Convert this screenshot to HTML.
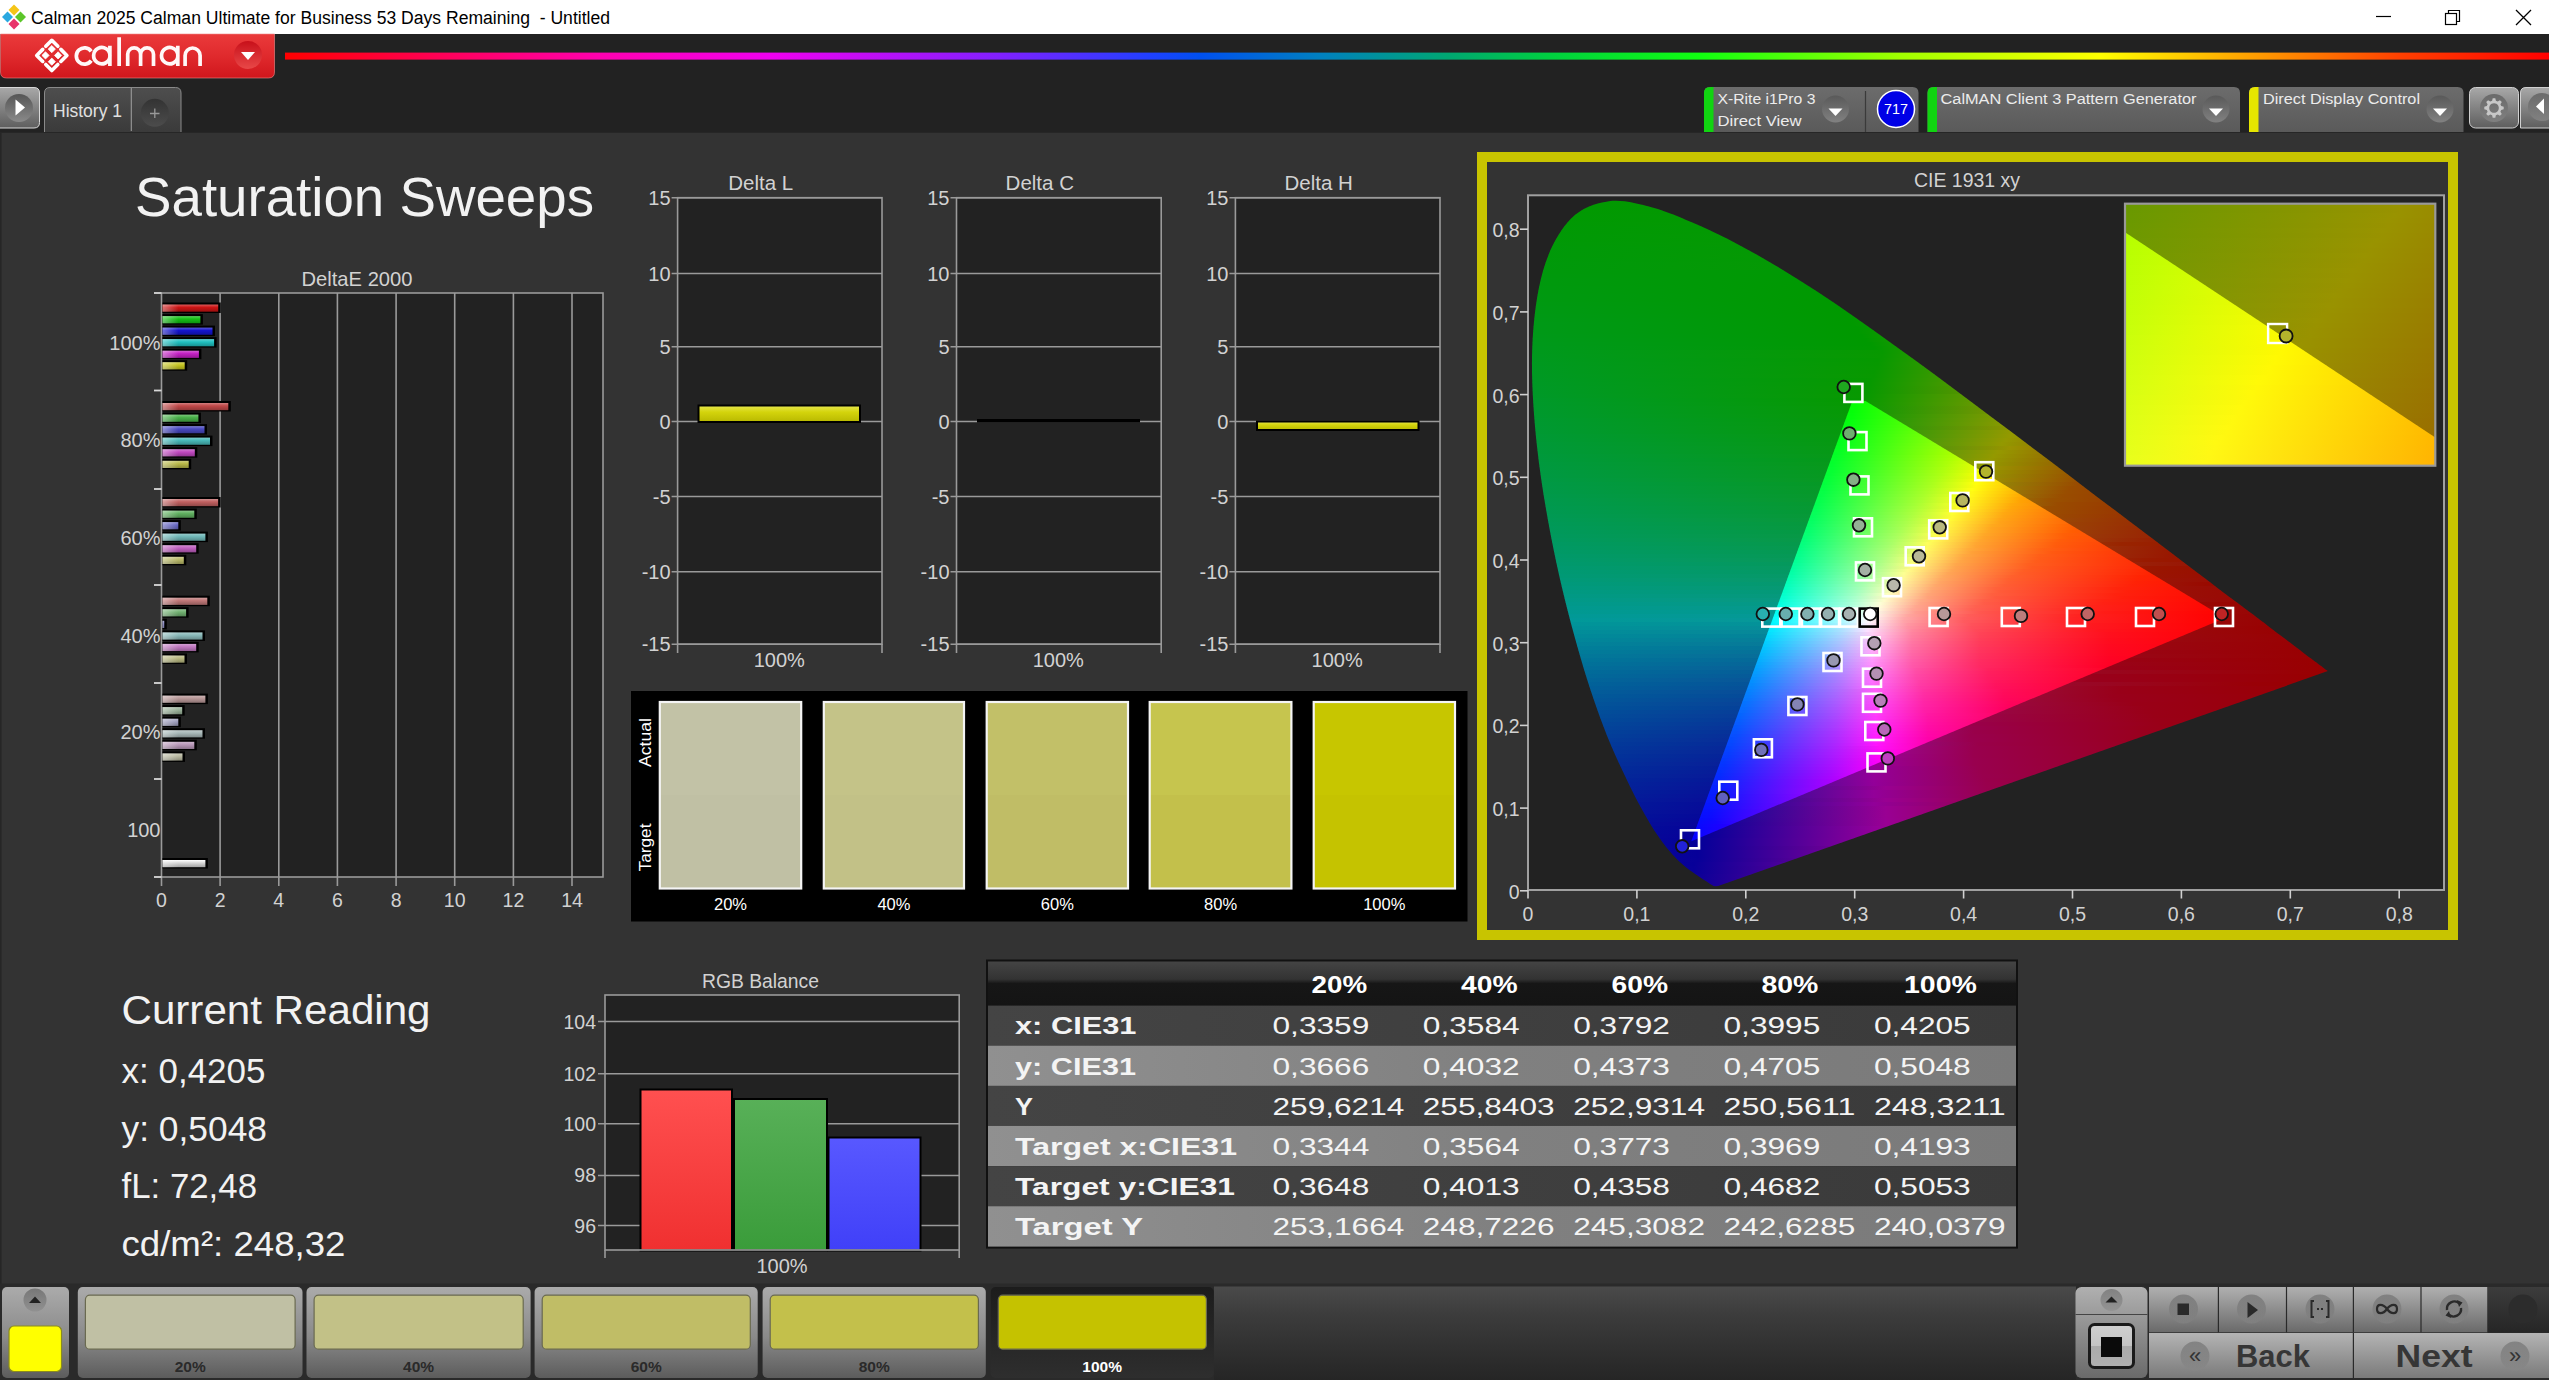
<!DOCTYPE html>
<html><head><meta charset="utf-8"><title>Calman</title>
<style>html,body{margin:0;padding:0;background:#333;overflow:hidden}svg{display:block}text{font-family:"Liberation Sans",sans-serif}</style>
</head><body>
<svg width="2549" height="1380" viewBox="0 0 2549 1380">
<defs>
<linearGradient id="redg" x1="0" y1="0" x2="0" y2="1"><stop offset="0" stop-color="#ea3a3b"/><stop offset="0.5" stop-color="#e02a2d"/><stop offset="1" stop-color="#d0161c"/></linearGradient>
<linearGradient id="redc" x1="0" y1="0" x2="0" y2="1"><stop offset="0" stop-color="#c8101a"/><stop offset="1" stop-color="#e84848"/></linearGradient>
<linearGradient id="rainbow" gradientUnits="userSpaceOnUse" x1="285" y1="0" x2="2549" y2="0">
<stop offset="0" stop-color="#ff0000"/>
<stop offset="0.14" stop-color="#ff00b0"/>
<stop offset="0.215" stop-color="#f000f0"/>
<stop offset="0.316" stop-color="#8020ff"/>
<stop offset="0.382" stop-color="#2040ff"/>
<stop offset="0.404" stop-color="#0050f0"/>
<stop offset="0.457" stop-color="#0080c0"/>
<stop offset="0.515" stop-color="#00a870"/>
<stop offset="0.559" stop-color="#00d040"/>
<stop offset="0.625" stop-color="#10ff10"/>
<stop offset="0.713" stop-color="#a0ff00"/>
<stop offset="0.802" stop-color="#ffff00"/>
<stop offset="0.868" stop-color="#ffa000"/>
<stop offset="0.934" stop-color="#ff4000"/>
<stop offset="1" stop-color="#ff0000"/>
</linearGradient>
<linearGradient id="btng" x1="0" y1="0" x2="0" y2="1"><stop offset="0" stop-color="#a8a8a8"/><stop offset="1" stop-color="#5e5e5e"/></linearGradient>
<linearGradient id="circg" x1="0" y1="0" x2="0" y2="1"><stop offset="0" stop-color="#555"/><stop offset="1" stop-color="#8a8a8a"/></linearGradient>
<linearGradient id="tabg" x1="0" y1="0" x2="0" y2="1"><stop offset="0" stop-color="#4e4e4e"/><stop offset="1" stop-color="#3a3a3a"/></linearGradient>
<linearGradient id="devg" x1="0" y1="0" x2="0" y2="1"><stop offset="0" stop-color="#6c6c6c"/><stop offset="1" stop-color="#5a5a5a"/></linearGradient>
<linearGradient id="plg" x1="0" y1="0" x2="0" y2="1"><stop offset="0" stop-color="#333"/><stop offset="1" stop-color="#4c4c4c"/></linearGradient>
<linearGradient id="strg" x1="0" y1="0" x2="0" y2="1"><stop offset="0" stop-color="#10d010"/><stop offset="1" stop-color="#10e010"/></linearGradient>
<linearGradient id="hlg" gradientUnits="objectBoundingBox" x1="0" y1="0" x2="1" y2="0"><stop offset="0" stop-color="#fff" stop-opacity="0.4"/><stop offset="1" stop-color="#fff" stop-opacity="0"/></linearGradient>
<linearGradient id="bg10" x1="0" y1="0" x2="0" y2="1"><stop offset="0" stop-color="#db5a5a"/><stop offset="0.4" stop-color="#cc1414"/><stop offset="1" stop-color="#990f0f"/></linearGradient>
<linearGradient id="bg11" x1="0" y1="0" x2="0" y2="1"><stop offset="0" stop-color="#5ad25a"/><stop offset="0.4" stop-color="#14c014"/><stop offset="1" stop-color="#0f900f"/></linearGradient>
<linearGradient id="bg12" x1="0" y1="0" x2="0" y2="1"><stop offset="0" stop-color="#5a5adb"/><stop offset="0.4" stop-color="#1414cc"/><stop offset="1" stop-color="#0f0f99"/></linearGradient>
<linearGradient id="bg13" x1="0" y1="0" x2="0" y2="1"><stop offset="0" stop-color="#62d2d2"/><stop offset="0.4" stop-color="#20c0c0"/><stop offset="1" stop-color="#189090"/></linearGradient>
<linearGradient id="bg14" x1="0" y1="0" x2="0" y2="1"><stop offset="0" stop-color="#d562d5"/><stop offset="0.4" stop-color="#c420c4"/><stop offset="1" stop-color="#931893"/></linearGradient>
<linearGradient id="bg15" x1="0" y1="0" x2="0" y2="1"><stop offset="0" stop-color="#d5d562"/><stop offset="0.4" stop-color="#c4c420"/><stop offset="1" stop-color="#939318"/></linearGradient>
<linearGradient id="bg16" x1="0" y1="0" x2="0" y2="1"><stop offset="0" stop-color="#d27e7e"/><stop offset="0.4" stop-color="#c04848"/><stop offset="1" stop-color="#903636"/></linearGradient>
<linearGradient id="bg17" x1="0" y1="0" x2="0" y2="1"><stop offset="0" stop-color="#7ec77e"/><stop offset="0.4" stop-color="#48b048"/><stop offset="1" stop-color="#368436"/></linearGradient>
<linearGradient id="bg18" x1="0" y1="0" x2="0" y2="1"><stop offset="0" stop-color="#7e7ed2"/><stop offset="0.4" stop-color="#4848c0"/><stop offset="1" stop-color="#363690"/></linearGradient>
<linearGradient id="bg19" x1="0" y1="0" x2="0" y2="1"><stop offset="0" stop-color="#7ecdcd"/><stop offset="0.4" stop-color="#48b8b8"/><stop offset="1" stop-color="#368a8a"/></linearGradient>
<linearGradient id="bg20" x1="0" y1="0" x2="0" y2="1"><stop offset="0" stop-color="#d27ed2"/><stop offset="0.4" stop-color="#c048c0"/><stop offset="1" stop-color="#903690"/></linearGradient>
<linearGradient id="bg21" x1="0" y1="0" x2="0" y2="1"><stop offset="0" stop-color="#cdcd7e"/><stop offset="0.4" stop-color="#b8b848"/><stop offset="1" stop-color="#8a8a36"/></linearGradient>
<linearGradient id="bg22" x1="0" y1="0" x2="0" y2="1"><stop offset="0" stop-color="#d28f8f"/><stop offset="0.4" stop-color="#c06060"/><stop offset="1" stop-color="#904848"/></linearGradient>
<linearGradient id="bg23" x1="0" y1="0" x2="0" y2="1"><stop offset="0" stop-color="#8fc78f"/><stop offset="0.4" stop-color="#60b060"/><stop offset="1" stop-color="#488448"/></linearGradient>
<linearGradient id="bg24" x1="0" y1="0" x2="0" y2="1"><stop offset="0" stop-color="#8f8fd2"/><stop offset="0.4" stop-color="#6060c0"/><stop offset="1" stop-color="#484890"/></linearGradient>
<linearGradient id="bg25" x1="0" y1="0" x2="0" y2="1"><stop offset="0" stop-color="#9acdcd"/><stop offset="0.4" stop-color="#70b8b8"/><stop offset="1" stop-color="#548a8a"/></linearGradient>
<linearGradient id="bg26" x1="0" y1="0" x2="0" y2="1"><stop offset="0" stop-color="#d28fd2"/><stop offset="0.4" stop-color="#c060c0"/><stop offset="1" stop-color="#904890"/></linearGradient>
<linearGradient id="bg27" x1="0" y1="0" x2="0" y2="1"><stop offset="0" stop-color="#cdcd95"/><stop offset="0.4" stop-color="#b8b868"/><stop offset="1" stop-color="#8a8a4e"/></linearGradient>
<linearGradient id="bg28" x1="0" y1="0" x2="0" y2="1"><stop offset="0" stop-color="#d2a0a0"/><stop offset="0.4" stop-color="#c07878"/><stop offset="1" stop-color="#905a5a"/></linearGradient>
<linearGradient id="bg29" x1="0" y1="0" x2="0" y2="1"><stop offset="0" stop-color="#9ac79a"/><stop offset="0.4" stop-color="#70b070"/><stop offset="1" stop-color="#548454"/></linearGradient>
<linearGradient id="bg30" x1="0" y1="0" x2="0" y2="1"><stop offset="0" stop-color="#a0a0cd"/><stop offset="0.4" stop-color="#7878b8"/><stop offset="1" stop-color="#5a5a8a"/></linearGradient>
<linearGradient id="bg31" x1="0" y1="0" x2="0" y2="1"><stop offset="0" stop-color="#abcdcd"/><stop offset="0.4" stop-color="#88b8b8"/><stop offset="1" stop-color="#668a8a"/></linearGradient>
<linearGradient id="bg32" x1="0" y1="0" x2="0" y2="1"><stop offset="0" stop-color="#d2a0d2"/><stop offset="0.4" stop-color="#c078c0"/><stop offset="1" stop-color="#905a90"/></linearGradient>
<linearGradient id="bg33" x1="0" y1="0" x2="0" y2="1"><stop offset="0" stop-color="#cdcda6"/><stop offset="0.4" stop-color="#b8b880"/><stop offset="1" stop-color="#8a8a60"/></linearGradient>
<linearGradient id="bg34" x1="0" y1="0" x2="0" y2="1"><stop offset="0" stop-color="#cdb6b6"/><stop offset="0.4" stop-color="#b89898"/><stop offset="1" stop-color="#8a7272"/></linearGradient>
<linearGradient id="bg35" x1="0" y1="0" x2="0" y2="1"><stop offset="0" stop-color="#b6c7b6"/><stop offset="0.4" stop-color="#98b098"/><stop offset="1" stop-color="#728472"/></linearGradient>
<linearGradient id="bg36" x1="0" y1="0" x2="0" y2="1"><stop offset="0" stop-color="#b6b6cd"/><stop offset="0.4" stop-color="#9898b8"/><stop offset="1" stop-color="#72728a"/></linearGradient>
<linearGradient id="bg37" x1="0" y1="0" x2="0" y2="1"><stop offset="0" stop-color="#c2cdcd"/><stop offset="0.4" stop-color="#a8b8b8"/><stop offset="1" stop-color="#7e8a8a"/></linearGradient>
<linearGradient id="bg38" x1="0" y1="0" x2="0" y2="1"><stop offset="0" stop-color="#cdb6cd"/><stop offset="0.4" stop-color="#b898b8"/><stop offset="1" stop-color="#8a728a"/></linearGradient>
<linearGradient id="bg39" x1="0" y1="0" x2="0" y2="1"><stop offset="0" stop-color="#cdcdbc"/><stop offset="0.4" stop-color="#b8b8a0"/><stop offset="1" stop-color="#8a8a78"/></linearGradient>
<linearGradient id="bg40" x1="0" y1="0" x2="0" y2="1"><stop offset="0" stop-color="#ffffff"/><stop offset="0.4" stop-color="#d8d8d8"/><stop offset="1" stop-color="#a2a2a2"/></linearGradient>
<linearGradient id="ylbar" x1="0" y1="0" x2="0" y2="1"><stop offset="0" stop-color="#e6e650"/><stop offset="0.4" stop-color="#d4d40c"/><stop offset="1" stop-color="#b8b800"/></linearGradient>
<clipPath id="locus"><path d="M1716.0 886.8 C1715.7 886.8 1715.1 886.7 1714.7 886.6 C1714.2 886.4 1713.9 886.3 1713.5 886.0 C1713.0 885.8 1712.5 885.5 1711.9 885.1 C1711.3 884.7 1710.6 884.2 1709.8 883.7 C1708.9 883.1 1708.1 882.5 1707.0 881.8 C1706.0 881.1 1704.9 880.3 1703.4 879.4 C1702.0 878.5 1700.4 877.4 1698.5 876.2 C1696.7 874.9 1694.7 873.7 1692.4 872.0 C1690.2 870.4 1687.6 868.6 1684.8 866.2 C1682.0 863.9 1679.2 861.7 1675.6 857.8 C1671.9 853.9 1667.8 849.5 1663.1 843.0 C1658.4 836.5 1653.3 829.3 1647.4 819.0 C1641.4 808.7 1634.8 796.8 1627.4 781.1 C1620.0 765.4 1611.1 747.2 1602.8 724.8 C1594.5 702.5 1585.6 676.1 1577.4 646.8 C1569.2 617.6 1560.3 583.0 1553.6 549.5 C1546.8 515.9 1540.5 478.9 1536.9 445.5 C1533.4 412.2 1531.2 378.5 1532.2 349.3 C1533.3 320.1 1536.8 292.1 1543.1 270.4 C1549.5 248.7 1559.4 230.8 1570.4 219.3 C1581.3 207.8 1595.2 203.2 1608.9 201.2 C1622.6 199.3 1637.8 203.7 1652.4 207.5 C1667.0 211.4 1682.2 218.2 1696.5 224.3 C1710.8 230.5 1724.5 237.3 1738.1 244.4 C1751.7 251.5 1764.8 259.1 1778.0 267.0 C1791.3 274.9 1804.4 283.3 1817.5 291.8 C1830.5 300.3 1843.5 309.3 1856.4 318.3 C1869.4 327.3 1882.3 336.5 1895.3 345.9 C1908.3 355.2 1921.3 364.8 1934.3 374.3 C1947.3 383.9 1960.2 393.6 1973.1 403.2 C1986.0 412.8 1998.9 422.5 2011.6 432.1 C2024.3 441.6 2037.0 451.2 2049.4 460.6 C2061.8 470.0 2074.1 479.3 2086.1 488.4 C2098.1 497.5 2109.9 506.4 2121.3 515.0 C2132.7 523.6 2143.8 532.0 2154.4 540.0 C2164.9 548.0 2175.2 555.8 2184.6 562.9 C2194.0 570.0 2202.6 576.5 2210.8 582.7 C2219.0 589.0 2226.8 594.9 2233.9 600.2 C2240.9 605.5 2247.3 610.2 2253.1 614.6 C2258.8 619.0 2264.0 622.9 2268.6 626.4 C2273.3 630.0 2277.3 633.0 2281.0 635.8 C2284.8 638.6 2288.0 641.0 2291.0 643.3 C2293.9 645.5 2296.5 647.5 2298.9 649.3 C2301.3 651.2 2303.5 652.8 2305.5 654.4 C2307.6 655.9 2309.4 657.3 2311.0 658.5 C2312.6 659.7 2314.1 660.8 2315.3 661.7 C2316.6 662.7 2317.7 663.5 2318.6 664.2 C2319.6 664.9 2320.4 665.6 2321.1 666.1 C2321.8 666.7 2322.5 667.1 2323.0 667.5 C2323.5 667.9 2323.8 668.1 2324.2 668.4 C2324.5 668.7 2324.7 668.8 2325.1 669.2 C2325.6 669.5 2326.2 670.0 2326.7 670.3 C2327.1 670.7 2327.6 671.0 2327.8 671.1 Z"/></clipPath>
<clipPath id="tri"><path d="M2225.0 617.9 L1854.7 394.6 L1691.3 841.2 Z"/></clipPath>
<linearGradient id="o0" gradientUnits="userSpaceOnUse" x1="1530" x2="2330" y1="0" y2="0"><stop offset=".000" stop-color="#009900"/><stop offset=".515" stop-color="#079900"/><stop offset=".835" stop-color="#969900"/><stop offset="1.000" stop-color="#995b00"/></linearGradient>
<linearGradient id="o1" gradientUnits="userSpaceOnUse" x1="1530" x2="2330" y1="0" y2="0"><stop offset=".000" stop-color="#009901"/><stop offset=".515" stop-color="#089900"/><stop offset=".830" stop-color="#969900"/><stop offset="1.000" stop-color="#995a00"/></linearGradient>
<linearGradient id="o2" gradientUnits="userSpaceOnUse" x1="1530" x2="2330" y1="0" y2="0"><stop offset=".000" stop-color="#009901"/><stop offset=".510" stop-color="#079900"/><stop offset=".825" stop-color="#959900"/><stop offset="1.000" stop-color="#995900"/></linearGradient>
<linearGradient id="o3" gradientUnits="userSpaceOnUse" x1="1530" x2="2330" y1="0" y2="0"><stop offset=".000" stop-color="#009902"/><stop offset=".510" stop-color="#079900"/><stop offset=".820" stop-color="#949900"/><stop offset="1.000" stop-color="#995800"/></linearGradient>
<linearGradient id="o4" gradientUnits="userSpaceOnUse" x1="1530" x2="2330" y1="0" y2="0"><stop offset=".000" stop-color="#009903"/><stop offset=".510" stop-color="#089900"/><stop offset=".835" stop-color="#999300"/><stop offset="1.000" stop-color="#995600"/></linearGradient>
<linearGradient id="o5" gradientUnits="userSpaceOnUse" x1="1530" x2="2330" y1="0" y2="0"><stop offset=".000" stop-color="#009903"/><stop offset=".505" stop-color="#079900"/><stop offset=".815" stop-color="#969900"/><stop offset="1.000" stop-color="#995500"/></linearGradient>
<linearGradient id="o6" gradientUnits="userSpaceOnUse" x1="1530" x2="2330" y1="0" y2="0"><stop offset=".000" stop-color="#009904"/><stop offset=".505" stop-color="#089900"/><stop offset=".810" stop-color="#959900"/><stop offset="1.000" stop-color="#995400"/></linearGradient>
<linearGradient id="o7" gradientUnits="userSpaceOnUse" x1="1530" x2="2330" y1="0" y2="0"><stop offset=".000" stop-color="#009905"/><stop offset=".500" stop-color="#079900"/><stop offset=".805" stop-color="#959900"/><stop offset="1.000" stop-color="#995300"/></linearGradient>
<linearGradient id="o8" gradientUnits="userSpaceOnUse" x1="1530" x2="2330" y1="0" y2="0"><stop offset=".000" stop-color="#009905"/><stop offset=".500" stop-color="#079900"/><stop offset=".800" stop-color="#949900"/><stop offset="1.000" stop-color="#995100"/></linearGradient>
<linearGradient id="o9" gradientUnits="userSpaceOnUse" x1="1530" x2="2330" y1="0" y2="0"><stop offset=".000" stop-color="#009906"/><stop offset=".500" stop-color="#089900"/><stop offset=".815" stop-color="#999300"/><stop offset="1.000" stop-color="#995000"/></linearGradient>
<linearGradient id="o10" gradientUnits="userSpaceOnUse" x1="1530" x2="2330" y1="0" y2="0"><stop offset=".000" stop-color="#009906"/><stop offset=".495" stop-color="#079900"/><stop offset=".795" stop-color="#969900"/><stop offset="1.000" stop-color="#994f00"/></linearGradient>
<linearGradient id="o11" gradientUnits="userSpaceOnUse" x1="1530" x2="2330" y1="0" y2="0"><stop offset=".000" stop-color="#009907"/><stop offset=".495" stop-color="#089900"/><stop offset=".790" stop-color="#959900"/><stop offset="1.000" stop-color="#994e00"/></linearGradient>
<linearGradient id="o12" gradientUnits="userSpaceOnUse" x1="1530" x2="2330" y1="0" y2="0"><stop offset=".000" stop-color="#009908"/><stop offset=".490" stop-color="#079900"/><stop offset=".785" stop-color="#959900"/><stop offset=".995" stop-color="#994e00"/><stop offset="1.000" stop-color="#994c00"/></linearGradient>
<linearGradient id="o13" gradientUnits="userSpaceOnUse" x1="1530" x2="2330" y1="0" y2="0"><stop offset=".000" stop-color="#009909"/><stop offset=".490" stop-color="#079900"/><stop offset=".780" stop-color="#949900"/><stop offset=".995" stop-color="#994c00"/><stop offset="1.000" stop-color="#994b00"/></linearGradient>
<linearGradient id="o14" gradientUnits="userSpaceOnUse" x1="1530" x2="2330" y1="0" y2="0"><stop offset=".000" stop-color="#009909"/><stop offset=".490" stop-color="#089900"/><stop offset=".795" stop-color="#999300"/><stop offset=".985" stop-color="#994d00"/><stop offset="1.000" stop-color="#994a00"/></linearGradient>
<linearGradient id="o15" gradientUnits="userSpaceOnUse" x1="1530" x2="2330" y1="0" y2="0"><stop offset=".000" stop-color="#00990a"/><stop offset=".485" stop-color="#079900"/><stop offset=".775" stop-color="#969900"/><stop offset=".975" stop-color="#994e00"/><stop offset="1.000" stop-color="#994900"/></linearGradient>
<linearGradient id="o16" gradientUnits="userSpaceOnUse" x1="1530" x2="2330" y1="0" y2="0"><stop offset=".000" stop-color="#00990b"/><stop offset=".485" stop-color="#089900"/><stop offset=".770" stop-color="#959900"/><stop offset=".970" stop-color="#994e00"/><stop offset="1.000" stop-color="#994800"/></linearGradient>
<linearGradient id="o17" gradientUnits="userSpaceOnUse" x1="1530" x2="2330" y1="0" y2="0"><stop offset=".000" stop-color="#00990b"/><stop offset=".485" stop-color="#089900"/><stop offset=".785" stop-color="#999100"/><stop offset=".970" stop-color="#994d00"/><stop offset="1.000" stop-color="#994700"/></linearGradient>
<linearGradient id="o18" gradientUnits="userSpaceOnUse" x1="1530" x2="2330" y1="0" y2="0"><stop offset=".000" stop-color="#00990c"/><stop offset=".455" stop-color="#009900"/><stop offset=".720" stop-color="#7c9900"/><stop offset=".785" stop-color="#998f00"/><stop offset=".975" stop-color="#994b00"/><stop offset="1.000" stop-color="#994500"/></linearGradient>
<linearGradient id="o19" gradientUnits="userSpaceOnUse" x1="1530" x2="2330" y1="0" y2="0"><stop offset=".000" stop-color="#00990d"/><stop offset=".425" stop-color="#009900"/><stop offset=".500" stop-color="#109900"/><stop offset=".775" stop-color="#999200"/><stop offset=".960" stop-color="#994d00"/><stop offset="1.000" stop-color="#994400"/></linearGradient>
<linearGradient id="o20" gradientUnits="userSpaceOnUse" x1="1530" x2="2330" y1="0" y2="0"><stop offset=".000" stop-color="#00990e"/><stop offset=".410" stop-color="#009900"/><stop offset=".490" stop-color="#0d9900"/><stop offset=".770" stop-color="#999300"/><stop offset=".950" stop-color="#994e00"/><stop offset="1.000" stop-color="#994300"/></linearGradient>
<linearGradient id="o21" gradientUnits="userSpaceOnUse" x1="1530" x2="2330" y1="0" y2="0"><stop offset=".000" stop-color="#00990e"/><stop offset=".400" stop-color="#009900"/><stop offset=".485" stop-color="#0c9900"/><stop offset=".770" stop-color="#999100"/><stop offset=".955" stop-color="#994c00"/><stop offset="1.000" stop-color="#994200"/></linearGradient>
<linearGradient id="o22" gradientUnits="userSpaceOnUse" x1="1530" x2="2330" y1="0" y2="0"><stop offset=".000" stop-color="#00990f"/><stop offset=".390" stop-color="#009900"/><stop offset=".480" stop-color="#0a9900"/><stop offset=".765" stop-color="#999100"/><stop offset=".945" stop-color="#994d00"/><stop offset="1.000" stop-color="#994100"/></linearGradient>
<linearGradient id="o23" gradientUnits="userSpaceOnUse" x1="1530" x2="2330" y1="0" y2="0"><stop offset=".000" stop-color="#009910"/><stop offset=".390" stop-color="#009900"/><stop offset=".480" stop-color="#0b9900"/><stop offset=".760" stop-color="#999200"/><stop offset=".940" stop-color="#994d00"/><stop offset="1.000" stop-color="#994000"/></linearGradient>
<linearGradient id="o24" gradientUnits="userSpaceOnUse" x1="1530" x2="2330" y1="0" y2="0"><stop offset=".000" stop-color="#009911"/><stop offset=".390" stop-color="#009900"/><stop offset=".475" stop-color="#0a9900"/><stop offset=".755" stop-color="#999200"/><stop offset=".930" stop-color="#994e00"/><stop offset="1.000" stop-color="#993f00"/></linearGradient>
<linearGradient id="o25" gradientUnits="userSpaceOnUse" x1="1530" x2="2330" y1="0" y2="0"><stop offset=".000" stop-color="#009911"/><stop offset=".385" stop-color="#009900"/><stop offset=".475" stop-color="#0b9900"/><stop offset=".750" stop-color="#999300"/><stop offset=".925" stop-color="#994e00"/><stop offset="1.000" stop-color="#993d00"/></linearGradient>
<linearGradient id="o26" gradientUnits="userSpaceOnUse" x1="1530" x2="2330" y1="0" y2="0"><stop offset=".000" stop-color="#009912"/><stop offset=".390" stop-color="#009900"/><stop offset=".475" stop-color="#0c9900"/><stop offset=".745" stop-color="#999300"/><stop offset=".915" stop-color="#994f00"/><stop offset="1.000" stop-color="#993c00"/></linearGradient>
<linearGradient id="o27" gradientUnits="userSpaceOnUse" x1="1530" x2="2330" y1="0" y2="0"><stop offset=".000" stop-color="#009913"/><stop offset=".390" stop-color="#009900"/><stop offset=".470" stop-color="#0a9900"/><stop offset=".745" stop-color="#999100"/><stop offset=".920" stop-color="#994c00"/><stop offset="1.000" stop-color="#993b00"/></linearGradient>
<linearGradient id="o28" gradientUnits="userSpaceOnUse" x1="1530" x2="2330" y1="0" y2="0"><stop offset=".000" stop-color="#009914"/><stop offset=".390" stop-color="#009900"/><stop offset=".470" stop-color="#0b9900"/><stop offset=".740" stop-color="#999100"/><stop offset=".910" stop-color="#994d00"/><stop offset="1.000" stop-color="#993a00"/></linearGradient>
<linearGradient id="o29" gradientUnits="userSpaceOnUse" x1="1530" x2="2330" y1="0" y2="0"><stop offset=".000" stop-color="#009915"/><stop offset=".395" stop-color="#009900"/><stop offset=".470" stop-color="#0c9900"/><stop offset=".735" stop-color="#999200"/><stop offset=".905" stop-color="#994d00"/><stop offset="1.000" stop-color="#993900"/></linearGradient>
<linearGradient id="o30" gradientUnits="userSpaceOnUse" x1="1530" x2="2330" y1="0" y2="0"><stop offset=".000" stop-color="#009916"/><stop offset=".400" stop-color="#009900"/><stop offset=".470" stop-color="#0d9900"/><stop offset=".730" stop-color="#999300"/><stop offset=".900" stop-color="#994d00"/><stop offset="1.000" stop-color="#993800"/></linearGradient>
<linearGradient id="o31" gradientUnits="userSpaceOnUse" x1="1530" x2="2330" y1="0" y2="0"><stop offset=".000" stop-color="#009917"/><stop offset=".400" stop-color="#009900"/><stop offset=".475" stop-color="#109900"/><stop offset=".725" stop-color="#999300"/><stop offset=".890" stop-color="#994e00"/><stop offset="1.000" stop-color="#993700"/></linearGradient>
<linearGradient id="o32" gradientUnits="userSpaceOnUse" x1="1530" x2="2330" y1="0" y2="0"><stop offset=".000" stop-color="#009917"/><stop offset=".410" stop-color="#009900"/><stop offset=".495" stop-color="#1b9900"/><stop offset=".725" stop-color="#999100"/><stop offset=".895" stop-color="#994c00"/><stop offset="1.000" stop-color="#993600"/></linearGradient>
<linearGradient id="o33" gradientUnits="userSpaceOnUse" x1="1530" x2="2330" y1="0" y2="0"><stop offset=".000" stop-color="#009918"/><stop offset=".410" stop-color="#009900"/><stop offset=".495" stop-color="#1c9900"/><stop offset=".720" stop-color="#999100"/><stop offset=".885" stop-color="#994d00"/><stop offset="1.000" stop-color="#993500"/></linearGradient>
<linearGradient id="o34" gradientUnits="userSpaceOnUse" x1="1530" x2="2330" y1="0" y2="0"><stop offset=".000" stop-color="#009919"/><stop offset=".415" stop-color="#009900"/><stop offset=".585" stop-color="#4d9900"/><stop offset=".715" stop-color="#999200"/><stop offset=".880" stop-color="#994d00"/><stop offset="1.000" stop-color="#993400"/></linearGradient>
<linearGradient id="o35" gradientUnits="userSpaceOnUse" x1="1530" x2="2330" y1="0" y2="0"><stop offset=".000" stop-color="#00991a"/><stop offset=".420" stop-color="#009900"/><stop offset=".635" stop-color="#6d9900"/><stop offset=".715" stop-color="#998f00"/><stop offset=".880" stop-color="#994b00"/><stop offset="1.000" stop-color="#993300"/></linearGradient>
<linearGradient id="o36" gradientUnits="userSpaceOnUse" x1="1530" x2="2330" y1="0" y2="0"><stop offset=".000" stop-color="#00991b"/><stop offset=".425" stop-color="#009900"/><stop offset=".665" stop-color="#839900"/><stop offset=".715" stop-color="#998d00"/><stop offset=".885" stop-color="#994900"/><stop offset="1.000" stop-color="#993200"/></linearGradient>
<linearGradient id="o37" gradientUnits="userSpaceOnUse" x1="1530" x2="2330" y1="0" y2="0"><stop offset=".000" stop-color="#00991c"/><stop offset=".430" stop-color="#019900"/><stop offset=".680" stop-color="#909900"/><stop offset=".795" stop-color="#996300"/><stop offset="1.000" stop-color="#993100"/></linearGradient>
<linearGradient id="o38" gradientUnits="userSpaceOnUse" x1="1530" x2="2330" y1="0" y2="0"><stop offset=".000" stop-color="#00991d"/><stop offset=".440" stop-color="#079900"/><stop offset=".680" stop-color="#939900"/><stop offset=".865" stop-color="#994b00"/><stop offset="1.000" stop-color="#993000"/></linearGradient>
<linearGradient id="o39" gradientUnits="userSpaceOnUse" x1="1530" x2="2330" y1="0" y2="0"><stop offset=".000" stop-color="#00991e"/><stop offset=".440" stop-color="#089900"/><stop offset=".680" stop-color="#959900"/><stop offset=".845" stop-color="#994f00"/><stop offset="1.000" stop-color="#992f00"/></linearGradient>
<linearGradient id="o40" gradientUnits="userSpaceOnUse" x1="1530" x2="2330" y1="0" y2="0"><stop offset=".000" stop-color="#00991f"/><stop offset=".435" stop-color="#069900"/><stop offset=".675" stop-color="#959900"/><stop offset=".845" stop-color="#994e00"/><stop offset="1.000" stop-color="#992e00"/></linearGradient>
<linearGradient id="o41" gradientUnits="userSpaceOnUse" x1="1530" x2="2330" y1="0" y2="0"><stop offset=".000" stop-color="#009920"/><stop offset=".435" stop-color="#079900"/><stop offset=".670" stop-color="#949900"/><stop offset=".840" stop-color="#994e00"/><stop offset="1.000" stop-color="#992d00"/></linearGradient>
<linearGradient id="o42" gradientUnits="userSpaceOnUse" x1="1530" x2="2330" y1="0" y2="0"><stop offset=".000" stop-color="#009921"/><stop offset=".435" stop-color="#089900"/><stop offset=".680" stop-color="#999400"/><stop offset=".830" stop-color="#994f00"/><stop offset="1.000" stop-color="#992c00"/></linearGradient>
<linearGradient id="o43" gradientUnits="userSpaceOnUse" x1="1530" x2="2330" y1="0" y2="0"><stop offset=".000" stop-color="#009922"/><stop offset=".430" stop-color="#079900"/><stop offset=".660" stop-color="#929900"/><stop offset=".835" stop-color="#994c00"/><stop offset="1.000" stop-color="#992b00"/></linearGradient>
<linearGradient id="o44" gradientUnits="userSpaceOnUse" x1="1530" x2="2330" y1="0" y2="0"><stop offset=".000" stop-color="#009923"/><stop offset=".430" stop-color="#089900"/><stop offset=".660" stop-color="#959900"/><stop offset=".820" stop-color="#994f00"/><stop offset="1.000" stop-color="#992a00"/></linearGradient>
<linearGradient id="o45" gradientUnits="userSpaceOnUse" x1="1530" x2="2330" y1="0" y2="0"><stop offset=".000" stop-color="#009924"/><stop offset=".425" stop-color="#069900"/><stop offset=".655" stop-color="#949900"/><stop offset=".820" stop-color="#994d00"/><stop offset="1.000" stop-color="#992900"/></linearGradient>
<linearGradient id="o46" gradientUnits="userSpaceOnUse" x1="1530" x2="2330" y1="0" y2="0"><stop offset=".000" stop-color="#009925"/><stop offset=".425" stop-color="#079900"/><stop offset=".650" stop-color="#949900"/><stop offset=".815" stop-color="#994d00"/><stop offset="1.000" stop-color="#992800"/></linearGradient>
<linearGradient id="o47" gradientUnits="userSpaceOnUse" x1="1530" x2="2330" y1="0" y2="0"><stop offset=".000" stop-color="#009926"/><stop offset=".425" stop-color="#089900"/><stop offset=".660" stop-color="#999400"/><stop offset=".805" stop-color="#994e00"/><stop offset="1.000" stop-color="#992700"/></linearGradient>
<linearGradient id="o48" gradientUnits="userSpaceOnUse" x1="1530" x2="2330" y1="0" y2="0"><stop offset=".000" stop-color="#009927"/><stop offset=".420" stop-color="#079900"/><stop offset=".660" stop-color="#999000"/><stop offset=".805" stop-color="#994d00"/><stop offset="1.000" stop-color="#992600"/></linearGradient>
<linearGradient id="o49" gradientUnits="userSpaceOnUse" x1="1530" x2="2330" y1="0" y2="0"><stop offset=".000" stop-color="#009928"/><stop offset=".420" stop-color="#089900"/><stop offset=".640" stop-color="#959900"/><stop offset=".795" stop-color="#994e00"/><stop offset="1.000" stop-color="#992500"/></linearGradient>
<linearGradient id="o50" gradientUnits="userSpaceOnUse" x1="1530" x2="2330" y1="0" y2="0"><stop offset=".000" stop-color="#00992a"/><stop offset=".415" stop-color="#069900"/><stop offset=".635" stop-color="#949900"/><stop offset=".795" stop-color="#994d00"/><stop offset="1.000" stop-color="#992400"/></linearGradient>
<linearGradient id="o51" gradientUnits="userSpaceOnUse" x1="1530" x2="2330" y1="0" y2="0"><stop offset=".000" stop-color="#00992b"/><stop offset=".415" stop-color="#079901"/><stop offset=".630" stop-color="#939900"/><stop offset=".790" stop-color="#994c00"/><stop offset="1.000" stop-color="#992300"/></linearGradient>
<linearGradient id="o52" gradientUnits="userSpaceOnUse" x1="1530" x2="2330" y1="0" y2="0"><stop offset=".000" stop-color="#00992c"/><stop offset=".415" stop-color="#089903"/><stop offset=".640" stop-color="#999300"/><stop offset=".780" stop-color="#994e00"/><stop offset="1.000" stop-color="#992200"/></linearGradient>
<linearGradient id="o53" gradientUnits="userSpaceOnUse" x1="1530" x2="2330" y1="0" y2="0"><stop offset=".000" stop-color="#00992d"/><stop offset=".410" stop-color="#069905"/><stop offset=".635" stop-color="#999400"/><stop offset=".770" stop-color="#994f00"/><stop offset="1.000" stop-color="#992100"/></linearGradient>
<linearGradient id="o54" gradientUnits="userSpaceOnUse" x1="1530" x2="2330" y1="0" y2="0"><stop offset=".000" stop-color="#00992e"/><stop offset=".410" stop-color="#079906"/><stop offset=".620" stop-color="#959900"/><stop offset=".770" stop-color="#994e00"/><stop offset="1.000" stop-color="#992000"/></linearGradient>
<linearGradient id="o55" gradientUnits="userSpaceOnUse" x1="1530" x2="2330" y1="0" y2="0"><stop offset=".000" stop-color="#009930"/><stop offset=".405" stop-color="#069908"/><stop offset=".615" stop-color="#949900"/><stop offset=".765" stop-color="#994e00"/><stop offset="1.000" stop-color="#991f00"/></linearGradient>
<linearGradient id="o56" gradientUnits="userSpaceOnUse" x1="1530" x2="2330" y1="0" y2="0"><stop offset=".000" stop-color="#009931"/><stop offset=".405" stop-color="#079909"/><stop offset=".610" stop-color="#939900"/><stop offset=".765" stop-color="#994c00"/><stop offset="1.000" stop-color="#991f00"/></linearGradient>
<linearGradient id="o57" gradientUnits="userSpaceOnUse" x1="1530" x2="2330" y1="0" y2="0"><stop offset=".000" stop-color="#009932"/><stop offset=".405" stop-color="#08990a"/><stop offset=".620" stop-color="#999300"/><stop offset=".750" stop-color="#994f00"/><stop offset="1.000" stop-color="#991e00"/></linearGradient>
<linearGradient id="o58" gradientUnits="userSpaceOnUse" x1="1530" x2="2330" y1="0" y2="0"><stop offset=".000" stop-color="#009933"/><stop offset=".400" stop-color="#06990c"/><stop offset=".605" stop-color="#959900"/><stop offset=".745" stop-color="#994f00"/><stop offset="1.000" stop-color="#991d00"/></linearGradient>
<linearGradient id="o59" gradientUnits="userSpaceOnUse" x1="1530" x2="2330" y1="0" y2="0"><stop offset=".000" stop-color="#009935"/><stop offset=".400" stop-color="#07990e"/><stop offset=".600" stop-color="#949900"/><stop offset=".745" stop-color="#994d00"/><stop offset="1.000" stop-color="#991c00"/></linearGradient>
<linearGradient id="o60" gradientUnits="userSpaceOnUse" x1="1530" x2="2330" y1="0" y2="0"><stop offset=".000" stop-color="#009936"/><stop offset=".395" stop-color="#069910"/><stop offset=".595" stop-color="#949900"/><stop offset=".740" stop-color="#994d00"/><stop offset="1.000" stop-color="#991b00"/></linearGradient>
<linearGradient id="o61" gradientUnits="userSpaceOnUse" x1="1530" x2="2330" y1="0" y2="0"><stop offset=".000" stop-color="#009938"/><stop offset=".395" stop-color="#079911"/><stop offset=".590" stop-color="#939900"/><stop offset=".740" stop-color="#994b00"/><stop offset="1.000" stop-color="#991a00"/></linearGradient>
<linearGradient id="o62" gradientUnits="userSpaceOnUse" x1="1530" x2="2330" y1="0" y2="0"><stop offset=".000" stop-color="#009939"/><stop offset=".395" stop-color="#089913"/><stop offset=".600" stop-color="#999300"/><stop offset=".725" stop-color="#994e00"/><stop offset="1.000" stop-color="#991900"/></linearGradient>
<linearGradient id="o63" gradientUnits="userSpaceOnUse" x1="1530" x2="2330" y1="0" y2="0"><stop offset=".000" stop-color="#00993a"/><stop offset=".390" stop-color="#069915"/><stop offset=".585" stop-color="#959900"/><stop offset=".720" stop-color="#994e00"/><stop offset=".995" stop-color="#991900"/><stop offset="1.000" stop-color="#991800"/></linearGradient>
<linearGradient id="o64" gradientUnits="userSpaceOnUse" x1="1530" x2="2330" y1="0" y2="0"><stop offset=".000" stop-color="#00993c"/><stop offset=".390" stop-color="#079917"/><stop offset=".580" stop-color="#949900"/><stop offset=".720" stop-color="#994c00"/><stop offset="1.000" stop-color="#991700"/></linearGradient>
<linearGradient id="o65" gradientUnits="userSpaceOnUse" x1="1530" x2="2330" y1="0" y2="0"><stop offset=".000" stop-color="#00993d"/><stop offset=".385" stop-color="#059919"/><stop offset=".575" stop-color="#939900"/><stop offset=".715" stop-color="#994c00"/><stop offset=".995" stop-color="#991700"/><stop offset="1.000" stop-color="#991700"/></linearGradient>
<linearGradient id="o66" gradientUnits="userSpaceOnUse" x1="1530" x2="2330" y1="0" y2="0"><stop offset=".000" stop-color="#00993f"/><stop offset=".385" stop-color="#07991a"/><stop offset=".570" stop-color="#929900"/><stop offset=".715" stop-color="#994a00"/><stop offset="1.000" stop-color="#991600"/></linearGradient>
<linearGradient id="o67" gradientUnits="userSpaceOnUse" x1="1530" x2="2330" y1="0" y2="0"><stop offset=".000" stop-color="#009940"/><stop offset=".385" stop-color="#08991c"/><stop offset=".580" stop-color="#999300"/><stop offset=".700" stop-color="#994e00"/><stop offset=".965" stop-color="#991900"/><stop offset="1.000" stop-color="#991500"/></linearGradient>
<linearGradient id="o68" gradientUnits="userSpaceOnUse" x1="1530" x2="2330" y1="0" y2="0"><stop offset=".000" stop-color="#009942"/><stop offset=".380" stop-color="#06991f"/><stop offset=".565" stop-color="#959900"/><stop offset=".695" stop-color="#994e00"/><stop offset=".960" stop-color="#991800"/><stop offset="1.000" stop-color="#991400"/></linearGradient>
<linearGradient id="o69" gradientUnits="userSpaceOnUse" x1="1530" x2="2330" y1="0" y2="0"><stop offset=".000" stop-color="#009943"/><stop offset=".380" stop-color="#079920"/><stop offset=".560" stop-color="#949903"/><stop offset=".690" stop-color="#994e00"/><stop offset=".950" stop-color="#991800"/><stop offset="1.000" stop-color="#991300"/></linearGradient>
<linearGradient id="o70" gradientUnits="userSpaceOnUse" x1="1530" x2="2330" y1="0" y2="0"><stop offset=".000" stop-color="#009945"/><stop offset=".380" stop-color="#089922"/><stop offset=".570" stop-color="#999103"/><stop offset=".690" stop-color="#994c00"/><stop offset=".955" stop-color="#991700"/><stop offset="1.000" stop-color="#991200"/></linearGradient>
<linearGradient id="o71" gradientUnits="userSpaceOnUse" x1="1530" x2="2330" y1="0" y2="0"><stop offset=".000" stop-color="#009947"/><stop offset=".375" stop-color="#069925"/><stop offset=".550" stop-color="#929909"/><stop offset=".685" stop-color="#994b00"/><stop offset=".950" stop-color="#991700"/><stop offset="1.000" stop-color="#991200"/></linearGradient>
<linearGradient id="o72" gradientUnits="userSpaceOnUse" x1="1530" x2="2330" y1="0" y2="0"><stop offset=".000" stop-color="#009948"/><stop offset=".375" stop-color="#089927"/><stop offset=".560" stop-color="#999208"/><stop offset=".675" stop-color="#994d00"/><stop offset=".930" stop-color="#991800"/><stop offset="1.000" stop-color="#991100"/></linearGradient>
<linearGradient id="o73" gradientUnits="userSpaceOnUse" x1="1530" x2="2330" y1="0" y2="0"><stop offset=".000" stop-color="#00994a"/><stop offset=".370" stop-color="#069929"/><stop offset=".545" stop-color="#95990e"/><stop offset=".670" stop-color="#994d00"/><stop offset=".920" stop-color="#991800"/><stop offset="1.000" stop-color="#991000"/></linearGradient>
<linearGradient id="o74" gradientUnits="userSpaceOnUse" x1="1530" x2="2330" y1="0" y2="0"><stop offset=".000" stop-color="#00994c"/><stop offset=".370" stop-color="#07992b"/><stop offset=".540" stop-color="#939911"/><stop offset=".665" stop-color="#994d00"/><stop offset=".915" stop-color="#991800"/><stop offset="1.000" stop-color="#990f00"/></linearGradient>
<linearGradient id="o75" gradientUnits="userSpaceOnUse" x1="1530" x2="2330" y1="0" y2="0"><stop offset=".000" stop-color="#00994e"/><stop offset=".370" stop-color="#08992d"/><stop offset=".545" stop-color="#999511"/><stop offset=".650" stop-color="#995100"/><stop offset=".885" stop-color="#991a00"/><stop offset="1.000" stop-color="#990e00"/></linearGradient>
<linearGradient id="o76" gradientUnits="userSpaceOnUse" x1="1530" x2="2330" y1="0" y2="0"><stop offset=".000" stop-color="#00994f"/><stop offset=".365" stop-color="#069930"/><stop offset=".530" stop-color="#919917"/><stop offset=".660" stop-color="#994b00"/><stop offset=".915" stop-color="#991600"/><stop offset="1.000" stop-color="#990d00"/></linearGradient>
<linearGradient id="o77" gradientUnits="userSpaceOnUse" x1="1530" x2="2330" y1="0" y2="0"><stop offset=".000" stop-color="#009951"/><stop offset=".365" stop-color="#079932"/><stop offset=".540" stop-color="#999216"/><stop offset=".645" stop-color="#994e00"/><stop offset=".880" stop-color="#991900"/><stop offset="1.000" stop-color="#990d00"/></linearGradient>
<linearGradient id="o78" gradientUnits="userSpaceOnUse" x1="1530" x2="2330" y1="0" y2="0"><stop offset=".000" stop-color="#009953"/><stop offset=".360" stop-color="#059935"/><stop offset=".525" stop-color="#94991d"/><stop offset=".640" stop-color="#994e01"/><stop offset=".875" stop-color="#991900"/><stop offset="1.000" stop-color="#990c00"/></linearGradient>
<linearGradient id="o79" gradientUnits="userSpaceOnUse" x1="1530" x2="2330" y1="0" y2="0"><stop offset=".000" stop-color="#009955"/><stop offset=".360" stop-color="#079937"/><stop offset=".520" stop-color="#939920"/><stop offset=".640" stop-color="#994c02"/><stop offset=".880" stop-color="#991700"/><stop offset="1.000" stop-color="#990b00"/></linearGradient>
<linearGradient id="o80" gradientUnits="userSpaceOnUse" x1="1530" x2="2330" y1="0" y2="0"><stop offset=".000" stop-color="#009957"/><stop offset=".360" stop-color="#08993a"/><stop offset=".525" stop-color="#999521"/><stop offset=".625" stop-color="#995006"/><stop offset=".845" stop-color="#991a00"/><stop offset="1.000" stop-color="#990a00"/></linearGradient>
<linearGradient id="o81" gradientUnits="userSpaceOnUse" x1="1530" x2="2330" y1="0" y2="0"><stop offset=".000" stop-color="#009959"/><stop offset=".355" stop-color="#06993d"/><stop offset=".510" stop-color="#919927"/><stop offset=".635" stop-color="#994a06"/><stop offset=".875" stop-color="#991500"/><stop offset="1.000" stop-color="#990900"/></linearGradient>
<linearGradient id="o82" gradientUnits="userSpaceOnUse" x1="1530" x2="2330" y1="0" y2="0"><stop offset=".000" stop-color="#00995b"/><stop offset=".355" stop-color="#07993f"/><stop offset=".520" stop-color="#999226"/><stop offset=".620" stop-color="#994e09"/><stop offset=".845" stop-color="#991800"/><stop offset="1.000" stop-color="#990900"/></linearGradient>
<linearGradient id="o83" gradientUnits="userSpaceOnUse" x1="1530" x2="2330" y1="0" y2="0"><stop offset=".000" stop-color="#00995d"/><stop offset=".350" stop-color="#059943"/><stop offset=".505" stop-color="#94992d"/><stop offset=".615" stop-color="#994e0b"/><stop offset=".835" stop-color="#991800"/><stop offset="1.000" stop-color="#990800"/></linearGradient>
<linearGradient id="o84" gradientUnits="userSpaceOnUse" x1="1530" x2="2330" y1="0" y2="0"><stop offset=".000" stop-color="#00995f"/><stop offset=".350" stop-color="#079945"/><stop offset=".500" stop-color="#939931"/><stop offset=".615" stop-color="#994b0d"/><stop offset=".840" stop-color="#991700"/><stop offset="1.000" stop-color="#990700"/></linearGradient>
<linearGradient id="o85" gradientUnits="userSpaceOnUse" x1="1530" x2="2330" y1="0" y2="0"><stop offset=".000" stop-color="#009961"/><stop offset=".350" stop-color="#089948"/><stop offset=".505" stop-color="#999532"/><stop offset=".600" stop-color="#995011"/><stop offset=".805" stop-color="#991a00"/><stop offset="1.000" stop-color="#990600"/></linearGradient>
<linearGradient id="o86" gradientUnits="userSpaceOnUse" x1="1530" x2="2330" y1="0" y2="0"><stop offset=".000" stop-color="#009964"/><stop offset=".345" stop-color="#06994b"/><stop offset=".490" stop-color="#909939"/><stop offset=".570" stop-color="#995c1a"/><stop offset=".740" stop-color="#992400"/><stop offset="1.000" stop-color="#990600"/></linearGradient>
<linearGradient id="o87" gradientUnits="userSpaceOnUse" x1="1530" x2="2330" y1="0" y2="0"><stop offset=".000" stop-color="#009966"/><stop offset=".345" stop-color="#07994e"/><stop offset=".500" stop-color="#999138"/><stop offset=".595" stop-color="#994d14"/><stop offset=".805" stop-color="#991800"/><stop offset="1.000" stop-color="#990500"/></linearGradient>
<linearGradient id="o88" gradientUnits="userSpaceOnUse" x1="1530" x2="2330" y1="0" y2="0"><stop offset=".000" stop-color="#009968"/><stop offset=".340" stop-color="#059952"/><stop offset=".485" stop-color="#939941"/><stop offset=".590" stop-color="#994d17"/><stop offset=".800" stop-color="#991800"/><stop offset="1.000" stop-color="#990400"/></linearGradient>
<linearGradient id="o89" gradientUnits="userSpaceOnUse" x1="1530" x2="2330" y1="0" y2="0"><stop offset=".000" stop-color="#00996b"/><stop offset=".340" stop-color="#069955"/><stop offset=".480" stop-color="#929945"/><stop offset=".590" stop-color="#994a18"/><stop offset=".805" stop-color="#991600"/><stop offset="1.000" stop-color="#990300"/></linearGradient>
<linearGradient id="o90" gradientUnits="userSpaceOnUse" x1="1530" x2="2330" y1="0" y2="0"><stop offset=".000" stop-color="#00996d"/><stop offset=".340" stop-color="#089958"/><stop offset=".485" stop-color="#999546"/><stop offset=".575" stop-color="#994f1d"/><stop offset=".770" stop-color="#991a00"/><stop offset="1.000" stop-color="#990300"/></linearGradient>
<linearGradient id="o91" gradientUnits="userSpaceOnUse" x1="1530" x2="2330" y1="0" y2="0"><stop offset=".000" stop-color="#00996f"/><stop offset=".335" stop-color="#05995c"/><stop offset=".470" stop-color="#8f994e"/><stop offset=".520" stop-color="#996e33"/><stop offset=".650" stop-color="#99310e"/><stop offset=".910" stop-color="#990900"/><stop offset="1.000" stop-color="#990200"/></linearGradient>
<linearGradient id="o92" gradientUnits="userSpaceOnUse" x1="1530" x2="2330" y1="0" y2="0"><stop offset=".000" stop-color="#009972"/><stop offset=".335" stop-color="#079960"/><stop offset=".480" stop-color="#99914c"/><stop offset=".570" stop-color="#994c21"/><stop offset=".770" stop-color="#991700"/><stop offset="1.000" stop-color="#990100"/></linearGradient>
<linearGradient id="o93" gradientUnits="userSpaceOnUse" x1="1530" x2="2330" y1="0" y2="0"><stop offset=".000" stop-color="#009975"/><stop offset=".330" stop-color="#049963"/><stop offset=".465" stop-color="#939956"/><stop offset=".565" stop-color="#994c24"/><stop offset=".760" stop-color="#991701"/><stop offset="1.000" stop-color="#990000"/></linearGradient>
<linearGradient id="o94" gradientUnits="userSpaceOnUse" x1="1530" x2="2330" y1="0" y2="0"><stop offset=".000" stop-color="#009977"/><stop offset=".330" stop-color="#069967"/><stop offset=".460" stop-color="#91995b"/><stop offset=".560" stop-color="#994c26"/><stop offset=".755" stop-color="#991703"/><stop offset="1.000" stop-color="#990000"/></linearGradient>
<linearGradient id="o95" gradientUnits="userSpaceOnUse" x1="1530" x2="2330" y1="0" y2="0"><stop offset=".000" stop-color="#00997a"/><stop offset=".330" stop-color="#08996b"/><stop offset=".465" stop-color="#99955d"/><stop offset=".545" stop-color="#99512d"/><stop offset=".725" stop-color="#991a07"/><stop offset="1.000" stop-color="#990000"/></linearGradient>
<linearGradient id="o96" gradientUnits="userSpaceOnUse" x1="1530" x2="2330" y1="0" y2="0"><stop offset=".000" stop-color="#00997d"/><stop offset=".325" stop-color="#05996f"/><stop offset=".450" stop-color="#8e9966"/><stop offset=".485" stop-color="#99794e"/><stop offset=".590" stop-color="#993a20"/><stop offset=".845" stop-color="#990a00"/><stop offset="1.000" stop-color="#990000"/></linearGradient>
<linearGradient id="o97" gradientUnits="userSpaceOnUse" x1="1530" x2="2330" y1="0" y2="0"><stop offset=".000" stop-color="#009980"/><stop offset=".325" stop-color="#079973"/><stop offset=".460" stop-color="#999164"/><stop offset=".540" stop-color="#994e31"/><stop offset=".720" stop-color="#991809"/><stop offset="1.000" stop-color="#990000"/></linearGradient>
<linearGradient id="o98" gradientUnits="userSpaceOnUse" x1="1530" x2="2330" y1="0" y2="0"><stop offset=".000" stop-color="#009983"/><stop offset=".320" stop-color="#049978"/><stop offset=".445" stop-color="#929970"/><stop offset=".540" stop-color="#994b32"/><stop offset=".725" stop-color="#991609"/><stop offset="1.000" stop-color="#990000"/></linearGradient>
<linearGradient id="o99" gradientUnits="userSpaceOnUse" x1="1530" x2="2330" y1="0" y2="0"><stop offset=".000" stop-color="#009986"/><stop offset=".320" stop-color="#06997c"/><stop offset=".440" stop-color="#919976"/><stop offset=".535" stop-color="#994b35"/><stop offset=".720" stop-color="#99160a"/><stop offset="1.000" stop-color="#990000"/></linearGradient>
<linearGradient id="o100" gradientUnits="userSpaceOnUse" x1="1530" x2="2330" y1="0" y2="0"><stop offset=".000" stop-color="#009989"/><stop offset=".320" stop-color="#089981"/><stop offset=".445" stop-color="#999477"/><stop offset=".520" stop-color="#99503d"/><stop offset=".685" stop-color="#991a10"/><stop offset=".975" stop-color="#990000"/><stop offset="1.000" stop-color="#990000"/></linearGradient>
<linearGradient id="o101" gradientUnits="userSpaceOnUse" x1="1530" x2="2330" y1="0" y2="0"><stop offset=".000" stop-color="#00998c"/><stop offset=".315" stop-color="#059986"/><stop offset=".430" stop-color="#8d9981"/><stop offset=".460" stop-color="#997c68"/><stop offset=".555" stop-color="#993c30"/><stop offset=".780" stop-color="#990b05"/><stop offset="1.000" stop-color="#990000"/></linearGradient>
<linearGradient id="o102" gradientUnits="userSpaceOnUse" x1="1530" x2="2330" y1="0" y2="0"><stop offset=".000" stop-color="#00998f"/><stop offset=".315" stop-color="#06998b"/><stop offset=".435" stop-color="#999786"/><stop offset=".505" stop-color="#995347"/><stop offset=".660" stop-color="#991c16"/><stop offset=".955" stop-color="#990000"/><stop offset="1.000" stop-color="#990000"/></linearGradient>
<linearGradient id="o103" gradientUnits="userSpaceOnUse" x1="1530" x2="2330" y1="0" y2="0"><stop offset=".000" stop-color="#009992"/><stop offset=".310" stop-color="#039990"/><stop offset=".425" stop-color="#91998e"/><stop offset=".510" stop-color="#994c46"/><stop offset=".675" stop-color="#991814"/><stop offset=".975" stop-color="#990000"/><stop offset="1.000" stop-color="#990000"/></linearGradient>
<linearGradient id="o104" gradientUnits="userSpaceOnUse" x1="1530" x2="2330" y1="0" y2="0"><stop offset=".000" stop-color="#009996"/><stop offset=".310" stop-color="#059995"/><stop offset=".420" stop-color="#909994"/><stop offset=".490" stop-color="#995653"/><stop offset=".635" stop-color="#991e1d"/><stop offset=".945" stop-color="#990000"/><stop offset="1.000" stop-color="#990000"/></linearGradient>
<linearGradient id="o105" gradientUnits="userSpaceOnUse" x1="1530" x2="2330" y1="0" y2="0"><stop offset=".000" stop-color="#009999"/><stop offset=".310" stop-color="#079899"/><stop offset=".425" stop-color="#999496"/><stop offset=".495" stop-color="#994f51"/><stop offset=".650" stop-color="#99191a"/><stop offset=".955" stop-color="#990000"/><stop offset="1.000" stop-color="#990000"/></linearGradient>
<linearGradient id="o106" gradientUnits="userSpaceOnUse" x1="1530" x2="2330" y1="0" y2="0"><stop offset=".000" stop-color="#009599"/><stop offset=".305" stop-color="#049299"/><stop offset=".425" stop-color="#998e97"/><stop offset=".495" stop-color="#994c52"/><stop offset=".650" stop-color="#99181b"/><stop offset=".950" stop-color="#990000"/><stop offset="1.000" stop-color="#990000"/></linearGradient>
<linearGradient id="o107" gradientUnits="userSpaceOnUse" x1="1530" x2="2330" y1="0" y2="0"><stop offset=".000" stop-color="#009299"/><stop offset=".305" stop-color="#068d99"/><stop offset=".425" stop-color="#998897"/><stop offset=".495" stop-color="#994953"/><stop offset=".650" stop-color="#99161c"/><stop offset=".940" stop-color="#990000"/><stop offset="1.000" stop-color="#990000"/></linearGradient>
<linearGradient id="o108" gradientUnits="userSpaceOnUse" x1="1530" x2="2330" y1="0" y2="0"><stop offset=".000" stop-color="#008e99"/><stop offset=".305" stop-color="#078899"/><stop offset=".430" stop-color="#997c91"/><stop offset=".505" stop-color="#99404e"/><stop offset=".675" stop-color="#991118"/><stop offset=".965" stop-color="#990000"/><stop offset="1.000" stop-color="#990000"/></linearGradient>
<linearGradient id="o109" gradientUnits="userSpaceOnUse" x1="1530" x2="2330" y1="0" y2="0"><stop offset=".000" stop-color="#008b99"/><stop offset=".300" stop-color="#048399"/><stop offset=".420" stop-color="#927d99"/><stop offset=".510" stop-color="#993b4c"/><stop offset=".685" stop-color="#990e17"/><stop offset=".990" stop-color="#990000"/><stop offset="1.000" stop-color="#990000"/></linearGradient>
<linearGradient id="o110" gradientUnits="userSpaceOnUse" x1="1530" x2="2330" y1="0" y2="0"><stop offset=".000" stop-color="#008899"/><stop offset=".300" stop-color="#067e99"/><stop offset=".420" stop-color="#927899"/><stop offset=".510" stop-color="#99384d"/><stop offset=".685" stop-color="#990c18"/><stop offset="1.000" stop-color="#990000"/></linearGradient>
<linearGradient id="o111" gradientUnits="userSpaceOnUse" x1="1530" x2="2330" y1="0" y2="0"><stop offset=".000" stop-color="#008499"/><stop offset=".300" stop-color="#077a99"/><stop offset=".420" stop-color="#927299"/><stop offset=".515" stop-color="#99334b"/><stop offset=".700" stop-color="#990916"/><stop offset="1.000" stop-color="#990000"/></linearGradient>
<linearGradient id="o112" gradientUnits="userSpaceOnUse" x1="1530" x2="2330" y1="0" y2="0"><stop offset=".000" stop-color="#008199"/><stop offset=".295" stop-color="#047599"/><stop offset=".420" stop-color="#916c99"/><stop offset=".515" stop-color="#99314c"/><stop offset=".700" stop-color="#990817"/><stop offset="1.000" stop-color="#990000"/></linearGradient>
<linearGradient id="o113" gradientUnits="userSpaceOnUse" x1="1530" x2="2330" y1="0" y2="0"><stop offset=".000" stop-color="#007e99"/><stop offset=".295" stop-color="#067199"/><stop offset=".420" stop-color="#916799"/><stop offset=".520" stop-color="#992c4a"/><stop offset=".715" stop-color="#990516"/><stop offset="1.000" stop-color="#990000"/></linearGradient>
<linearGradient id="o114" gradientUnits="userSpaceOnUse" x1="1530" x2="2330" y1="0" y2="0"><stop offset=".000" stop-color="#007b99"/><stop offset=".295" stop-color="#086d99"/><stop offset=".430" stop-color="#995e94"/><stop offset=".510" stop-color="#992d50"/><stop offset=".690" stop-color="#99071a"/><stop offset="1.000" stop-color="#990000"/></linearGradient>
<linearGradient id="o115" gradientUnits="userSpaceOnUse" x1="1530" x2="2330" y1="0" y2="0"><stop offset=".000" stop-color="#007899"/><stop offset=".290" stop-color="#056999"/><stop offset=".420" stop-color="#905d99"/><stop offset=".525" stop-color="#992549"/><stop offset=".725" stop-color="#990215"/><stop offset="1.000" stop-color="#990000"/></linearGradient>
<linearGradient id="o116" gradientUnits="userSpaceOnUse" x1="1530" x2="2330" y1="0" y2="0"><stop offset=".000" stop-color="#007599"/><stop offset=".290" stop-color="#066599"/><stop offset=".420" stop-color="#905899"/><stop offset=".515" stop-color="#99264f"/><stop offset=".700" stop-color="#99031a"/><stop offset="1.000" stop-color="#990000"/></linearGradient>
<linearGradient id="o117" gradientUnits="userSpaceOnUse" x1="1530" x2="2330" y1="0" y2="0"><stop offset=".000" stop-color="#007299"/><stop offset=".290" stop-color="#086199"/><stop offset=".430" stop-color="#995095"/><stop offset=".515" stop-color="#992450"/><stop offset=".705" stop-color="#99011a"/><stop offset="1.000" stop-color="#990000"/></linearGradient>
<linearGradient id="o118" gradientUnits="userSpaceOnUse" x1="1530" x2="2330" y1="0" y2="0"><stop offset=".000" stop-color="#006f99"/><stop offset=".285" stop-color="#055e99"/><stop offset=".420" stop-color="#904f99"/><stop offset=".485" stop-color="#992d63"/><stop offset=".635" stop-color="#990828"/><stop offset="1.000" stop-color="#990000"/></linearGradient>
<linearGradient id="o119" gradientUnits="userSpaceOnUse" x1="1530" x2="2330" y1="0" y2="0"><stop offset=".000" stop-color="#006d99"/><stop offset=".285" stop-color="#065a99"/><stop offset=".430" stop-color="#994896"/><stop offset=".515" stop-color="#991f52"/><stop offset=".705" stop-color="#99001b"/><stop offset="1.000" stop-color="#990000"/></linearGradient>
<linearGradient id="o120" gradientUnits="userSpaceOnUse" x1="1530" x2="2330" y1="0" y2="0"><stop offset=".000" stop-color="#006a99"/><stop offset=".285" stop-color="#085699"/><stop offset=".430" stop-color="#994496"/><stop offset=".515" stop-color="#991d53"/><stop offset=".705" stop-color="#99001c"/><stop offset="1.000" stop-color="#990000"/></linearGradient>
<linearGradient id="o121" gradientUnits="userSpaceOnUse" x1="1530" x2="2330" y1="0" y2="0"><stop offset=".000" stop-color="#006799"/><stop offset=".280" stop-color="#055399"/><stop offset=".420" stop-color="#8f4299"/><stop offset=".465" stop-color="#992d74"/><stop offset=".590" stop-color="#990b36"/><stop offset=".900" stop-color="#990007"/><stop offset="1.000" stop-color="#990000"/></linearGradient>
<linearGradient id="o122" gradientUnits="userSpaceOnUse" x1="1530" x2="2330" y1="0" y2="0"><stop offset=".000" stop-color="#006499"/><stop offset=".280" stop-color="#065099"/><stop offset=".435" stop-color="#993991"/><stop offset=".530" stop-color="#99154d"/><stop offset=".740" stop-color="#990018"/><stop offset="1.000" stop-color="#990001"/></linearGradient>
<linearGradient id="o123" gradientUnits="userSpaceOnUse" x1="1530" x2="2330" y1="0" y2="0"><stop offset=".000" stop-color="#006299"/><stop offset=".280" stop-color="#084c99"/><stop offset=".435" stop-color="#993592"/><stop offset=".530" stop-color="#99134e"/><stop offset=".735" stop-color="#990019"/><stop offset="1.000" stop-color="#990001"/></linearGradient>
<linearGradient id="o124" gradientUnits="userSpaceOnUse" x1="1530" x2="2330" y1="0" y2="0"><stop offset=".000" stop-color="#005f99"/><stop offset=".275" stop-color="#054a99"/><stop offset=".435" stop-color="#993292"/><stop offset=".530" stop-color="#99114e"/><stop offset=".730" stop-color="#99001b"/><stop offset="1.000" stop-color="#990002"/></linearGradient>
<linearGradient id="o125" gradientUnits="userSpaceOnUse" x1="1530" x2="2330" y1="0" y2="0"><stop offset=".000" stop-color="#005d99"/><stop offset=".275" stop-color="#074699"/><stop offset=".435" stop-color="#992e93"/><stop offset=".530" stop-color="#990f4f"/><stop offset=".735" stop-color="#99001b"/><stop offset="1.000" stop-color="#990002"/></linearGradient>
<linearGradient id="o126" gradientUnits="userSpaceOnUse" x1="1530" x2="2330" y1="0" y2="0"><stop offset=".000" stop-color="#005a99"/><stop offset=".275" stop-color="#084399"/><stop offset=".435" stop-color="#992b93"/><stop offset=".535" stop-color="#990c4e"/><stop offset=".755" stop-color="#990018"/><stop offset="1.000" stop-color="#990003"/></linearGradient>
<linearGradient id="o127" gradientUnits="userSpaceOnUse" x1="1530" x2="2330" y1="0" y2="0"><stop offset=".000" stop-color="#005899"/><stop offset=".270" stop-color="#054199"/><stop offset=".425" stop-color="#932b99"/><stop offset=".540" stop-color="#99094c"/><stop offset=".770" stop-color="#990017"/><stop offset="1.000" stop-color="#990003"/></linearGradient>
<linearGradient id="o128" gradientUnits="userSpaceOnUse" x1="1530" x2="2330" y1="0" y2="0"><stop offset=".000" stop-color="#005599"/><stop offset=".270" stop-color="#073e99"/><stop offset=".425" stop-color="#932799"/><stop offset=".540" stop-color="#99074d"/><stop offset=".770" stop-color="#990018"/><stop offset="1.000" stop-color="#990004"/></linearGradient>
<linearGradient id="o129" gradientUnits="userSpaceOnUse" x1="1530" x2="2330" y1="0" y2="0"><stop offset=".000" stop-color="#005399"/><stop offset=".270" stop-color="#083b99"/><stop offset=".425" stop-color="#932499"/><stop offset=".545" stop-color="#99044b"/><stop offset=".780" stop-color="#990017"/><stop offset="1.000" stop-color="#990004"/></linearGradient>
<linearGradient id="o130" gradientUnits="userSpaceOnUse" x1="1530" x2="2330" y1="0" y2="0"><stop offset=".000" stop-color="#005199"/><stop offset=".265" stop-color="#063999"/><stop offset=".425" stop-color="#922199"/><stop offset=".545" stop-color="#99034c"/><stop offset=".780" stop-color="#990018"/><stop offset="1.000" stop-color="#990004"/></linearGradient>
<linearGradient id="o131" gradientUnits="userSpaceOnUse" x1="1530" x2="2330" y1="0" y2="0"><stop offset=".000" stop-color="#004e99"/><stop offset=".265" stop-color="#073699"/><stop offset=".425" stop-color="#921e99"/><stop offset=".550" stop-color="#99004b"/><stop offset=".795" stop-color="#990016"/><stop offset="1.000" stop-color="#990005"/></linearGradient>
<linearGradient id="o132" gradientUnits="userSpaceOnUse" x1="1530" x2="2330" y1="0" y2="0"><stop offset=".000" stop-color="#004c99"/><stop offset=".265" stop-color="#083399"/><stop offset=".435" stop-color="#991895"/><stop offset=".540" stop-color="#990050"/><stop offset=".770" stop-color="#99001a"/><stop offset="1.000" stop-color="#990005"/></linearGradient>
<linearGradient id="o133" gradientUnits="userSpaceOnUse" x1="1530" x2="2330" y1="0" y2="0"><stop offset=".000" stop-color="#004a99"/><stop offset=".260" stop-color="#063199"/><stop offset=".425" stop-color="#921799"/><stop offset=".555" stop-color="#99004a"/><stop offset=".810" stop-color="#990016"/><stop offset="1.000" stop-color="#990006"/></linearGradient>
<linearGradient id="o134" gradientUnits="userSpaceOnUse" x1="1530" x2="2330" y1="0" y2="0"><stop offset=".000" stop-color="#004899"/><stop offset=".260" stop-color="#072e99"/><stop offset=".440" stop-color="#991191"/><stop offset=".550" stop-color="#99004d"/><stop offset=".795" stop-color="#990018"/><stop offset="1.000" stop-color="#990006"/></linearGradient>
<linearGradient id="o135" gradientUnits="userSpaceOnUse" x1="1530" x2="2330" y1="0" y2="0"><stop offset=".000" stop-color="#004599"/><stop offset=".260" stop-color="#082c99"/><stop offset=".440" stop-color="#990e91"/><stop offset=".550" stop-color="#99004e"/><stop offset=".795" stop-color="#990018"/><stop offset="1.000" stop-color="#990007"/></linearGradient>
<linearGradient id="o136" gradientUnits="userSpaceOnUse" x1="1530" x2="2330" y1="0" y2="0"><stop offset=".000" stop-color="#004399"/><stop offset=".255" stop-color="#062a99"/><stop offset=".425" stop-color="#910f99"/><stop offset=".560" stop-color="#99004a"/><stop offset=".820" stop-color="#990016"/><stop offset="1.000" stop-color="#990007"/></linearGradient>
<linearGradient id="o137" gradientUnits="userSpaceOnUse" x1="1530" x2="2330" y1="0" y2="0"><stop offset=".000" stop-color="#004199"/><stop offset=".255" stop-color="#072799"/><stop offset=".440" stop-color="#990892"/><stop offset=".555" stop-color="#99004d"/><stop offset=".810" stop-color="#990018"/><stop offset="1.000" stop-color="#990008"/></linearGradient>
<linearGradient id="o138" gradientUnits="userSpaceOnUse" x1="1530" x2="2330" y1="0" y2="0"><stop offset=".000" stop-color="#003f99"/><stop offset=".255" stop-color="#082599"/><stop offset=".440" stop-color="#990693"/><stop offset=".555" stop-color="#99004e"/><stop offset=".810" stop-color="#990018"/><stop offset="1.000" stop-color="#990008"/></linearGradient>
<linearGradient id="o139" gradientUnits="userSpaceOnUse" x1="1530" x2="2330" y1="0" y2="0"><stop offset=".000" stop-color="#003d99"/><stop offset=".250" stop-color="#062399"/><stop offset=".440" stop-color="#990393"/><stop offset=".555" stop-color="#99004e"/><stop offset=".810" stop-color="#990019"/><stop offset="1.000" stop-color="#990008"/></linearGradient>
<linearGradient id="o140" gradientUnits="userSpaceOnUse" x1="1530" x2="2330" y1="0" y2="0"><stop offset=".000" stop-color="#003b99"/><stop offset=".250" stop-color="#072199"/><stop offset=".440" stop-color="#990193"/><stop offset=".555" stop-color="#99004f"/><stop offset=".810" stop-color="#990019"/><stop offset="1.000" stop-color="#990009"/></linearGradient>
<linearGradient id="o141" gradientUnits="userSpaceOnUse" x1="1530" x2="2330" y1="0" y2="0"><stop offset=".000" stop-color="#003999"/><stop offset=".250" stop-color="#081f99"/><stop offset=".440" stop-color="#990094"/><stop offset=".555" stop-color="#99004f"/><stop offset=".810" stop-color="#99001a"/><stop offset="1.000" stop-color="#990009"/></linearGradient>
<linearGradient id="o142" gradientUnits="userSpaceOnUse" x1="1530" x2="2330" y1="0" y2="0"><stop offset=".000" stop-color="#003799"/><stop offset=".245" stop-color="#061d99"/><stop offset=".430" stop-color="#940099"/><stop offset=".560" stop-color="#99004e"/><stop offset=".825" stop-color="#990019"/><stop offset="1.000" stop-color="#99000a"/></linearGradient>
<linearGradient id="o143" gradientUnits="userSpaceOnUse" x1="1530" x2="2330" y1="0" y2="0"><stop offset=".000" stop-color="#003599"/><stop offset=".245" stop-color="#071b99"/><stop offset=".430" stop-color="#940099"/><stop offset=".565" stop-color="#99004d"/><stop offset=".835" stop-color="#990018"/><stop offset="1.000" stop-color="#99000a"/></linearGradient>
<linearGradient id="o144" gradientUnits="userSpaceOnUse" x1="1530" x2="2330" y1="0" y2="0"><stop offset=".000" stop-color="#003399"/><stop offset=".245" stop-color="#081999"/><stop offset=".430" stop-color="#940099"/><stop offset=".565" stop-color="#99004e"/><stop offset=".840" stop-color="#990018"/><stop offset="1.000" stop-color="#99000a"/></linearGradient>
<linearGradient id="o145" gradientUnits="userSpaceOnUse" x1="1530" x2="2330" y1="0" y2="0"><stop offset=".000" stop-color="#003199"/><stop offset=".240" stop-color="#061799"/><stop offset=".430" stop-color="#940099"/><stop offset=".570" stop-color="#99004c"/><stop offset=".850" stop-color="#990017"/><stop offset="1.000" stop-color="#99000b"/></linearGradient>
<linearGradient id="o146" gradientUnits="userSpaceOnUse" x1="1530" x2="2330" y1="0" y2="0"><stop offset=".000" stop-color="#002f99"/><stop offset=".240" stop-color="#071599"/><stop offset=".430" stop-color="#930099"/><stop offset=".570" stop-color="#99004d"/><stop offset=".850" stop-color="#990018"/><stop offset="1.000" stop-color="#99000b"/></linearGradient>
<linearGradient id="o147" gradientUnits="userSpaceOnUse" x1="1530" x2="2330" y1="0" y2="0"><stop offset=".000" stop-color="#002e99"/><stop offset=".240" stop-color="#081399"/><stop offset=".445" stop-color="#990091"/><stop offset=".570" stop-color="#99004e"/><stop offset=".850" stop-color="#990018"/><stop offset="1.000" stop-color="#99000c"/></linearGradient>
<linearGradient id="o148" gradientUnits="userSpaceOnUse" x1="1530" x2="2330" y1="0" y2="0"><stop offset=".000" stop-color="#002c99"/><stop offset=".235" stop-color="#061299"/><stop offset=".430" stop-color="#930099"/><stop offset=".575" stop-color="#99004c"/><stop offset=".865" stop-color="#990017"/><stop offset="1.000" stop-color="#99000c"/></linearGradient>
<linearGradient id="o149" gradientUnits="userSpaceOnUse" x1="1530" x2="2330" y1="0" y2="0"><stop offset=".000" stop-color="#002a99"/><stop offset=".235" stop-color="#071099"/><stop offset=".430" stop-color="#930099"/><stop offset=".580" stop-color="#99004b"/><stop offset=".875" stop-color="#990017"/><stop offset="1.000" stop-color="#99000d"/></linearGradient>
<linearGradient id="o150" gradientUnits="userSpaceOnUse" x1="1530" x2="2330" y1="0" y2="0"><stop offset=".000" stop-color="#002899"/><stop offset=".235" stop-color="#080e99"/><stop offset=".445" stop-color="#990092"/><stop offset=".575" stop-color="#99004e"/><stop offset=".865" stop-color="#990018"/><stop offset="1.000" stop-color="#99000d"/></linearGradient>
<linearGradient id="o151" gradientUnits="userSpaceOnUse" x1="1530" x2="2330" y1="0" y2="0"><stop offset=".000" stop-color="#002699"/><stop offset=".230" stop-color="#060c99"/><stop offset=".430" stop-color="#920099"/><stop offset=".585" stop-color="#99004b"/><stop offset=".890" stop-color="#990016"/><stop offset="1.000" stop-color="#99000d"/></linearGradient>
<linearGradient id="o152" gradientUnits="userSpaceOnUse" x1="1530" x2="2330" y1="0" y2="0"><stop offset=".000" stop-color="#002599"/><stop offset=".230" stop-color="#070b99"/><stop offset=".445" stop-color="#990093"/><stop offset=".575" stop-color="#99004f"/><stop offset=".865" stop-color="#990019"/><stop offset="1.000" stop-color="#99000e"/></linearGradient>
<linearGradient id="o153" gradientUnits="userSpaceOnUse" x1="1530" x2="2330" y1="0" y2="0"><stop offset=".000" stop-color="#002399"/><stop offset=".230" stop-color="#080999"/><stop offset=".445" stop-color="#990093"/><stop offset=".575" stop-color="#99004f"/><stop offset=".865" stop-color="#99001a"/><stop offset="1.000" stop-color="#99000e"/></linearGradient>
<linearGradient id="o154" gradientUnits="userSpaceOnUse" x1="1530" x2="2330" y1="0" y2="0"><stop offset=".000" stop-color="#002199"/><stop offset=".225" stop-color="#060899"/><stop offset=".445" stop-color="#990093"/><stop offset=".580" stop-color="#99004e"/><stop offset=".880" stop-color="#990019"/><stop offset="1.000" stop-color="#99000f"/></linearGradient>
<linearGradient id="o155" gradientUnits="userSpaceOnUse" x1="1530" x2="2330" y1="0" y2="0"><stop offset=".000" stop-color="#002099"/><stop offset=".225" stop-color="#070699"/><stop offset=".445" stop-color="#990094"/><stop offset=".580" stop-color="#99004f"/><stop offset=".880" stop-color="#990019"/><stop offset="1.000" stop-color="#99000f"/></linearGradient>
<linearGradient id="o156" gradientUnits="userSpaceOnUse" x1="1530" x2="2330" y1="0" y2="0"><stop offset=".000" stop-color="#001e99"/><stop offset=".225" stop-color="#080499"/><stop offset=".445" stop-color="#990094"/><stop offset=".580" stop-color="#99004f"/><stop offset=".880" stop-color="#990019"/><stop offset="1.000" stop-color="#99000f"/></linearGradient>
<linearGradient id="o157" gradientUnits="userSpaceOnUse" x1="1530" x2="2330" y1="0" y2="0"><stop offset=".000" stop-color="#001d99"/><stop offset=".220" stop-color="#060399"/><stop offset=".435" stop-color="#950099"/><stop offset=".585" stop-color="#99004e"/><stop offset=".895" stop-color="#990018"/><stop offset="1.000" stop-color="#990010"/></linearGradient>
<linearGradient id="o158" gradientUnits="userSpaceOnUse" x1="1530" x2="2330" y1="0" y2="0"><stop offset=".000" stop-color="#001b99"/><stop offset=".220" stop-color="#070199"/><stop offset=".435" stop-color="#950099"/><stop offset=".585" stop-color="#99004f"/><stop offset=".895" stop-color="#990019"/><stop offset="1.000" stop-color="#990010"/></linearGradient>
<linearGradient id="o159" gradientUnits="userSpaceOnUse" x1="1530" x2="2330" y1="0" y2="0"><stop offset=".000" stop-color="#001999"/><stop offset=".220" stop-color="#080099"/><stop offset=".435" stop-color="#950099"/><stop offset=".590" stop-color="#99004e"/><stop offset=".905" stop-color="#990018"/><stop offset="1.000" stop-color="#990011"/></linearGradient>
<linearGradient id="o160" gradientUnits="userSpaceOnUse" x1="1530" x2="2330" y1="0" y2="0"><stop offset=".000" stop-color="#001899"/><stop offset=".215" stop-color="#070099"/><stop offset=".435" stop-color="#950099"/><stop offset=".590" stop-color="#99004e"/><stop offset=".905" stop-color="#990019"/><stop offset="1.000" stop-color="#990011"/></linearGradient>
<linearGradient id="o161" gradientUnits="userSpaceOnUse" x1="1530" x2="2330" y1="0" y2="0"><stop offset=".000" stop-color="#001699"/><stop offset=".215" stop-color="#070099"/><stop offset=".435" stop-color="#950099"/><stop offset=".595" stop-color="#99004d"/><stop offset=".920" stop-color="#990018"/><stop offset="1.000" stop-color="#990011"/></linearGradient>
<linearGradient id="o162" gradientUnits="userSpaceOnUse" x1="1530" x2="2330" y1="0" y2="0"><stop offset=".000" stop-color="#001599"/><stop offset=".215" stop-color="#080099"/><stop offset=".450" stop-color="#990092"/><stop offset=".595" stop-color="#99004e"/><stop offset=".920" stop-color="#990018"/><stop offset="1.000" stop-color="#990012"/></linearGradient>
<linearGradient id="o163" gradientUnits="userSpaceOnUse" x1="1530" x2="2330" y1="0" y2="0"><stop offset=".000" stop-color="#001399"/><stop offset=".210" stop-color="#070099"/><stop offset=".435" stop-color="#940099"/><stop offset=".600" stop-color="#99004d"/><stop offset=".930" stop-color="#990018"/><stop offset="1.000" stop-color="#990012"/></linearGradient>
<linearGradient id="o164" gradientUnits="userSpaceOnUse" x1="1530" x2="2330" y1="0" y2="0"><stop offset=".000" stop-color="#001299"/><stop offset=".210" stop-color="#070099"/><stop offset=".435" stop-color="#940099"/><stop offset=".600" stop-color="#99004d"/><stop offset=".935" stop-color="#990018"/><stop offset="1.000" stop-color="#990012"/></linearGradient>
<linearGradient id="o165" gradientUnits="userSpaceOnUse" x1="1530" x2="2330" y1="0" y2="0"><stop offset=".000" stop-color="#001099"/><stop offset=".210" stop-color="#080099"/><stop offset=".450" stop-color="#990093"/><stop offset=".600" stop-color="#99004e"/><stop offset=".935" stop-color="#990018"/><stop offset="1.000" stop-color="#990013"/></linearGradient>
<linearGradient id="o166" gradientUnits="userSpaceOnUse" x1="1530" x2="2330" y1="0" y2="0"><stop offset=".000" stop-color="#000f99"/><stop offset=".205" stop-color="#070099"/><stop offset=".435" stop-color="#940099"/><stop offset=".605" stop-color="#99004d"/><stop offset=".945" stop-color="#990018"/><stop offset="1.000" stop-color="#990013"/></linearGradient>
<linearGradient id="o167" gradientUnits="userSpaceOnUse" x1="1530" x2="2330" y1="0" y2="0"><stop offset=".000" stop-color="#000e99"/><stop offset=".205" stop-color="#080099"/><stop offset=".450" stop-color="#990093"/><stop offset=".600" stop-color="#99004f"/><stop offset=".935" stop-color="#990019"/><stop offset="1.000" stop-color="#990014"/></linearGradient>
<linearGradient id="o168" gradientUnits="userSpaceOnUse" x1="1530" x2="2330" y1="0" y2="0"><stop offset=".000" stop-color="#000c99"/><stop offset=".205" stop-color="#080099"/><stop offset=".450" stop-color="#990094"/><stop offset=".600" stop-color="#99004f"/><stop offset=".935" stop-color="#990019"/><stop offset="1.000" stop-color="#990014"/></linearGradient>
<linearGradient id="o169" gradientUnits="userSpaceOnUse" x1="1530" x2="2330" y1="0" y2="0"><stop offset=".000" stop-color="#000b99"/><stop offset=".200" stop-color="#070099"/><stop offset=".450" stop-color="#990094"/><stop offset=".600" stop-color="#990050"/><stop offset=".935" stop-color="#99001a"/><stop offset="1.000" stop-color="#990014"/></linearGradient>
<linearGradient id="o170" gradientUnits="userSpaceOnUse" x1="1530" x2="2330" y1="0" y2="0"><stop offset=".000" stop-color="#000999"/><stop offset=".200" stop-color="#080099"/><stop offset=".455" stop-color="#990091"/><stop offset=".615" stop-color="#99004c"/><stop offset=".970" stop-color="#990017"/><stop offset="1.000" stop-color="#990015"/></linearGradient>
<linearGradient id="o171" gradientUnits="userSpaceOnUse" x1="1530" x2="2330" y1="0" y2="0"><stop offset=".000" stop-color="#000899"/><stop offset=".200" stop-color="#080099"/><stop offset=".455" stop-color="#990091"/><stop offset=".615" stop-color="#99004c"/><stop offset=".975" stop-color="#990017"/><stop offset="1.000" stop-color="#990015"/></linearGradient>
<linearGradient id="t0" gradientUnits="userSpaceOnUse" x1="1688" x2="2228" y1="0" y2="0"><stop offset=".000" stop-color="#00ff2b"/><stop offset=".311" stop-color="#04ff03"/><stop offset=".556" stop-color="#abff00"/><stop offset=".659" stop-color="#fffa00"/><stop offset=".793" stop-color="#ffa300"/><stop offset="1.000" stop-color="#ff5e00"/></linearGradient>
<linearGradient id="t1" gradientUnits="userSpaceOnUse" x1="1688" x2="2228" y1="0" y2="0"><stop offset=".000" stop-color="#00ff2d"/><stop offset=".311" stop-color="#06ff05"/><stop offset=".556" stop-color="#aeff00"/><stop offset=".652" stop-color="#fffc00"/><stop offset=".778" stop-color="#ffa700"/><stop offset=".993" stop-color="#ff5e00"/><stop offset="1.000" stop-color="#ff5c00"/></linearGradient>
<linearGradient id="t2" gradientUnits="userSpaceOnUse" x1="1688" x2="2228" y1="0" y2="0"><stop offset=".000" stop-color="#00ff2e"/><stop offset=".311" stop-color="#07ff06"/><stop offset=".556" stop-color="#b1ff00"/><stop offset=".652" stop-color="#fff800"/><stop offset=".785" stop-color="#ffa100"/><stop offset="1.000" stop-color="#ff5b00"/></linearGradient>
<linearGradient id="t3" gradientUnits="userSpaceOnUse" x1="1688" x2="2228" y1="0" y2="0"><stop offset=".000" stop-color="#00ff30"/><stop offset=".304" stop-color="#04ff09"/><stop offset=".541" stop-color="#a8ff00"/><stop offset=".644" stop-color="#fffb00"/><stop offset=".770" stop-color="#ffa600"/><stop offset=".985" stop-color="#ff5c00"/><stop offset="1.000" stop-color="#ff5900"/></linearGradient>
<linearGradient id="t4" gradientUnits="userSpaceOnUse" x1="1688" x2="2228" y1="0" y2="0"><stop offset=".000" stop-color="#00ff31"/><stop offset=".304" stop-color="#05ff0b"/><stop offset=".496" stop-color="#88ff00"/><stop offset=".637" stop-color="#fffe00"/><stop offset=".763" stop-color="#ffa700"/><stop offset=".978" stop-color="#ff5d00"/><stop offset="1.000" stop-color="#ff5800"/></linearGradient>
<linearGradient id="t5" gradientUnits="userSpaceOnUse" x1="1688" x2="2228" y1="0" y2="0"><stop offset=".000" stop-color="#00ff33"/><stop offset=".304" stop-color="#06ff0c"/><stop offset=".481" stop-color="#7fff00"/><stop offset=".637" stop-color="#fff900"/><stop offset=".763" stop-color="#ffa400"/><stop offset=".978" stop-color="#ff5b00"/><stop offset="1.000" stop-color="#ff5600"/></linearGradient>
<linearGradient id="t6" gradientUnits="userSpaceOnUse" x1="1688" x2="2228" y1="0" y2="0"><stop offset=".000" stop-color="#00ff35"/><stop offset=".296" stop-color="#03ff0f"/><stop offset=".474" stop-color="#7cff00"/><stop offset=".630" stop-color="#fffc00"/><stop offset=".756" stop-color="#ffa500"/><stop offset=".963" stop-color="#ff5d00"/><stop offset="1.000" stop-color="#ff5400"/></linearGradient>
<linearGradient id="t7" gradientUnits="userSpaceOnUse" x1="1688" x2="2228" y1="0" y2="0"><stop offset=".000" stop-color="#00ff36"/><stop offset=".296" stop-color="#04ff10"/><stop offset=".474" stop-color="#7eff00"/><stop offset=".630" stop-color="#fff800"/><stop offset=".756" stop-color="#ffa200"/><stop offset=".970" stop-color="#ff5a00"/><stop offset="1.000" stop-color="#ff5300"/></linearGradient>
<linearGradient id="t8" gradientUnits="userSpaceOnUse" x1="1688" x2="2228" y1="0" y2="0"><stop offset=".000" stop-color="#00ff38"/><stop offset=".296" stop-color="#06ff12"/><stop offset=".474" stop-color="#81ff00"/><stop offset=".622" stop-color="#fffb00"/><stop offset=".748" stop-color="#ffa300"/><stop offset=".956" stop-color="#ff5b00"/><stop offset="1.000" stop-color="#ff5100"/></linearGradient>
<linearGradient id="t9" gradientUnits="userSpaceOnUse" x1="1688" x2="2228" y1="0" y2="0"><stop offset=".000" stop-color="#00ff39"/><stop offset=".296" stop-color="#07ff14"/><stop offset=".481" stop-color="#8aff00"/><stop offset=".615" stop-color="#fffe00"/><stop offset=".733" stop-color="#ffa800"/><stop offset=".933" stop-color="#ff5f00"/><stop offset="1.000" stop-color="#ff5000"/></linearGradient>
<linearGradient id="t10" gradientUnits="userSpaceOnUse" x1="1688" x2="2228" y1="0" y2="0"><stop offset=".000" stop-color="#00ff3b"/><stop offset=".289" stop-color="#04ff17"/><stop offset=".489" stop-color="#92ff00"/><stop offset=".615" stop-color="#fff900"/><stop offset=".733" stop-color="#ffa600"/><stop offset=".941" stop-color="#ff5c00"/><stop offset="1.000" stop-color="#ff4e00"/></linearGradient>
<linearGradient id="t11" gradientUnits="userSpaceOnUse" x1="1688" x2="2228" y1="0" y2="0"><stop offset=".000" stop-color="#00ff3d"/><stop offset=".289" stop-color="#05ff18"/><stop offset=".496" stop-color="#9cff00"/><stop offset=".607" stop-color="#fffc00"/><stop offset=".726" stop-color="#ffa700"/><stop offset=".926" stop-color="#ff5e00"/><stop offset="1.000" stop-color="#ff4d00"/></linearGradient>
<linearGradient id="t12" gradientUnits="userSpaceOnUse" x1="1688" x2="2228" y1="0" y2="0"><stop offset=".000" stop-color="#00ff3f"/><stop offset=".289" stop-color="#06ff1a"/><stop offset=".496" stop-color="#9fff00"/><stop offset=".607" stop-color="#fff800"/><stop offset=".726" stop-color="#ffa400"/><stop offset=".926" stop-color="#ff5c00"/><stop offset="1.000" stop-color="#ff4b00"/></linearGradient>
<linearGradient id="t13" gradientUnits="userSpaceOnUse" x1="1688" x2="2228" y1="0" y2="0"><stop offset=".000" stop-color="#00ff40"/><stop offset=".281" stop-color="#03ff1d"/><stop offset=".504" stop-color="#a8ff00"/><stop offset=".600" stop-color="#fffb00"/><stop offset=".719" stop-color="#ffa500"/><stop offset=".919" stop-color="#ff5c00"/><stop offset="1.000" stop-color="#ff4a00"/></linearGradient>
<linearGradient id="t14" gradientUnits="userSpaceOnUse" x1="1688" x2="2228" y1="0" y2="0"><stop offset=".000" stop-color="#00ff42"/><stop offset=".281" stop-color="#04ff1f"/><stop offset=".504" stop-color="#acff00"/><stop offset=".593" stop-color="#fffe00"/><stop offset=".711" stop-color="#ffa600"/><stop offset=".911" stop-color="#ff5c00"/><stop offset="1.000" stop-color="#ff4800"/></linearGradient>
<linearGradient id="t15" gradientUnits="userSpaceOnUse" x1="1688" x2="2228" y1="0" y2="0"><stop offset=".000" stop-color="#00ff44"/><stop offset=".281" stop-color="#06ff21"/><stop offset=".504" stop-color="#afff00"/><stop offset=".593" stop-color="#fff900"/><stop offset=".711" stop-color="#ffa300"/><stop offset=".911" stop-color="#ff5a00"/><stop offset="1.000" stop-color="#ff4700"/></linearGradient>
<linearGradient id="t16" gradientUnits="userSpaceOnUse" x1="1688" x2="2228" y1="0" y2="0"><stop offset=".000" stop-color="#00ff46"/><stop offset=".281" stop-color="#07ff23"/><stop offset=".496" stop-color="#acff00"/><stop offset=".585" stop-color="#fffc00"/><stop offset=".696" stop-color="#ffa800"/><stop offset=".889" stop-color="#ff5e00"/><stop offset="1.000" stop-color="#ff4600"/></linearGradient>
<linearGradient id="t17" gradientUnits="userSpaceOnUse" x1="1688" x2="2228" y1="0" y2="0"><stop offset=".000" stop-color="#00ff48"/><stop offset=".274" stop-color="#03ff26"/><stop offset=".489" stop-color="#a8ff00"/><stop offset=".585" stop-color="#fff800"/><stop offset=".704" stop-color="#ffa100"/><stop offset=".904" stop-color="#ff5900"/><stop offset="1.000" stop-color="#ff4400"/></linearGradient>
<linearGradient id="t18" gradientUnits="userSpaceOnUse" x1="1688" x2="2228" y1="0" y2="0"><stop offset=".000" stop-color="#00ff4a"/><stop offset=".274" stop-color="#05ff28"/><stop offset=".489" stop-color="#acff02"/><stop offset=".578" stop-color="#fffb00"/><stop offset=".689" stop-color="#ffa700"/><stop offset=".881" stop-color="#ff5d00"/><stop offset="1.000" stop-color="#ff4300"/></linearGradient>
<linearGradient id="t19" gradientUnits="userSpaceOnUse" x1="1688" x2="2228" y1="0" y2="0"><stop offset=".000" stop-color="#00ff4c"/><stop offset=".274" stop-color="#06ff2a"/><stop offset=".489" stop-color="#afff04"/><stop offset=".570" stop-color="#fffe00"/><stop offset=".681" stop-color="#ffa800"/><stop offset=".867" stop-color="#ff5f00"/><stop offset="1.000" stop-color="#ff4100"/></linearGradient>
<linearGradient id="t20" gradientUnits="userSpaceOnUse" x1="1688" x2="2228" y1="0" y2="0"><stop offset=".000" stop-color="#00ff4e"/><stop offset=".267" stop-color="#03ff2d"/><stop offset=".481" stop-color="#acff08"/><stop offset=".570" stop-color="#fff900"/><stop offset=".681" stop-color="#ffa500"/><stop offset=".874" stop-color="#ff5b00"/><stop offset="1.000" stop-color="#ff4000"/></linearGradient>
<linearGradient id="t21" gradientUnits="userSpaceOnUse" x1="1688" x2="2228" y1="0" y2="0"><stop offset=".000" stop-color="#00ff50"/><stop offset=".267" stop-color="#04ff2f"/><stop offset=".474" stop-color="#a8ff0b"/><stop offset=".563" stop-color="#fffc00"/><stop offset=".674" stop-color="#ffa600"/><stop offset=".859" stop-color="#ff5d00"/><stop offset="1.000" stop-color="#ff3e00"/></linearGradient>
<linearGradient id="t22" gradientUnits="userSpaceOnUse" x1="1688" x2="2228" y1="0" y2="0"><stop offset=".000" stop-color="#00ff52"/><stop offset=".267" stop-color="#05ff31"/><stop offset=".474" stop-color="#acff0d"/><stop offset=".563" stop-color="#fff800"/><stop offset=".674" stop-color="#ffa300"/><stop offset=".867" stop-color="#ff5900"/><stop offset="1.000" stop-color="#ff3d00"/></linearGradient>
<linearGradient id="t23" gradientUnits="userSpaceOnUse" x1="1688" x2="2228" y1="0" y2="0"><stop offset=".000" stop-color="#00ff54"/><stop offset=".267" stop-color="#07ff33"/><stop offset=".474" stop-color="#b0ff0f"/><stop offset=".556" stop-color="#fffb00"/><stop offset=".667" stop-color="#ffa400"/><stop offset=".852" stop-color="#ff5c00"/><stop offset="1.000" stop-color="#ff3c00"/></linearGradient>
<linearGradient id="t24" gradientUnits="userSpaceOnUse" x1="1688" x2="2228" y1="0" y2="0"><stop offset=".000" stop-color="#00ff56"/><stop offset=".259" stop-color="#03ff36"/><stop offset=".467" stop-color="#acff13"/><stop offset=".548" stop-color="#fffe01"/><stop offset=".652" stop-color="#ffaa00"/><stop offset=".830" stop-color="#ff6000"/><stop offset="1.000" stop-color="#ff3a00"/></linearGradient>
<linearGradient id="t25" gradientUnits="userSpaceOnUse" x1="1688" x2="2228" y1="0" y2="0"><stop offset=".000" stop-color="#00ff58"/><stop offset=".259" stop-color="#05ff39"/><stop offset=".459" stop-color="#a9ff17"/><stop offset=".548" stop-color="#fff904"/><stop offset=".659" stop-color="#ffa200"/><stop offset=".844" stop-color="#ff5a00"/><stop offset="1.000" stop-color="#ff3900"/></linearGradient>
<linearGradient id="t26" gradientUnits="userSpaceOnUse" x1="1688" x2="2228" y1="0" y2="0"><stop offset=".000" stop-color="#00ff5a"/><stop offset=".259" stop-color="#06ff3b"/><stop offset=".459" stop-color="#acff19"/><stop offset=".541" stop-color="#fffc07"/><stop offset=".644" stop-color="#ffa800"/><stop offset=".822" stop-color="#ff5e00"/><stop offset="1.000" stop-color="#ff3700"/></linearGradient>
<linearGradient id="t27" gradientUnits="userSpaceOnUse" x1="1688" x2="2228" y1="0" y2="0"><stop offset=".000" stop-color="#00ff5c"/><stop offset=".252" stop-color="#02ff3e"/><stop offset=".452" stop-color="#a9ff1d"/><stop offset=".533" stop-color="#feff0c"/><stop offset=".637" stop-color="#ffa900"/><stop offset=".807" stop-color="#ff6000"/><stop offset="1.000" stop-color="#ff3600"/></linearGradient>
<linearGradient id="t28" gradientUnits="userSpaceOnUse" x1="1688" x2="2228" y1="0" y2="0"><stop offset=".000" stop-color="#00ff5f"/><stop offset=".252" stop-color="#04ff41"/><stop offset=".452" stop-color="#acff1f"/><stop offset=".533" stop-color="#fffb0e"/><stop offset=".637" stop-color="#ffa600"/><stop offset=".815" stop-color="#ff5c00"/><stop offset="1.000" stop-color="#ff3500"/></linearGradient>
<linearGradient id="t29" gradientUnits="userSpaceOnUse" x1="1688" x2="2228" y1="0" y2="0"><stop offset=".000" stop-color="#00ff61"/><stop offset=".252" stop-color="#05ff43"/><stop offset=".444" stop-color="#a9ff23"/><stop offset=".526" stop-color="#fffe12"/><stop offset=".630" stop-color="#ffa700"/><stop offset=".800" stop-color="#ff5f00"/><stop offset="1.000" stop-color="#ff3300"/></linearGradient>
<linearGradient id="t30" gradientUnits="userSpaceOnUse" x1="1688" x2="2228" y1="0" y2="0"><stop offset=".000" stop-color="#00ff63"/><stop offset=".252" stop-color="#07ff46"/><stop offset=".444" stop-color="#acff26"/><stop offset=".526" stop-color="#fff914"/><stop offset=".630" stop-color="#ffa400"/><stop offset=".807" stop-color="#ff5b00"/><stop offset="1.000" stop-color="#ff3200"/></linearGradient>
<linearGradient id="t31" gradientUnits="userSpaceOnUse" x1="1688" x2="2228" y1="0" y2="0"><stop offset=".000" stop-color="#00ff66"/><stop offset=".244" stop-color="#03ff49"/><stop offset=".437" stop-color="#a9ff2a"/><stop offset=".519" stop-color="#fffc19"/><stop offset=".622" stop-color="#ffa500"/><stop offset=".793" stop-color="#ff5d00"/><stop offset="1.000" stop-color="#ff3100"/></linearGradient>
<linearGradient id="t32" gradientUnits="userSpaceOnUse" x1="1688" x2="2228" y1="0" y2="0"><stop offset=".000" stop-color="#00ff68"/><stop offset=".244" stop-color="#05ff4c"/><stop offset=".437" stop-color="#adff2c"/><stop offset=".511" stop-color="#feff1d"/><stop offset=".615" stop-color="#ffa602"/><stop offset=".785" stop-color="#ff5d00"/><stop offset="1.000" stop-color="#ff2f00"/></linearGradient>
<linearGradient id="t33" gradientUnits="userSpaceOnUse" x1="1688" x2="2228" y1="0" y2="0"><stop offset=".000" stop-color="#00ff6b"/><stop offset=".244" stop-color="#06ff4e"/><stop offset=".430" stop-color="#a9ff31"/><stop offset=".511" stop-color="#fffa1f"/><stop offset=".615" stop-color="#ffa304"/><stop offset=".785" stop-color="#ff5b00"/><stop offset="1.000" stop-color="#ff2e00"/></linearGradient>
<linearGradient id="t34" gradientUnits="userSpaceOnUse" x1="1688" x2="2228" y1="0" y2="0"><stop offset=".000" stop-color="#00ff6d"/><stop offset=".237" stop-color="#02ff52"/><stop offset=".422" stop-color="#a5ff35"/><stop offset=".504" stop-color="#fffe24"/><stop offset=".600" stop-color="#ffa909"/><stop offset=".763" stop-color="#ff6000"/><stop offset="1.000" stop-color="#ff2d00"/></linearGradient>
<linearGradient id="t35" gradientUnits="userSpaceOnUse" x1="1688" x2="2228" y1="0" y2="0"><stop offset=".000" stop-color="#00ff70"/><stop offset=".237" stop-color="#04ff55"/><stop offset=".422" stop-color="#a9ff38"/><stop offset=".504" stop-color="#fff926"/><stop offset=".600" stop-color="#ffa60a"/><stop offset=".763" stop-color="#ff5e00"/><stop offset="1.000" stop-color="#ff2b00"/></linearGradient>
<linearGradient id="t36" gradientUnits="userSpaceOnUse" x1="1688" x2="2228" y1="0" y2="0"><stop offset=".000" stop-color="#00ff72"/><stop offset=".237" stop-color="#05ff58"/><stop offset=".422" stop-color="#adff3a"/><stop offset=".496" stop-color="#fffc2b"/><stop offset=".593" stop-color="#ffa70e"/><stop offset=".741" stop-color="#ff6200"/><stop offset="1.000" stop-color="#ff2a00"/></linearGradient>
<linearGradient id="t37" gradientUnits="userSpaceOnUse" x1="1688" x2="2228" y1="0" y2="0"><stop offset=".000" stop-color="#00ff75"/><stop offset=".237" stop-color="#07ff5a"/><stop offset=".422" stop-color="#b1ff3d"/><stop offset=".489" stop-color="#feff30"/><stop offset=".585" stop-color="#ffa811"/><stop offset=".733" stop-color="#ff6300"/><stop offset="1.000" stop-color="#ff2900"/></linearGradient>
<linearGradient id="t38" gradientUnits="userSpaceOnUse" x1="1688" x2="2228" y1="0" y2="0"><stop offset=".000" stop-color="#00ff78"/><stop offset=".230" stop-color="#03ff5e"/><stop offset=".407" stop-color="#a5ff43"/><stop offset=".489" stop-color="#fffa32"/><stop offset=".585" stop-color="#ffa513"/><stop offset=".741" stop-color="#ff5e00"/><stop offset="1.000" stop-color="#ff2700"/></linearGradient>
<linearGradient id="t39" gradientUnits="userSpaceOnUse" x1="1688" x2="2228" y1="0" y2="0"><stop offset=".000" stop-color="#00ff7a"/><stop offset=".230" stop-color="#04ff61"/><stop offset=".407" stop-color="#a9ff46"/><stop offset=".481" stop-color="#fffe38"/><stop offset=".578" stop-color="#ffa616"/><stop offset=".733" stop-color="#ff5e00"/><stop offset="1.000" stop-color="#ff2600"/></linearGradient>
<linearGradient id="t40" gradientUnits="userSpaceOnUse" x1="1688" x2="2228" y1="0" y2="0"><stop offset=".000" stop-color="#00ff7d"/><stop offset=".230" stop-color="#06ff64"/><stop offset=".407" stop-color="#adff4a"/><stop offset=".481" stop-color="#fff83a"/><stop offset=".578" stop-color="#ffa318"/><stop offset=".741" stop-color="#ff5a00"/><stop offset="1.000" stop-color="#ff2500"/></linearGradient>
<linearGradient id="t41" gradientUnits="userSpaceOnUse" x1="1688" x2="2228" y1="0" y2="0"><stop offset=".000" stop-color="#00ff80"/><stop offset=".222" stop-color="#02ff68"/><stop offset=".400" stop-color="#a9ff4e"/><stop offset=".474" stop-color="#fffc40"/><stop offset=".563" stop-color="#ffa91d"/><stop offset=".719" stop-color="#ff5f00"/><stop offset="1.000" stop-color="#ff2400"/></linearGradient>
<linearGradient id="t42" gradientUnits="userSpaceOnUse" x1="1688" x2="2228" y1="0" y2="0"><stop offset=".000" stop-color="#00ff83"/><stop offset=".222" stop-color="#03ff6c"/><stop offset=".393" stop-color="#a5ff53"/><stop offset=".467" stop-color="#feff45"/><stop offset=".563" stop-color="#ffa51f"/><stop offset=".719" stop-color="#ff5d00"/><stop offset="1.000" stop-color="#ff2200"/></linearGradient>
<linearGradient id="t43" gradientUnits="userSpaceOnUse" x1="1688" x2="2228" y1="0" y2="0"><stop offset=".000" stop-color="#00ff86"/><stop offset=".222" stop-color="#05ff6f"/><stop offset=".393" stop-color="#a9ff56"/><stop offset=".467" stop-color="#fffa47"/><stop offset=".556" stop-color="#ffa723"/><stop offset=".711" stop-color="#ff5d02"/><stop offset="1.000" stop-color="#ff2100"/></linearGradient>
<linearGradient id="t44" gradientUnits="userSpaceOnUse" x1="1688" x2="2228" y1="0" y2="0"><stop offset=".000" stop-color="#00ff89"/><stop offset=".222" stop-color="#07ff72"/><stop offset=".393" stop-color="#aeff5a"/><stop offset=".459" stop-color="#fffe4e"/><stop offset=".548" stop-color="#ffa827"/><stop offset=".696" stop-color="#ff5f06"/><stop offset=".978" stop-color="#ff2300"/><stop offset="1.000" stop-color="#ff2000"/></linearGradient>
<linearGradient id="t45" gradientUnits="userSpaceOnUse" x1="1688" x2="2228" y1="0" y2="0"><stop offset=".000" stop-color="#00ff8c"/><stop offset=".215" stop-color="#02ff77"/><stop offset=".385" stop-color="#a9ff5f"/><stop offset=".459" stop-color="#fff850"/><stop offset=".548" stop-color="#ffa428"/><stop offset=".704" stop-color="#ff5b06"/><stop offset=".993" stop-color="#ff2000"/><stop offset="1.000" stop-color="#ff1f00"/></linearGradient>
<linearGradient id="t46" gradientUnits="userSpaceOnUse" x1="1688" x2="2228" y1="0" y2="0"><stop offset=".000" stop-color="#00ff8f"/><stop offset=".215" stop-color="#04ff7a"/><stop offset=".385" stop-color="#aeff63"/><stop offset=".452" stop-color="#fffc56"/><stop offset=".541" stop-color="#ffa62d"/><stop offset=".689" stop-color="#ff5d0a"/><stop offset=".941" stop-color="#ff2500"/><stop offset="1.000" stop-color="#ff1d00"/></linearGradient>
<linearGradient id="t47" gradientUnits="userSpaceOnUse" x1="1688" x2="2228" y1="0" y2="0"><stop offset=".000" stop-color="#00ff92"/><stop offset=".215" stop-color="#06ff7e"/><stop offset=".378" stop-color="#a9ff68"/><stop offset=".444" stop-color="#feff5c"/><stop offset=".533" stop-color="#ffa731"/><stop offset=".681" stop-color="#ff5d0c"/><stop offset=".881" stop-color="#ff2d00"/><stop offset="1.000" stop-color="#ff1c00"/></linearGradient>
<linearGradient id="t48" gradientUnits="userSpaceOnUse" x1="1688" x2="2228" y1="0" y2="0"><stop offset=".000" stop-color="#00ff95"/><stop offset=".207" stop-color="#01ff82"/><stop offset=".370" stop-color="#a5ff6d"/><stop offset=".444" stop-color="#fffa5f"/><stop offset=".533" stop-color="#ffa432"/><stop offset=".681" stop-color="#ff5b0d"/><stop offset=".881" stop-color="#ff2c00"/><stop offset="1.000" stop-color="#ff1b00"/></linearGradient>
<linearGradient id="t49" gradientUnits="userSpaceOnUse" x1="1688" x2="2228" y1="0" y2="0"><stop offset=".000" stop-color="#00ff99"/><stop offset=".207" stop-color="#03ff86"/><stop offset=".370" stop-color="#aaff71"/><stop offset=".437" stop-color="#fffe66"/><stop offset=".519" stop-color="#ffab3a"/><stop offset=".659" stop-color="#ff6113"/><stop offset=".859" stop-color="#ff2e00"/><stop offset="1.000" stop-color="#ff1a00"/></linearGradient>
<linearGradient id="t50" gradientUnits="userSpaceOnUse" x1="1688" x2="2228" y1="0" y2="0"><stop offset=".000" stop-color="#00ff9c"/><stop offset=".207" stop-color="#05ff8a"/><stop offset=".370" stop-color="#aeff75"/><stop offset=".437" stop-color="#fff867"/><stop offset=".526" stop-color="#ffa138"/><stop offset=".674" stop-color="#ff5911"/><stop offset=".874" stop-color="#ff2a00"/><stop offset="1.000" stop-color="#ff1900"/></linearGradient>
<linearGradient id="t51" gradientUnits="userSpaceOnUse" x1="1688" x2="2228" y1="0" y2="0"><stop offset=".000" stop-color="#00ffa0"/><stop offset=".207" stop-color="#07ff8d"/><stop offset=".363" stop-color="#aaff7a"/><stop offset=".430" stop-color="#fffc6f"/><stop offset=".511" stop-color="#ffa840"/><stop offset=".652" stop-color="#ff5e17"/><stop offset=".867" stop-color="#ff2a00"/><stop offset="1.000" stop-color="#ff1700"/></linearGradient>
<linearGradient id="t52" gradientUnits="userSpaceOnUse" x1="1688" x2="2228" y1="0" y2="0"><stop offset=".000" stop-color="#00ffa3"/><stop offset=".200" stop-color="#02ff92"/><stop offset=".356" stop-color="#a5ff80"/><stop offset=".422" stop-color="#feff76"/><stop offset=".511" stop-color="#ffa442"/><stop offset=".652" stop-color="#ff5c18"/><stop offset=".874" stop-color="#ff2700"/><stop offset="1.000" stop-color="#ff1600"/></linearGradient>
<linearGradient id="t53" gradientUnits="userSpaceOnUse" x1="1688" x2="2228" y1="0" y2="0"><stop offset=".000" stop-color="#00ffa7"/><stop offset=".200" stop-color="#04ff96"/><stop offset=".356" stop-color="#aaff84"/><stop offset=".422" stop-color="#fffa78"/><stop offset=".504" stop-color="#ffa646"/><stop offset=".644" stop-color="#ff5c1b"/><stop offset=".881" stop-color="#ff2400"/><stop offset="1.000" stop-color="#ff1500"/></linearGradient>
<linearGradient id="t54" gradientUnits="userSpaceOnUse" x1="1688" x2="2228" y1="0" y2="0"><stop offset=".000" stop-color="#00ffaa"/><stop offset=".200" stop-color="#06ff9b"/><stop offset=".356" stop-color="#afff89"/><stop offset=".415" stop-color="#fffe80"/><stop offset=".496" stop-color="#ffa74b"/><stop offset=".630" stop-color="#ff5f1f"/><stop offset=".881" stop-color="#ff2300"/><stop offset="1.000" stop-color="#ff1400"/></linearGradient>
<linearGradient id="t55" gradientUnits="userSpaceOnUse" x1="1688" x2="2228" y1="0" y2="0"><stop offset=".000" stop-color="#00ffae"/><stop offset=".193" stop-color="#01ffa0"/><stop offset=".348" stop-color="#aaff8f"/><stop offset=".415" stop-color="#fff882"/><stop offset=".496" stop-color="#ffa34d"/><stop offset=".637" stop-color="#ff5a1f"/><stop offset=".889" stop-color="#ff2000"/><stop offset="1.000" stop-color="#ff1300"/></linearGradient>
<linearGradient id="t56" gradientUnits="userSpaceOnUse" x1="1688" x2="2228" y1="0" y2="0"><stop offset=".000" stop-color="#00ffb2"/><stop offset=".193" stop-color="#03ffa4"/><stop offset=".341" stop-color="#a5ff95"/><stop offset=".407" stop-color="#fffc8a"/><stop offset=".489" stop-color="#ffa552"/><stop offset=".622" stop-color="#ff5d24"/><stop offset=".874" stop-color="#ff2100"/><stop offset="1.000" stop-color="#ff1100"/></linearGradient>
<linearGradient id="t57" gradientUnits="userSpaceOnUse" x1="1688" x2="2228" y1="0" y2="0"><stop offset=".000" stop-color="#00ffb6"/><stop offset=".193" stop-color="#05ffa8"/><stop offset=".341" stop-color="#aaff9a"/><stop offset=".400" stop-color="#fdff92"/><stop offset=".481" stop-color="#ffa657"/><stop offset=".615" stop-color="#ff5d27"/><stop offset=".867" stop-color="#ff2100"/><stop offset="1.000" stop-color="#ff1000"/></linearGradient>
<linearGradient id="t58" gradientUnits="userSpaceOnUse" x1="1688" x2="2228" y1="0" y2="0"><stop offset=".000" stop-color="#00ffba"/><stop offset=".193" stop-color="#07ffad"/><stop offset=".341" stop-color="#afff9f"/><stop offset=".400" stop-color="#fffa95"/><stop offset=".474" stop-color="#ffa85d"/><stop offset=".600" stop-color="#ff602c"/><stop offset=".837" stop-color="#ff2403"/><stop offset="1.000" stop-color="#ff0f00"/></linearGradient>
<linearGradient id="t59" gradientUnits="userSpaceOnUse" x1="1688" x2="2228" y1="0" y2="0"><stop offset=".000" stop-color="#00ffbe"/><stop offset=".185" stop-color="#02ffb2"/><stop offset=".333" stop-color="#aaffa5"/><stop offset=".393" stop-color="#fffe9e"/><stop offset=".467" stop-color="#ffaa63"/><stop offset=".593" stop-color="#ff602f"/><stop offset=".830" stop-color="#ff2405"/><stop offset="1.000" stop-color="#ff0e00"/></linearGradient>
<linearGradient id="t60" gradientUnits="userSpaceOnUse" x1="1688" x2="2228" y1="0" y2="0"><stop offset=".000" stop-color="#00ffc2"/><stop offset=".185" stop-color="#04ffb7"/><stop offset=".326" stop-color="#a5ffab"/><stop offset=".393" stop-color="#fff89f"/><stop offset=".467" stop-color="#ffa564"/><stop offset=".593" stop-color="#ff5e31"/><stop offset=".830" stop-color="#ff2206"/><stop offset="1.000" stop-color="#ff0d00"/></linearGradient>
<linearGradient id="t61" gradientUnits="userSpaceOnUse" x1="1688" x2="2228" y1="0" y2="0"><stop offset=".000" stop-color="#00ffc7"/><stop offset=".185" stop-color="#06ffbc"/><stop offset=".326" stop-color="#aaffb1"/><stop offset=".385" stop-color="#fffca9"/><stop offset=".459" stop-color="#ffa76a"/><stop offset=".585" stop-color="#ff5e34"/><stop offset=".822" stop-color="#ff2208"/><stop offset="1.000" stop-color="#ff0c00"/></linearGradient>
<linearGradient id="t62" gradientUnits="userSpaceOnUse" x1="1688" x2="2228" y1="0" y2="0"><stop offset=".000" stop-color="#00ffcb"/><stop offset=".178" stop-color="#00ffc2"/><stop offset=".319" stop-color="#a5ffb8"/><stop offset=".378" stop-color="#fdffb2"/><stop offset=".452" stop-color="#ffa971"/><stop offset=".570" stop-color="#ff613a"/><stop offset=".793" stop-color="#ff250c"/><stop offset="1.000" stop-color="#ff0a00"/></linearGradient>
<linearGradient id="t63" gradientUnits="userSpaceOnUse" x1="1688" x2="2228" y1="0" y2="0"><stop offset=".000" stop-color="#00ffd0"/><stop offset=".178" stop-color="#02ffc7"/><stop offset=".319" stop-color="#aaffbe"/><stop offset=".378" stop-color="#fffab5"/><stop offset=".452" stop-color="#ffa472"/><stop offset=".578" stop-color="#ff5b39"/><stop offset=".815" stop-color="#ff200b"/><stop offset="1.000" stop-color="#ff0900"/></linearGradient>
<linearGradient id="t64" gradientUnits="userSpaceOnUse" x1="1688" x2="2228" y1="0" y2="0"><stop offset=".000" stop-color="#00ffd4"/><stop offset=".178" stop-color="#05ffcc"/><stop offset=".311" stop-color="#a5ffc4"/><stop offset=".370" stop-color="#ffffbf"/><stop offset=".444" stop-color="#ffa678"/><stop offset=".563" stop-color="#ff5f3f"/><stop offset=".793" stop-color="#ff220e"/><stop offset="1.000" stop-color="#ff0800"/></linearGradient>
<linearGradient id="t65" gradientUnits="userSpaceOnUse" x1="1688" x2="2228" y1="0" y2="0"><stop offset=".000" stop-color="#00ffd9"/><stop offset=".178" stop-color="#07ffd2"/><stop offset=".311" stop-color="#abffcb"/><stop offset=".370" stop-color="#fff7c1"/><stop offset=".444" stop-color="#ffa27a"/><stop offset=".570" stop-color="#ff593e"/><stop offset=".807" stop-color="#ff1e0d"/><stop offset="1.000" stop-color="#ff0700"/></linearGradient>
<linearGradient id="t66" gradientUnits="userSpaceOnUse" x1="1688" x2="2228" y1="0" y2="0"><stop offset=".000" stop-color="#00ffde"/><stop offset=".170" stop-color="#01ffd8"/><stop offset=".304" stop-color="#a5ffd2"/><stop offset=".363" stop-color="#fffccc"/><stop offset=".430" stop-color="#ffaa86"/><stop offset=".548" stop-color="#ff5f47"/><stop offset=".770" stop-color="#ff2313"/><stop offset="1.000" stop-color="#ff0600"/></linearGradient>
<linearGradient id="t67" gradientUnits="userSpaceOnUse" x1="1688" x2="2228" y1="0" y2="0"><stop offset=".000" stop-color="#00ffe3"/><stop offset=".170" stop-color="#03ffde"/><stop offset=".304" stop-color="#abffd8"/><stop offset=".356" stop-color="#fdffd6"/><stop offset=".430" stop-color="#ffa587"/><stop offset=".548" stop-color="#ff5c48"/><stop offset=".770" stop-color="#ff2114"/><stop offset="1.000" stop-color="#ff0500"/></linearGradient>
<linearGradient id="t68" gradientUnits="userSpaceOnUse" x1="1688" x2="2228" y1="0" y2="0"><stop offset=".000" stop-color="#00ffe8"/><stop offset=".170" stop-color="#06ffe4"/><stop offset=".296" stop-color="#a5ffe0"/><stop offset=".356" stop-color="#fffad9"/><stop offset=".422" stop-color="#ffa78f"/><stop offset=".533" stop-color="#ff604f"/><stop offset=".748" stop-color="#ff2319"/><stop offset="1.000" stop-color="#ff0400"/></linearGradient>
<linearGradient id="t69" gradientUnits="userSpaceOnUse" x1="1688" x2="2228" y1="0" y2="0"><stop offset=".000" stop-color="#00ffed"/><stop offset=".163" stop-color="#00ffea"/><stop offset=".289" stop-color="#a0ffe7"/><stop offset=".348" stop-color="#ffffe5"/><stop offset=".415" stop-color="#ffa996"/><stop offset=".526" stop-color="#ff6053"/><stop offset=".733" stop-color="#ff241c"/><stop offset="1.000" stop-color="#ff0300"/></linearGradient>
<linearGradient id="t70" gradientUnits="userSpaceOnUse" x1="1688" x2="2228" y1="0" y2="0"><stop offset=".000" stop-color="#00fff3"/><stop offset=".163" stop-color="#02fff1"/><stop offset=".289" stop-color="#a5ffef"/><stop offset=".341" stop-color="#faffee"/><stop offset=".422" stop-color="#ff9d91"/><stop offset=".541" stop-color="#ff574f"/><stop offset=".770" stop-color="#ff1c17"/><stop offset="1.000" stop-color="#ff0200"/></linearGradient>
<linearGradient id="t71" gradientUnits="userSpaceOnUse" x1="1688" x2="2228" y1="0" y2="0"><stop offset=".000" stop-color="#00fff8"/><stop offset=".163" stop-color="#04fff7"/><stop offset=".289" stop-color="#abfff6"/><stop offset=".341" stop-color="#fffcf3"/><stop offset=".407" stop-color="#ffa69f"/><stop offset=".519" stop-color="#ff5d59"/><stop offset=".726" stop-color="#ff221f"/><stop offset="1.000" stop-color="#ff0000"/></linearGradient>
<linearGradient id="t72" gradientUnits="userSpaceOnUse" x1="1688" x2="2228" y1="0" y2="0"><stop offset=".000" stop-color="#00fffe"/><stop offset=".163" stop-color="#07fffe"/><stop offset=".281" stop-color="#a5fffe"/><stop offset=".333" stop-color="#fdfffe"/><stop offset=".400" stop-color="#ffa8a8"/><stop offset=".511" stop-color="#ff5e5e"/><stop offset=".719" stop-color="#ff2222"/><stop offset="1.000" stop-color="#ff0000"/></linearGradient>
<linearGradient id="t73" gradientUnits="userSpaceOnUse" x1="1688" x2="2228" y1="0" y2="0"><stop offset=".000" stop-color="#00faff"/><stop offset=".156" stop-color="#01f9ff"/><stop offset=".281" stop-color="#a6f8ff"/><stop offset=".333" stop-color="#fdf7ff"/><stop offset=".400" stop-color="#ffa3a9"/><stop offset=".511" stop-color="#ff5a5f"/><stop offset=".719" stop-color="#ff2023"/><stop offset="1.000" stop-color="#ff0000"/></linearGradient>
<linearGradient id="t74" gradientUnits="userSpaceOnUse" x1="1688" x2="2228" y1="0" y2="0"><stop offset=".000" stop-color="#00f5ff"/><stop offset=".156" stop-color="#03f3ff"/><stop offset=".281" stop-color="#a7f0ff"/><stop offset=".333" stop-color="#fcefff"/><stop offset=".407" stop-color="#ff97a3"/><stop offset=".526" stop-color="#ff515a"/><stop offset=".748" stop-color="#ff191f"/><stop offset="1.000" stop-color="#ff0001"/></linearGradient>
<linearGradient id="t75" gradientUnits="userSpaceOnUse" x1="1688" x2="2228" y1="0" y2="0"><stop offset=".000" stop-color="#00efff"/><stop offset=".156" stop-color="#05ecff"/><stop offset=".281" stop-color="#a7e8ff"/><stop offset=".333" stop-color="#fbe7ff"/><stop offset=".407" stop-color="#ff92a4"/><stop offset=".526" stop-color="#ff4e5b"/><stop offset=".748" stop-color="#ff1820"/><stop offset="1.000" stop-color="#ff0002"/></linearGradient>
<linearGradient id="t76" gradientUnits="userSpaceOnUse" x1="1688" x2="2228" y1="0" y2="0"><stop offset=".000" stop-color="#00eaff"/><stop offset=".156" stop-color="#07e6ff"/><stop offset=".281" stop-color="#a8e1ff"/><stop offset=".333" stop-color="#fbdfff"/><stop offset=".415" stop-color="#ff889f"/><stop offset=".533" stop-color="#ff4959"/><stop offset=".763" stop-color="#ff141e"/><stop offset="1.000" stop-color="#ff0003"/></linearGradient>
<linearGradient id="t77" gradientUnits="userSpaceOnUse" x1="1688" x2="2228" y1="0" y2="0"><stop offset=".000" stop-color="#00e4ff"/><stop offset=".148" stop-color="#01e0ff"/><stop offset=".281" stop-color="#a8daff"/><stop offset=".341" stop-color="#ffd0f7"/><stop offset=".415" stop-color="#ff83a0"/><stop offset=".541" stop-color="#ff4357"/><stop offset=".778" stop-color="#ff101d"/><stop offset="1.000" stop-color="#ff0003"/></linearGradient>
<linearGradient id="t78" gradientUnits="userSpaceOnUse" x1="1688" x2="2228" y1="0" y2="0"><stop offset=".000" stop-color="#00dfff"/><stop offset=".148" stop-color="#03daff"/><stop offset=".281" stop-color="#a9d3ff"/><stop offset=".341" stop-color="#ffc9f8"/><stop offset=".415" stop-color="#ff7fa1"/><stop offset=".541" stop-color="#ff4158"/><stop offset=".778" stop-color="#ff0f1e"/><stop offset="1.000" stop-color="#ff0004"/></linearGradient>
<linearGradient id="t79" gradientUnits="userSpaceOnUse" x1="1688" x2="2228" y1="0" y2="0"><stop offset=".000" stop-color="#00daff"/><stop offset=".148" stop-color="#06d4ff"/><stop offset=".281" stop-color="#a9ccff"/><stop offset=".341" stop-color="#ffc2f8"/><stop offset=".415" stop-color="#ff7ba2"/><stop offset=".541" stop-color="#ff3e59"/><stop offset=".778" stop-color="#ff0d1e"/><stop offset="1.000" stop-color="#ff0005"/></linearGradient>
<linearGradient id="t80" gradientUnits="userSpaceOnUse" x1="1688" x2="2228" y1="0" y2="0"><stop offset=".000" stop-color="#00d5ff"/><stop offset=".141" stop-color="#00ceff"/><stop offset=".281" stop-color="#aac5ff"/><stop offset=".341" stop-color="#ffbcf9"/><stop offset=".415" stop-color="#ff76a3"/><stop offset=".541" stop-color="#ff3b5a"/><stop offset=".778" stop-color="#ff0c1f"/><stop offset="1.000" stop-color="#ff0006"/></linearGradient>
<linearGradient id="t81" gradientUnits="userSpaceOnUse" x1="1688" x2="2228" y1="0" y2="0"><stop offset=".000" stop-color="#00d0ff"/><stop offset=".141" stop-color="#02c9ff"/><stop offset=".281" stop-color="#aabfff"/><stop offset=".341" stop-color="#ffb5fa"/><stop offset=".415" stop-color="#ff72a4"/><stop offset=".541" stop-color="#ff395b"/><stop offset=".778" stop-color="#ff0a20"/><stop offset="1.000" stop-color="#ff0006"/></linearGradient>
<linearGradient id="t82" gradientUnits="userSpaceOnUse" x1="1688" x2="2228" y1="0" y2="0"><stop offset=".000" stop-color="#00cbff"/><stop offset=".141" stop-color="#04c3ff"/><stop offset=".281" stop-color="#abb8ff"/><stop offset=".341" stop-color="#ffaffa"/><stop offset=".415" stop-color="#ff6ea5"/><stop offset=".541" stop-color="#ff365d"/><stop offset=".778" stop-color="#ff0921"/><stop offset="1.000" stop-color="#ff0007"/></linearGradient>
<linearGradient id="t83" gradientUnits="userSpaceOnUse" x1="1688" x2="2228" y1="0" y2="0"><stop offset=".000" stop-color="#00c6ff"/><stop offset=".141" stop-color="#06beff"/><stop offset=".281" stop-color="#abb2ff"/><stop offset=".341" stop-color="#ffa9fb"/><stop offset=".415" stop-color="#ff6aa6"/><stop offset=".541" stop-color="#ff345e"/><stop offset=".778" stop-color="#ff0722"/><stop offset="1.000" stop-color="#ff0008"/></linearGradient>
<linearGradient id="t84" gradientUnits="userSpaceOnUse" x1="1688" x2="2228" y1="0" y2="0"><stop offset=".000" stop-color="#00c2ff"/><stop offset=".133" stop-color="#01b9ff"/><stop offset=".274" stop-color="#a2adff"/><stop offset=".341" stop-color="#ffa3fb"/><stop offset=".415" stop-color="#ff66a7"/><stop offset=".541" stop-color="#ff315f"/><stop offset=".778" stop-color="#ff0623"/><stop offset="1.000" stop-color="#ff0008"/></linearGradient>
<linearGradient id="t85" gradientUnits="userSpaceOnUse" x1="1688" x2="2228" y1="0" y2="0"><stop offset=".000" stop-color="#00bdff"/><stop offset=".133" stop-color="#03b4ff"/><stop offset=".281" stop-color="#aca6ff"/><stop offset=".341" stop-color="#ff9dfc"/><stop offset=".415" stop-color="#ff62a9"/><stop offset=".541" stop-color="#ff2f60"/><stop offset=".778" stop-color="#ff0424"/><stop offset="1.000" stop-color="#ff0009"/></linearGradient>
<linearGradient id="t86" gradientUnits="userSpaceOnUse" x1="1688" x2="2228" y1="0" y2="0"><stop offset=".000" stop-color="#00b8ff"/><stop offset=".133" stop-color="#05afff"/><stop offset=".281" stop-color="#ada0ff"/><stop offset=".341" stop-color="#ff97fd"/><stop offset=".415" stop-color="#ff5eaa"/><stop offset=".541" stop-color="#ff2c61"/><stop offset=".778" stop-color="#ff0325"/><stop offset="1.000" stop-color="#ff000a"/></linearGradient>
<linearGradient id="t87" gradientUnits="userSpaceOnUse" x1="1688" x2="2228" y1="0" y2="0"><stop offset=".000" stop-color="#00b4ff"/><stop offset=".133" stop-color="#06a9ff"/><stop offset=".281" stop-color="#ad9aff"/><stop offset=".341" stop-color="#ff91fd"/><stop offset=".415" stop-color="#ff5aaa"/><stop offset=".541" stop-color="#ff2a62"/><stop offset=".778" stop-color="#ff0225"/><stop offset="1.000" stop-color="#ff000b"/></linearGradient>
<linearGradient id="t88" gradientUnits="userSpaceOnUse" x1="1688" x2="2228" y1="0" y2="0"><stop offset=".000" stop-color="#00afff"/><stop offset=".126" stop-color="#01a5ff"/><stop offset=".274" stop-color="#a496ff"/><stop offset=".341" stop-color="#ff8cfe"/><stop offset=".415" stop-color="#ff57ab"/><stop offset=".541" stop-color="#ff2863"/><stop offset=".778" stop-color="#ff0026"/><stop offset="1.000" stop-color="#ff000b"/></linearGradient>
<linearGradient id="t89" gradientUnits="userSpaceOnUse" x1="1688" x2="2228" y1="0" y2="0"><stop offset=".000" stop-color="#00abff"/><stop offset=".126" stop-color="#03a0ff"/><stop offset=".281" stop-color="#ae8fff"/><stop offset=".341" stop-color="#ff86fe"/><stop offset=".422" stop-color="#ff4fa6"/><stop offset=".556" stop-color="#ff225e"/><stop offset=".807" stop-color="#ff0022"/><stop offset="1.000" stop-color="#ff000c"/></linearGradient>
<linearGradient id="t90" gradientUnits="userSpaceOnUse" x1="1688" x2="2228" y1="0" y2="0"><stop offset=".000" stop-color="#00a7ff"/><stop offset=".126" stop-color="#059cff"/><stop offset=".281" stop-color="#ae8aff"/><stop offset=".341" stop-color="#ff81ff"/><stop offset=".422" stop-color="#ff4ca7"/><stop offset=".556" stop-color="#ff1f5f"/><stop offset=".800" stop-color="#ff0024"/><stop offset="1.000" stop-color="#ff000d"/></linearGradient>
<linearGradient id="t91" gradientUnits="userSpaceOnUse" x1="1688" x2="2228" y1="0" y2="0"><stop offset=".000" stop-color="#00a2ff"/><stop offset=".126" stop-color="#0797ff"/><stop offset=".281" stop-color="#ae84ff"/><stop offset=".341" stop-color="#ff7cff"/><stop offset=".422" stop-color="#ff48a8"/><stop offset=".556" stop-color="#ff1d60"/><stop offset=".793" stop-color="#ff0026"/><stop offset="1.000" stop-color="#ff000d"/></linearGradient>
<linearGradient id="t92" gradientUnits="userSpaceOnUse" x1="1688" x2="2228" y1="0" y2="0"><stop offset=".000" stop-color="#009eff"/><stop offset=".119" stop-color="#0293ff"/><stop offset=".274" stop-color="#a680ff"/><stop offset=".341" stop-color="#fe76ff"/><stop offset=".422" stop-color="#ff45a9"/><stop offset=".556" stop-color="#ff1b61"/><stop offset=".785" stop-color="#ff0028"/><stop offset="1.000" stop-color="#ff000e"/></linearGradient>
<linearGradient id="t93" gradientUnits="userSpaceOnUse" x1="1688" x2="2228" y1="0" y2="0"><stop offset=".000" stop-color="#009aff"/><stop offset=".119" stop-color="#048fff"/><stop offset=".274" stop-color="#a67bff"/><stop offset=".341" stop-color="#fe71ff"/><stop offset=".430" stop-color="#ff3ea5"/><stop offset=".570" stop-color="#ff165d"/><stop offset=".778" stop-color="#ff002a"/><stop offset="1.000" stop-color="#ff000f"/></linearGradient>
<linearGradient id="t94" gradientUnits="userSpaceOnUse" x1="1688" x2="2228" y1="0" y2="0"><stop offset=".000" stop-color="#0096ff"/><stop offset=".119" stop-color="#058aff"/><stop offset=".281" stop-color="#b075ff"/><stop offset=".341" stop-color="#fd6cff"/><stop offset=".430" stop-color="#ff3ba6"/><stop offset=".570" stop-color="#ff135e"/><stop offset=".770" stop-color="#ff002c"/><stop offset="1.000" stop-color="#ff000f"/></linearGradient>
<linearGradient id="t95" gradientUnits="userSpaceOnUse" x1="1688" x2="2228" y1="0" y2="0"><stop offset=".000" stop-color="#0092ff"/><stop offset=".119" stop-color="#0786ff"/><stop offset=".281" stop-color="#b070ff"/><stop offset=".341" stop-color="#fd67ff"/><stop offset=".430" stop-color="#ff37a7"/><stop offset=".570" stop-color="#ff115f"/><stop offset=".763" stop-color="#ff002f"/><stop offset="1.000" stop-color="#ff0010"/></linearGradient>
<linearGradient id="t96" gradientUnits="userSpaceOnUse" x1="1688" x2="2228" y1="0" y2="0"><stop offset=".000" stop-color="#008eff"/><stop offset=".111" stop-color="#0283ff"/><stop offset=".274" stop-color="#a76dff"/><stop offset=".348" stop-color="#ff5df7"/><stop offset=".437" stop-color="#ff32a2"/><stop offset=".585" stop-color="#ff0d5b"/><stop offset=".778" stop-color="#ff002d"/><stop offset="1.000" stop-color="#ff0011"/></linearGradient>
<linearGradient id="t97" gradientUnits="userSpaceOnUse" x1="1688" x2="2228" y1="0" y2="0"><stop offset=".000" stop-color="#008aff"/><stop offset=".111" stop-color="#047fff"/><stop offset=".274" stop-color="#a868ff"/><stop offset=".348" stop-color="#ff59f8"/><stop offset=".437" stop-color="#ff2ea3"/><stop offset=".585" stop-color="#ff0b5b"/><stop offset=".800" stop-color="#ff002a"/><stop offset="1.000" stop-color="#ff0011"/></linearGradient>
<linearGradient id="t98" gradientUnits="userSpaceOnUse" x1="1688" x2="2228" y1="0" y2="0"><stop offset=".000" stop-color="#0087ff"/><stop offset=".111" stop-color="#067bff"/><stop offset=".274" stop-color="#a864ff"/><stop offset=".348" stop-color="#ff54f9"/><stop offset=".437" stop-color="#ff2ba4"/><stop offset=".585" stop-color="#ff095c"/><stop offset=".867" stop-color="#ff0021"/><stop offset="1.000" stop-color="#ff0012"/></linearGradient>
<linearGradient id="t99" gradientUnits="userSpaceOnUse" x1="1688" x2="2228" y1="0" y2="0"><stop offset=".000" stop-color="#0083ff"/><stop offset=".111" stop-color="#0777ff"/><stop offset=".281" stop-color="#b15eff"/><stop offset=".348" stop-color="#ff50f9"/><stop offset=".437" stop-color="#ff28a5"/><stop offset=".585" stop-color="#ff075d"/><stop offset=".867" stop-color="#ff0022"/><stop offset="1.000" stop-color="#ff0013"/></linearGradient>
<linearGradient id="t100" gradientUnits="userSpaceOnUse" x1="1688" x2="2228" y1="0" y2="0"><stop offset=".000" stop-color="#007fff"/><stop offset=".104" stop-color="#0373ff"/><stop offset=".274" stop-color="#a95bff"/><stop offset=".348" stop-color="#ff4cfa"/><stop offset=".437" stop-color="#ff25a6"/><stop offset=".593" stop-color="#ff045c"/><stop offset=".881" stop-color="#ff0021"/><stop offset="1.000" stop-color="#ff0013"/></linearGradient>
<linearGradient id="t101" gradientUnits="userSpaceOnUse" x1="1688" x2="2228" y1="0" y2="0"><stop offset=".000" stop-color="#007cff"/><stop offset=".104" stop-color="#0570ff"/><stop offset=".274" stop-color="#a957ff"/><stop offset=".348" stop-color="#ff47fa"/><stop offset=".437" stop-color="#ff23a7"/><stop offset=".593" stop-color="#ff025d"/><stop offset=".881" stop-color="#ff0021"/><stop offset="1.000" stop-color="#ff0014"/></linearGradient>
<linearGradient id="t102" gradientUnits="userSpaceOnUse" x1="1688" x2="2228" y1="0" y2="0"><stop offset=".000" stop-color="#0078ff"/><stop offset=".104" stop-color="#066cff"/><stop offset=".274" stop-color="#aa52ff"/><stop offset=".348" stop-color="#ff43fa"/><stop offset=".437" stop-color="#ff20a7"/><stop offset=".593" stop-color="#ff005e"/><stop offset=".881" stop-color="#ff0022"/><stop offset="1.000" stop-color="#ff0015"/></linearGradient>
<linearGradient id="t103" gradientUnits="userSpaceOnUse" x1="1688" x2="2228" y1="0" y2="0"><stop offset=".000" stop-color="#0074ff"/><stop offset=".104" stop-color="#0868ff"/><stop offset=".281" stop-color="#b24dff"/><stop offset=".348" stop-color="#ff3ffb"/><stop offset=".437" stop-color="#ff1da8"/><stop offset=".593" stop-color="#ff005e"/><stop offset=".881" stop-color="#ff0023"/><stop offset="1.000" stop-color="#ff0015"/></linearGradient>
<linearGradient id="t104" gradientUnits="userSpaceOnUse" x1="1688" x2="2228" y1="0" y2="0"><stop offset=".000" stop-color="#0071ff"/><stop offset=".096" stop-color="#0365ff"/><stop offset=".274" stop-color="#aa4aff"/><stop offset=".348" stop-color="#ff3bfb"/><stop offset=".444" stop-color="#ff18a4"/><stop offset=".607" stop-color="#ff005b"/><stop offset=".911" stop-color="#ff0020"/><stop offset="1.000" stop-color="#ff0016"/></linearGradient>
<linearGradient id="t105" gradientUnits="userSpaceOnUse" x1="1688" x2="2228" y1="0" y2="0"><stop offset=".000" stop-color="#006eff"/><stop offset=".096" stop-color="#0562ff"/><stop offset=".274" stop-color="#ab46ff"/><stop offset=".348" stop-color="#ff37fc"/><stop offset=".444" stop-color="#ff15a5"/><stop offset=".607" stop-color="#ff005b"/><stop offset=".911" stop-color="#ff0020"/><stop offset="1.000" stop-color="#ff0017"/></linearGradient>
<linearGradient id="t106" gradientUnits="userSpaceOnUse" x1="1688" x2="2228" y1="0" y2="0"><stop offset=".000" stop-color="#006aff"/><stop offset=".096" stop-color="#075eff"/><stop offset=".274" stop-color="#ab42ff"/><stop offset=".348" stop-color="#ff33fc"/><stop offset=".444" stop-color="#ff13a6"/><stop offset=".593" stop-color="#ff0061"/><stop offset=".881" stop-color="#ff0025"/><stop offset="1.000" stop-color="#ff0017"/></linearGradient>
<linearGradient id="t107" gradientUnits="userSpaceOnUse" x1="1688" x2="2228" y1="0" y2="0"><stop offset=".000" stop-color="#0067ff"/><stop offset=".096" stop-color="#085bff"/><stop offset=".274" stop-color="#ab3eff"/><stop offset=".348" stop-color="#ff2ffd"/><stop offset=".444" stop-color="#ff10a7"/><stop offset=".593" stop-color="#ff0062"/><stop offset=".881" stop-color="#ff0026"/><stop offset="1.000" stop-color="#ff0018"/></linearGradient>
<linearGradient id="t108" gradientUnits="userSpaceOnUse" x1="1688" x2="2228" y1="0" y2="0"><stop offset=".000" stop-color="#0064ff"/><stop offset=".089" stop-color="#0458ff"/><stop offset=".274" stop-color="#ac3bff"/><stop offset=".348" stop-color="#ff2bfd"/><stop offset=".444" stop-color="#ff0da7"/><stop offset=".593" stop-color="#ff0063"/><stop offset=".881" stop-color="#ff0026"/><stop offset="1.000" stop-color="#ff0018"/></linearGradient>
<linearGradient id="t109" gradientUnits="userSpaceOnUse" x1="1688" x2="2228" y1="0" y2="0"><stop offset=".000" stop-color="#0060ff"/><stop offset=".089" stop-color="#0555ff"/><stop offset=".274" stop-color="#ac37ff"/><stop offset=".348" stop-color="#ff27fe"/><stop offset=".444" stop-color="#ff0ba8"/><stop offset=".607" stop-color="#ff005f"/><stop offset=".911" stop-color="#ff0023"/><stop offset="1.000" stop-color="#ff0019"/></linearGradient>
<linearGradient id="t110" gradientUnits="userSpaceOnUse" x1="1688" x2="2228" y1="0" y2="0"><stop offset=".000" stop-color="#005dff"/><stop offset=".089" stop-color="#0752ff"/><stop offset=".274" stop-color="#ac33ff"/><stop offset=".348" stop-color="#ff24fe"/><stop offset=".444" stop-color="#ff08a9"/><stop offset=".607" stop-color="#ff0060"/><stop offset=".911" stop-color="#ff0024"/><stop offset="1.000" stop-color="#ff001a"/></linearGradient>
<linearGradient id="t111" gradientUnits="userSpaceOnUse" x1="1688" x2="2228" y1="0" y2="0"><stop offset=".000" stop-color="#005aff"/><stop offset=".089" stop-color="#084eff"/><stop offset=".274" stop-color="#ad30ff"/><stop offset=".348" stop-color="#ff20fe"/><stop offset=".444" stop-color="#ff06aa"/><stop offset=".607" stop-color="#ff0060"/><stop offset=".911" stop-color="#ff0024"/><stop offset="1.000" stop-color="#ff001a"/></linearGradient>
<linearGradient id="t112" gradientUnits="userSpaceOnUse" x1="1688" x2="2228" y1="0" y2="0"><stop offset=".000" stop-color="#0057ff"/><stop offset=".081" stop-color="#044cff"/><stop offset=".274" stop-color="#ad2cff"/><stop offset=".348" stop-color="#ff1cff"/><stop offset=".444" stop-color="#ff03aa"/><stop offset=".607" stop-color="#ff0061"/><stop offset=".911" stop-color="#ff0025"/><stop offset="1.000" stop-color="#ff001b"/></linearGradient>
<linearGradient id="t113" gradientUnits="userSpaceOnUse" x1="1688" x2="2228" y1="0" y2="0"><stop offset=".000" stop-color="#0054ff"/><stop offset=".081" stop-color="#0649ff"/><stop offset=".274" stop-color="#ad29ff"/><stop offset=".348" stop-color="#ff19ff"/><stop offset=".452" stop-color="#ff00a7"/><stop offset=".622" stop-color="#ff005e"/><stop offset=".941" stop-color="#ff0022"/><stop offset="1.000" stop-color="#ff001c"/></linearGradient>
<linearGradient id="t114" gradientUnits="userSpaceOnUse" x1="1688" x2="2228" y1="0" y2="0"><stop offset=".000" stop-color="#0051ff"/><stop offset=".081" stop-color="#0746ff"/><stop offset=".274" stop-color="#ae25ff"/><stop offset=".348" stop-color="#fe15ff"/><stop offset=".452" stop-color="#ff00a7"/><stop offset=".622" stop-color="#ff005e"/><stop offset=".948" stop-color="#ff0022"/><stop offset="1.000" stop-color="#ff001c"/></linearGradient>
<linearGradient id="t115" gradientUnits="userSpaceOnUse" x1="1688" x2="2228" y1="0" y2="0"><stop offset=".000" stop-color="#004eff"/><stop offset=".074" stop-color="#0344ff"/><stop offset=".267" stop-color="#a723ff"/><stop offset=".356" stop-color="#ff10f8"/><stop offset=".459" stop-color="#ff00a4"/><stop offset=".637" stop-color="#ff005b"/><stop offset=".978" stop-color="#ff001f"/><stop offset="1.000" stop-color="#ff001d"/></linearGradient>
<linearGradient id="t116" gradientUnits="userSpaceOnUse" x1="1688" x2="2228" y1="0" y2="0"><stop offset=".000" stop-color="#004bff"/><stop offset=".074" stop-color="#0541ff"/><stop offset=".274" stop-color="#ae1eff"/><stop offset=".356" stop-color="#ff0cf8"/><stop offset=".459" stop-color="#ff00a4"/><stop offset=".637" stop-color="#ff005c"/><stop offset=".978" stop-color="#ff0020"/><stop offset="1.000" stop-color="#ff001d"/></linearGradient>
<linearGradient id="t117" gradientUnits="userSpaceOnUse" x1="1688" x2="2228" y1="0" y2="0"><stop offset=".000" stop-color="#0048ff"/><stop offset=".074" stop-color="#063eff"/><stop offset=".274" stop-color="#af1bff"/><stop offset=".356" stop-color="#ff09f9"/><stop offset=".459" stop-color="#ff00a5"/><stop offset=".637" stop-color="#ff005c"/><stop offset=".978" stop-color="#ff0020"/><stop offset="1.000" stop-color="#ff001e"/></linearGradient>
<linearGradient id="t118" gradientUnits="userSpaceOnUse" x1="1688" x2="2228" y1="0" y2="0"><stop offset=".000" stop-color="#0045ff"/><stop offset=".074" stop-color="#073bff"/><stop offset=".274" stop-color="#af18ff"/><stop offset=".356" stop-color="#ff06f9"/><stop offset=".459" stop-color="#ff00a6"/><stop offset=".637" stop-color="#ff005d"/><stop offset=".978" stop-color="#ff0021"/><stop offset="1.000" stop-color="#ff001f"/></linearGradient>
<linearGradient id="t119" gradientUnits="userSpaceOnUse" x1="1688" x2="2228" y1="0" y2="0"><stop offset=".000" stop-color="#0042ff"/><stop offset=".067" stop-color="#0439ff"/><stop offset=".267" stop-color="#a816ff"/><stop offset=".356" stop-color="#ff03f9"/><stop offset=".467" stop-color="#ff00a2"/><stop offset=".652" stop-color="#ff005a"/><stop offset="1.000" stop-color="#ff001f"/></linearGradient>
<linearGradient id="t120" gradientUnits="userSpaceOnUse" x1="1688" x2="2228" y1="0" y2="0"><stop offset=".000" stop-color="#003fff"/><stop offset=".067" stop-color="#0536ff"/><stop offset=".274" stop-color="#af12ff"/><stop offset=".356" stop-color="#ff00fa"/><stop offset=".467" stop-color="#ff00a3"/><stop offset=".652" stop-color="#ff005b"/><stop offset="1.000" stop-color="#ff0020"/></linearGradient>
<linearGradient id="t121" gradientUnits="userSpaceOnUse" x1="1688" x2="2228" y1="0" y2="0"><stop offset=".000" stop-color="#003dff"/><stop offset=".067" stop-color="#0633ff"/><stop offset=".274" stop-color="#b00fff"/><stop offset=".356" stop-color="#ff00fa"/><stop offset=".467" stop-color="#ff00a4"/><stop offset=".652" stop-color="#ff005b"/><stop offset="1.000" stop-color="#ff0020"/></linearGradient>
<linearGradient id="t122" gradientUnits="userSpaceOnUse" x1="1688" x2="2228" y1="0" y2="0"><stop offset=".000" stop-color="#003aff"/><stop offset=".067" stop-color="#0830ff"/><stop offset=".274" stop-color="#b00cff"/><stop offset=".356" stop-color="#ff00fb"/><stop offset=".467" stop-color="#ff00a4"/><stop offset=".652" stop-color="#ff005c"/><stop offset="1.000" stop-color="#ff0021"/></linearGradient>
<linearGradient id="t123" gradientUnits="userSpaceOnUse" x1="1688" x2="2228" y1="0" y2="0"><stop offset=".000" stop-color="#0037ff"/><stop offset=".059" stop-color="#042fff"/><stop offset=".267" stop-color="#a90aff"/><stop offset=".356" stop-color="#ff00fb"/><stop offset=".467" stop-color="#ff00a5"/><stop offset=".652" stop-color="#ff005d"/><stop offset="1.000" stop-color="#ff0022"/></linearGradient>
<linearGradient id="t124" gradientUnits="userSpaceOnUse" x1="1688" x2="2228" y1="0" y2="0"><stop offset=".000" stop-color="#0035ff"/><stop offset=".059" stop-color="#052cff"/><stop offset=".267" stop-color="#aa07ff"/><stop offset=".356" stop-color="#ff00fb"/><stop offset=".467" stop-color="#ff00a6"/><stop offset=".652" stop-color="#ff005e"/><stop offset="1.000" stop-color="#ff0022"/></linearGradient>
<linearGradient id="t125" gradientUnits="userSpaceOnUse" x1="1688" x2="2228" y1="0" y2="0"><stop offset=".000" stop-color="#0032ff"/><stop offset=".059" stop-color="#0729ff"/><stop offset=".274" stop-color="#b103ff"/><stop offset=".356" stop-color="#ff00fc"/><stop offset=".467" stop-color="#ff00a7"/><stop offset=".652" stop-color="#ff005e"/><stop offset="1.000" stop-color="#ff0023"/></linearGradient>
<linearGradient id="t126" gradientUnits="userSpaceOnUse" x1="1688" x2="2228" y1="0" y2="0"><stop offset=".000" stop-color="#002fff"/><stop offset=".059" stop-color="#0827ff"/><stop offset=".274" stop-color="#b100ff"/><stop offset=".356" stop-color="#ff00fc"/><stop offset=".467" stop-color="#ff00a7"/><stop offset=".659" stop-color="#ff005d"/><stop offset="1.000" stop-color="#ff0023"/></linearGradient>
<linearGradient id="t127" gradientUnits="userSpaceOnUse" x1="1688" x2="2228" y1="0" y2="0"><stop offset=".000" stop-color="#002dff"/><stop offset=".059" stop-color="#0924ff"/><stop offset=".274" stop-color="#b100ff"/><stop offset=".356" stop-color="#ff00fd"/><stop offset=".467" stop-color="#ff00a8"/><stop offset=".659" stop-color="#ff005e"/><stop offset="1.000" stop-color="#ff0024"/></linearGradient>
<linearGradient id="t128" gradientUnits="userSpaceOnUse" x1="1688" x2="2228" y1="0" y2="0"><stop offset=".000" stop-color="#002aff"/><stop offset=".052" stop-color="#0623ff"/><stop offset=".267" stop-color="#ab00ff"/><stop offset=".356" stop-color="#ff00fd"/><stop offset=".467" stop-color="#ff00a9"/><stop offset=".659" stop-color="#ff005f"/><stop offset="1.000" stop-color="#ff0025"/></linearGradient>
<linearGradient id="t129" gradientUnits="userSpaceOnUse" x1="1688" x2="2228" y1="0" y2="0"><stop offset=".000" stop-color="#0028ff"/><stop offset=".052" stop-color="#0720ff"/><stop offset=".274" stop-color="#b200ff"/><stop offset=".356" stop-color="#ff00fd"/><stop offset=".467" stop-color="#ff00a9"/><stop offset=".659" stop-color="#ff005f"/><stop offset="1.000" stop-color="#ff0025"/></linearGradient>
<linearGradient id="t130" gradientUnits="userSpaceOnUse" x1="1688" x2="2228" y1="0" y2="0"><stop offset=".000" stop-color="#0025ff"/><stop offset=".052" stop-color="#081eff"/><stop offset=".274" stop-color="#b200ff"/><stop offset=".356" stop-color="#ff00fe"/><stop offset=".474" stop-color="#ff00a6"/><stop offset=".674" stop-color="#ff005c"/><stop offset="1.000" stop-color="#ff0026"/></linearGradient>
<linearGradient id="t131" gradientUnits="userSpaceOnUse" x1="1688" x2="2228" y1="0" y2="0"><stop offset=".000" stop-color="#0023ff"/><stop offset=".052" stop-color="#091bff"/><stop offset=".259" stop-color="#a500ff"/><stop offset=".356" stop-color="#ff00fe"/><stop offset=".474" stop-color="#ff00a7"/><stop offset=".674" stop-color="#ff005d"/><stop offset="1.000" stop-color="#ff0026"/></linearGradient>
<linearGradient id="t132" gradientUnits="userSpaceOnUse" x1="1688" x2="2228" y1="0" y2="0"><stop offset=".000" stop-color="#0020ff"/><stop offset=".052" stop-color="#0b19ff"/><stop offset=".252" stop-color="#9f00ff"/><stop offset=".363" stop-color="#ff00f7"/><stop offset=".481" stop-color="#ff00a3"/><stop offset=".689" stop-color="#ff005a"/><stop offset="1.000" stop-color="#ff0027"/></linearGradient>
<linearGradient id="t133" gradientUnits="userSpaceOnUse" x1="1688" x2="2228" y1="0" y2="0"><stop offset=".000" stop-color="#001eff"/><stop offset=".052" stop-color="#0c16ff"/><stop offset=".244" stop-color="#9900ff"/><stop offset=".363" stop-color="#ff00f7"/><stop offset=".481" stop-color="#ff00a4"/><stop offset=".689" stop-color="#ff005b"/><stop offset="1.000" stop-color="#ff0027"/></linearGradient>
<linearGradient id="t134" gradientUnits="userSpaceOnUse" x1="1688" x2="2228" y1="0" y2="0"><stop offset=".000" stop-color="#001cff"/><stop offset=".044" stop-color="#0815ff"/><stop offset=".230" stop-color="#8d00ff"/><stop offset=".363" stop-color="#ff00f8"/><stop offset=".489" stop-color="#ff00a1"/><stop offset=".696" stop-color="#ff0059"/><stop offset="1.000" stop-color="#ff0028"/></linearGradient>
<linearGradient id="t135" gradientUnits="userSpaceOnUse" x1="1688" x2="2228" y1="0" y2="0"><stop offset=".000" stop-color="#0019ff"/><stop offset=".044" stop-color="#0a13ff"/><stop offset=".222" stop-color="#8800ff"/><stop offset=".363" stop-color="#ff00f8"/><stop offset=".489" stop-color="#ff00a2"/><stop offset=".704" stop-color="#ff0058"/><stop offset="1.000" stop-color="#ff0029"/></linearGradient>
<linearGradient id="t136" gradientUnits="userSpaceOnUse" x1="1688" x2="2228" y1="0" y2="0"><stop offset=".000" stop-color="#0017ff"/><stop offset=".044" stop-color="#0b10ff"/><stop offset=".215" stop-color="#8200ff"/><stop offset=".363" stop-color="#ff00f9"/><stop offset=".489" stop-color="#ff00a2"/><stop offset=".704" stop-color="#ff0059"/><stop offset="1.000" stop-color="#ff0029"/></linearGradient>
<linearGradient id="t137" gradientUnits="userSpaceOnUse" x1="1688" x2="2228" y1="0" y2="0"><stop offset=".000" stop-color="#0015ff"/><stop offset=".044" stop-color="#0c0eff"/><stop offset=".215" stop-color="#8300ff"/><stop offset=".363" stop-color="#ff00f9"/><stop offset=".489" stop-color="#ff00a3"/><stop offset=".704" stop-color="#ff005a"/><stop offset="1.000" stop-color="#ff002a"/></linearGradient>
<linearGradient id="t138" gradientUnits="userSpaceOnUse" x1="1688" x2="2228" y1="0" y2="0"><stop offset=".000" stop-color="#0013ff"/><stop offset=".044" stop-color="#0d0cff"/><stop offset=".222" stop-color="#8900ff"/><stop offset=".363" stop-color="#ff00f9"/><stop offset=".489" stop-color="#ff00a3"/><stop offset=".704" stop-color="#ff005a"/><stop offset="1.000" stop-color="#ff002a"/></linearGradient>
<linearGradient id="t139" gradientUnits="userSpaceOnUse" x1="1688" x2="2228" y1="0" y2="0"><stop offset=".000" stop-color="#0010ff"/><stop offset=".044" stop-color="#0e09ff"/><stop offset=".267" stop-color="#ae00ff"/><stop offset=".363" stop-color="#ff00fa"/><stop offset=".489" stop-color="#ff00a4"/><stop offset=".704" stop-color="#ff005b"/><stop offset="1.000" stop-color="#ff002b"/></linearGradient>
<linearGradient id="t140" gradientUnits="userSpaceOnUse" x1="1688" x2="2228" y1="0" y2="0"><stop offset=".000" stop-color="#000eff"/><stop offset=".052" stop-color="#1406ff"/><stop offset=".281" stop-color="#ba00ff"/><stop offset=".363" stop-color="#ff00fa"/><stop offset=".489" stop-color="#ff00a5"/><stop offset=".704" stop-color="#ff005c"/><stop offset="1.000" stop-color="#ff002b"/></linearGradient>
<linearGradient id="t141" gradientUnits="userSpaceOnUse" x1="1688" x2="2228" y1="0" y2="0"><stop offset=".000" stop-color="#000cff"/><stop offset=".067" stop-color="#1e01ff"/><stop offset=".296" stop-color="#c700ff"/><stop offset=".363" stop-color="#ff00fa"/><stop offset=".489" stop-color="#ff00a5"/><stop offset=".704" stop-color="#ff005c"/><stop offset="1.000" stop-color="#ff002c"/></linearGradient>
<linearGradient id="t142" gradientUnits="userSpaceOnUse" x1="1688" x2="2228" y1="0" y2="0"><stop offset=".000" stop-color="#000aff"/><stop offset=".067" stop-color="#1f00ff"/><stop offset=".296" stop-color="#c700ff"/><stop offset=".363" stop-color="#ff00fb"/><stop offset=".489" stop-color="#ff00a6"/><stop offset=".704" stop-color="#ff005d"/><stop offset="1.000" stop-color="#ff002c"/></linearGradient>
<linearGradient id="t143" gradientUnits="userSpaceOnUse" x1="1688" x2="2228" y1="0" y2="0"><stop offset=".000" stop-color="#0008ff"/><stop offset=".111" stop-color="#3d00ff"/><stop offset=".333" stop-color="#e800ff"/><stop offset=".370" stop-color="#ff00f4"/><stop offset=".504" stop-color="#ff00a0"/><stop offset=".733" stop-color="#ff0057"/><stop offset="1.000" stop-color="#ff002d"/></linearGradient>
<linearGradient id="t144" gradientUnits="userSpaceOnUse" x1="1688" x2="2228" y1="0" y2="0"><stop offset=".000" stop-color="#0006ff"/><stop offset=".178" stop-color="#6b00ff"/><stop offset=".363" stop-color="#ff00fb"/><stop offset=".489" stop-color="#ff00a7"/><stop offset=".704" stop-color="#ff005e"/><stop offset="1.000" stop-color="#ff002e"/></linearGradient>
<linearGradient id="t145" gradientUnits="userSpaceOnUse" x1="1688" x2="2228" y1="0" y2="0"><stop offset=".000" stop-color="#0003ff"/><stop offset=".200" stop-color="#7c00ff"/><stop offset=".363" stop-color="#ff00fc"/><stop offset=".496" stop-color="#ff00a4"/><stop offset=".719" stop-color="#ff005b"/><stop offset="1.000" stop-color="#ff002e"/></linearGradient>
<linearGradient id="t146" gradientUnits="userSpaceOnUse" x1="1688" x2="2228" y1="0" y2="0"><stop offset=".000" stop-color="#0001ff"/><stop offset=".215" stop-color="#8700ff"/><stop offset=".363" stop-color="#ff00fc"/><stop offset=".496" stop-color="#ff00a5"/><stop offset=".719" stop-color="#ff005c"/><stop offset="1.000" stop-color="#ff002f"/></linearGradient>
<linearGradient id="t147" gradientUnits="userSpaceOnUse" x1="1688" x2="2228" y1="0" y2="0"><stop offset=".000" stop-color="#0000ff"/><stop offset=".230" stop-color="#9300ff"/><stop offset=".363" stop-color="#ff00fc"/><stop offset=".496" stop-color="#ff00a5"/><stop offset=".719" stop-color="#ff005d"/><stop offset="1.000" stop-color="#ff002f"/></linearGradient>
<clipPath id="inset"><rect x="2125.0" y="203.7" width="310.3" height="262.0"/></clipPath>
<clipPath id="insetin"><path d="M2125.0 232.3 L2435.3 437.4 L2435.3 465.7 L2125.0 465.7 Z"/></clipPath>
<linearGradient id="ia0" gradientUnits="userSpaceOnUse" x1="2125" x2="2436" y1="0" y2="0"><stop offset=".000" stop-color="#699900"/><stop offset=".887" stop-color="#999300"/><stop offset="1.003" stop-color="#998c00"/></linearGradient>
<linearGradient id="ia1" gradientUnits="userSpaceOnUse" x1="2125" x2="2436" y1="0" y2="0"><stop offset=".000" stop-color="#699900"/><stop offset=".887" stop-color="#999200"/><stop offset="1.003" stop-color="#998b00"/></linearGradient>
<linearGradient id="ia2" gradientUnits="userSpaceOnUse" x1="2125" x2="2436" y1="0" y2="0"><stop offset=".000" stop-color="#6a9900"/><stop offset=".868" stop-color="#999300"/><stop offset="1.003" stop-color="#998b00"/></linearGradient>
<linearGradient id="ia3" gradientUnits="userSpaceOnUse" x1="2125" x2="2436" y1="0" y2="0"><stop offset=".000" stop-color="#6a9900"/><stop offset=".849" stop-color="#999300"/><stop offset="1.003" stop-color="#998a00"/></linearGradient>
<linearGradient id="ia4" gradientUnits="userSpaceOnUse" x1="2125" x2="2436" y1="0" y2="0"><stop offset=".000" stop-color="#6b9900"/><stop offset=".849" stop-color="#999200"/><stop offset="1.003" stop-color="#998900"/></linearGradient>
<linearGradient id="ia5" gradientUnits="userSpaceOnUse" x1="2125" x2="2436" y1="0" y2="0"><stop offset=".000" stop-color="#6c9900"/><stop offset=".830" stop-color="#999300"/><stop offset="1.003" stop-color="#998900"/></linearGradient>
<linearGradient id="ia6" gradientUnits="userSpaceOnUse" x1="2125" x2="2436" y1="0" y2="0"><stop offset=".000" stop-color="#6c9900"/><stop offset=".830" stop-color="#999200"/><stop offset="1.003" stop-color="#998800"/></linearGradient>
<linearGradient id="ia7" gradientUnits="userSpaceOnUse" x1="2125" x2="2436" y1="0" y2="0"><stop offset=".000" stop-color="#6d9901"/><stop offset=".810" stop-color="#999300"/><stop offset="1.003" stop-color="#998700"/></linearGradient>
<linearGradient id="ia8" gradientUnits="userSpaceOnUse" x1="2125" x2="2436" y1="0" y2="0"><stop offset=".000" stop-color="#6d9901"/><stop offset=".791" stop-color="#999300"/><stop offset="1.003" stop-color="#998700"/></linearGradient>
<linearGradient id="ia9" gradientUnits="userSpaceOnUse" x1="2125" x2="2436" y1="0" y2="0"><stop offset=".000" stop-color="#6e9901"/><stop offset=".791" stop-color="#999200"/><stop offset="1.003" stop-color="#998600"/></linearGradient>
<linearGradient id="ia10" gradientUnits="userSpaceOnUse" x1="2125" x2="2436" y1="0" y2="0"><stop offset=".000" stop-color="#6f9901"/><stop offset=".772" stop-color="#999300"/><stop offset="1.003" stop-color="#998500"/></linearGradient>
<linearGradient id="ia11" gradientUnits="userSpaceOnUse" x1="2125" x2="2436" y1="0" y2="0"><stop offset=".000" stop-color="#6f9902"/><stop offset=".772" stop-color="#999200"/><stop offset="1.003" stop-color="#998500"/></linearGradient>
<linearGradient id="ia12" gradientUnits="userSpaceOnUse" x1="2125" x2="2436" y1="0" y2="0"><stop offset=".000" stop-color="#709902"/><stop offset=".752" stop-color="#999200"/><stop offset="1.003" stop-color="#998400"/></linearGradient>
<linearGradient id="ia13" gradientUnits="userSpaceOnUse" x1="2125" x2="2436" y1="0" y2="0"><stop offset=".000" stop-color="#709902"/><stop offset=".733" stop-color="#999300"/><stop offset="1.003" stop-color="#998300"/></linearGradient>
<linearGradient id="ia14" gradientUnits="userSpaceOnUse" x1="2125" x2="2436" y1="0" y2="0"><stop offset=".000" stop-color="#719903"/><stop offset=".733" stop-color="#999200"/><stop offset="1.003" stop-color="#998300"/></linearGradient>
<linearGradient id="ia15" gradientUnits="userSpaceOnUse" x1="2125" x2="2436" y1="0" y2="0"><stop offset=".000" stop-color="#729903"/><stop offset=".714" stop-color="#999300"/><stop offset="1.003" stop-color="#998200"/></linearGradient>
<linearGradient id="ia16" gradientUnits="userSpaceOnUse" x1="2125" x2="2436" y1="0" y2="0"><stop offset=".000" stop-color="#729903"/><stop offset=".714" stop-color="#999200"/><stop offset="1.003" stop-color="#998100"/></linearGradient>
<linearGradient id="ia17" gradientUnits="userSpaceOnUse" x1="2125" x2="2436" y1="0" y2="0"><stop offset=".000" stop-color="#739904"/><stop offset=".695" stop-color="#999200"/><stop offset="1.003" stop-color="#998100"/></linearGradient>
<linearGradient id="ia18" gradientUnits="userSpaceOnUse" x1="2125" x2="2436" y1="0" y2="0"><stop offset=".000" stop-color="#739904"/><stop offset=".675" stop-color="#999300"/><stop offset="1.003" stop-color="#998000"/></linearGradient>
<linearGradient id="ia19" gradientUnits="userSpaceOnUse" x1="2125" x2="2436" y1="0" y2="0"><stop offset=".000" stop-color="#749905"/><stop offset=".675" stop-color="#999200"/><stop offset="1.003" stop-color="#997f00"/></linearGradient>
<linearGradient id="ia20" gradientUnits="userSpaceOnUse" x1="2125" x2="2436" y1="0" y2="0"><stop offset=".000" stop-color="#759905"/><stop offset=".656" stop-color="#999300"/><stop offset="1.003" stop-color="#997f00"/></linearGradient>
<linearGradient id="ia21" gradientUnits="userSpaceOnUse" x1="2125" x2="2436" y1="0" y2="0"><stop offset=".000" stop-color="#759905"/><stop offset=".656" stop-color="#999200"/><stop offset="1.003" stop-color="#997e00"/></linearGradient>
<linearGradient id="ia22" gradientUnits="userSpaceOnUse" x1="2125" x2="2436" y1="0" y2="0"><stop offset=".000" stop-color="#769906"/><stop offset=".637" stop-color="#999200"/><stop offset="1.003" stop-color="#997d00"/></linearGradient>
<linearGradient id="ia23" gradientUnits="userSpaceOnUse" x1="2125" x2="2436" y1="0" y2="0"><stop offset=".000" stop-color="#779906"/><stop offset=".617" stop-color="#999300"/><stop offset="1.003" stop-color="#997d00"/></linearGradient>
<linearGradient id="ia24" gradientUnits="userSpaceOnUse" x1="2125" x2="2436" y1="0" y2="0"><stop offset=".000" stop-color="#779906"/><stop offset=".617" stop-color="#999200"/><stop offset="1.003" stop-color="#997c00"/></linearGradient>
<linearGradient id="ia25" gradientUnits="userSpaceOnUse" x1="2125" x2="2436" y1="0" y2="0"><stop offset=".000" stop-color="#789907"/><stop offset=".598" stop-color="#999200"/><stop offset="1.003" stop-color="#997c00"/></linearGradient>
<linearGradient id="ia26" gradientUnits="userSpaceOnUse" x1="2125" x2="2436" y1="0" y2="0"><stop offset=".000" stop-color="#799907"/><stop offset=".598" stop-color="#999200"/><stop offset="1.003" stop-color="#997b00"/></linearGradient>
<linearGradient id="ia27" gradientUnits="userSpaceOnUse" x1="2125" x2="2436" y1="0" y2="0"><stop offset=".000" stop-color="#799907"/><stop offset=".579" stop-color="#999200"/><stop offset="1.003" stop-color="#997a00"/></linearGradient>
<linearGradient id="ia28" gradientUnits="userSpaceOnUse" x1="2125" x2="2436" y1="0" y2="0"><stop offset=".000" stop-color="#7a9908"/><stop offset=".559" stop-color="#999300"/><stop offset="1.003" stop-color="#997a00"/></linearGradient>
<linearGradient id="ia29" gradientUnits="userSpaceOnUse" x1="2125" x2="2436" y1="0" y2="0"><stop offset=".000" stop-color="#7b9908"/><stop offset=".559" stop-color="#999200"/><stop offset="1.003" stop-color="#997900"/></linearGradient>
<linearGradient id="ia30" gradientUnits="userSpaceOnUse" x1="2125" x2="2436" y1="0" y2="0"><stop offset=".000" stop-color="#7b9908"/><stop offset=".540" stop-color="#999201"/><stop offset="1.003" stop-color="#997800"/></linearGradient>
<linearGradient id="ia31" gradientUnits="userSpaceOnUse" x1="2125" x2="2436" y1="0" y2="0"><stop offset=".000" stop-color="#7c9909"/><stop offset=".540" stop-color="#999201"/><stop offset="1.003" stop-color="#997800"/></linearGradient>
<linearGradient id="ia32" gradientUnits="userSpaceOnUse" x1="2125" x2="2436" y1="0" y2="0"><stop offset=".000" stop-color="#7d9909"/><stop offset=".521" stop-color="#999202"/><stop offset="1.003" stop-color="#997700"/></linearGradient>
<linearGradient id="ia33" gradientUnits="userSpaceOnUse" x1="2125" x2="2436" y1="0" y2="0"><stop offset=".000" stop-color="#7d990a"/><stop offset=".521" stop-color="#999102"/><stop offset="1.003" stop-color="#997700"/></linearGradient>
<linearGradient id="ia34" gradientUnits="userSpaceOnUse" x1="2125" x2="2436" y1="0" y2="0"><stop offset=".000" stop-color="#7e990a"/><stop offset=".502" stop-color="#999203"/><stop offset="1.003" stop-color="#997600"/></linearGradient>
<linearGradient id="ia35" gradientUnits="userSpaceOnUse" x1="2125" x2="2436" y1="0" y2="0"><stop offset=".000" stop-color="#7f990a"/><stop offset=".482" stop-color="#999203"/><stop offset="1.003" stop-color="#997500"/></linearGradient>
<linearGradient id="ia36" gradientUnits="userSpaceOnUse" x1="2125" x2="2436" y1="0" y2="0"><stop offset=".000" stop-color="#80990b"/><stop offset=".482" stop-color="#999104"/><stop offset="1.003" stop-color="#997500"/></linearGradient>
<linearGradient id="ia37" gradientUnits="userSpaceOnUse" x1="2125" x2="2436" y1="0" y2="0"><stop offset=".000" stop-color="#80990b"/><stop offset=".482" stop-color="#999104"/><stop offset="1.003" stop-color="#997400"/></linearGradient>
<linearGradient id="ia38" gradientUnits="userSpaceOnUse" x1="2125" x2="2436" y1="0" y2="0"><stop offset=".000" stop-color="#81990b"/><stop offset=".463" stop-color="#999105"/><stop offset="1.003" stop-color="#997300"/></linearGradient>
<linearGradient id="ia39" gradientUnits="userSpaceOnUse" x1="2125" x2="2436" y1="0" y2="0"><stop offset=".000" stop-color="#82990c"/><stop offset=".444" stop-color="#999205"/><stop offset="1.003" stop-color="#997300"/></linearGradient>
<linearGradient id="ia40" gradientUnits="userSpaceOnUse" x1="2125" x2="2436" y1="0" y2="0"><stop offset=".000" stop-color="#82990c"/><stop offset=".444" stop-color="#999106"/><stop offset="1.003" stop-color="#997200"/></linearGradient>
<linearGradient id="ia41" gradientUnits="userSpaceOnUse" x1="2125" x2="2436" y1="0" y2="0"><stop offset=".000" stop-color="#83990d"/><stop offset=".424" stop-color="#999106"/><stop offset="1.003" stop-color="#997200"/></linearGradient>
<linearGradient id="ia42" gradientUnits="userSpaceOnUse" x1="2125" x2="2436" y1="0" y2="0"><stop offset=".000" stop-color="#84990d"/><stop offset=".424" stop-color="#999107"/><stop offset="1.003" stop-color="#997100"/></linearGradient>
<linearGradient id="ia43" gradientUnits="userSpaceOnUse" x1="2125" x2="2436" y1="0" y2="0"><stop offset=".000" stop-color="#85990d"/><stop offset=".405" stop-color="#999107"/><stop offset="1.003" stop-color="#997000"/></linearGradient>
<linearGradient id="ia44" gradientUnits="userSpaceOnUse" x1="2125" x2="2436" y1="0" y2="0"><stop offset=".000" stop-color="#85990e"/><stop offset=".405" stop-color="#999008"/><stop offset="1.003" stop-color="#997000"/></linearGradient>
<linearGradient id="ia45" gradientUnits="userSpaceOnUse" x1="2125" x2="2436" y1="0" y2="0"><stop offset=".000" stop-color="#86990e"/><stop offset=".386" stop-color="#999108"/><stop offset="1.003" stop-color="#996f00"/></linearGradient>
<linearGradient id="ia46" gradientUnits="userSpaceOnUse" x1="2125" x2="2436" y1="0" y2="0"><stop offset=".000" stop-color="#87990f"/><stop offset=".386" stop-color="#999009"/><stop offset="1.003" stop-color="#996f00"/></linearGradient>
<linearGradient id="ia47" gradientUnits="userSpaceOnUse" x1="2125" x2="2436" y1="0" y2="0"><stop offset=".000" stop-color="#88990f"/><stop offset=".367" stop-color="#999009"/><stop offset="1.003" stop-color="#996e00"/></linearGradient>
<linearGradient id="ia48" gradientUnits="userSpaceOnUse" x1="2125" x2="2436" y1="0" y2="0"><stop offset=".000" stop-color="#899910"/><stop offset=".347" stop-color="#99910a"/><stop offset="1.003" stop-color="#996d00"/></linearGradient>
<linearGradient id="ia49" gradientUnits="userSpaceOnUse" x1="2125" x2="2436" y1="0" y2="0"><stop offset=".000" stop-color="#899910"/><stop offset=".347" stop-color="#99900a"/><stop offset="1.003" stop-color="#996d01"/></linearGradient>
<linearGradient id="ia50" gradientUnits="userSpaceOnUse" x1="2125" x2="2436" y1="0" y2="0"><stop offset=".000" stop-color="#8a9910"/><stop offset=".347" stop-color="#998f0b"/><stop offset="1.003" stop-color="#996c01"/></linearGradient>
<linearGradient id="ia51" gradientUnits="userSpaceOnUse" x1="2125" x2="2436" y1="0" y2="0"><stop offset=".000" stop-color="#8b9911"/><stop offset=".328" stop-color="#99900c"/><stop offset="1.003" stop-color="#996c01"/></linearGradient>
<linearGradient id="ia52" gradientUnits="userSpaceOnUse" x1="2125" x2="2436" y1="0" y2="0"><stop offset=".000" stop-color="#8c9911"/><stop offset=".347" stop-color="#998e0b"/><stop offset="1.003" stop-color="#996b02"/></linearGradient>
<linearGradient id="ib0" gradientUnits="userSpaceOnUse" x1="2125" x2="2436" y1="0" y2="0"><stop offset=".000" stop-color="#b3ff00"/><stop offset=".791" stop-color="#fffa00"/><stop offset="1.003" stop-color="#ffe400"/></linearGradient>
<linearGradient id="ib1" gradientUnits="userSpaceOnUse" x1="2125" x2="2436" y1="0" y2="0"><stop offset=".000" stop-color="#b4ff00"/><stop offset=".772" stop-color="#fffa00"/><stop offset="1.003" stop-color="#ffe300"/></linearGradient>
<linearGradient id="ib2" gradientUnits="userSpaceOnUse" x1="2125" x2="2436" y1="0" y2="0"><stop offset=".000" stop-color="#b5ff01"/><stop offset=".772" stop-color="#fff900"/><stop offset="1.003" stop-color="#ffe200"/></linearGradient>
<linearGradient id="ib3" gradientUnits="userSpaceOnUse" x1="2125" x2="2436" y1="0" y2="0"><stop offset=".000" stop-color="#b6ff01"/><stop offset=".752" stop-color="#fffa00"/><stop offset="1.003" stop-color="#ffe100"/></linearGradient>
<linearGradient id="ib4" gradientUnits="userSpaceOnUse" x1="2125" x2="2436" y1="0" y2="0"><stop offset=".000" stop-color="#b7ff02"/><stop offset=".752" stop-color="#fff900"/><stop offset="1.003" stop-color="#ffe000"/></linearGradient>
<linearGradient id="ib5" gradientUnits="userSpaceOnUse" x1="2125" x2="2436" y1="0" y2="0"><stop offset=".000" stop-color="#b8ff02"/><stop offset=".733" stop-color="#fff900"/><stop offset="1.003" stop-color="#ffdf00"/></linearGradient>
<linearGradient id="ib6" gradientUnits="userSpaceOnUse" x1="2125" x2="2436" y1="0" y2="0"><stop offset=".000" stop-color="#b9ff03"/><stop offset=".714" stop-color="#fffa00"/><stop offset="1.003" stop-color="#ffde00"/></linearGradient>
<linearGradient id="ib7" gradientUnits="userSpaceOnUse" x1="2125" x2="2436" y1="0" y2="0"><stop offset=".000" stop-color="#baff03"/><stop offset=".714" stop-color="#fff900"/><stop offset="1.003" stop-color="#ffdd00"/></linearGradient>
<linearGradient id="ib8" gradientUnits="userSpaceOnUse" x1="2125" x2="2436" y1="0" y2="0"><stop offset=".000" stop-color="#bbff04"/><stop offset=".695" stop-color="#fffa00"/><stop offset="1.003" stop-color="#ffdc00"/></linearGradient>
<linearGradient id="ib9" gradientUnits="userSpaceOnUse" x1="2125" x2="2436" y1="0" y2="0"><stop offset=".000" stop-color="#bcff04"/><stop offset=".695" stop-color="#fff900"/><stop offset="1.003" stop-color="#ffda00"/></linearGradient>
<linearGradient id="ib10" gradientUnits="userSpaceOnUse" x1="2125" x2="2436" y1="0" y2="0"><stop offset=".000" stop-color="#bdff05"/><stop offset=".675" stop-color="#fff900"/><stop offset="1.003" stop-color="#ffd900"/></linearGradient>
<linearGradient id="ib11" gradientUnits="userSpaceOnUse" x1="2125" x2="2436" y1="0" y2="0"><stop offset=".000" stop-color="#beff05"/><stop offset=".656" stop-color="#fffa00"/><stop offset="1.003" stop-color="#ffd800"/></linearGradient>
<linearGradient id="ib12" gradientUnits="userSpaceOnUse" x1="2125" x2="2436" y1="0" y2="0"><stop offset=".000" stop-color="#bfff06"/><stop offset=".656" stop-color="#fff900"/><stop offset="1.003" stop-color="#ffd700"/></linearGradient>
<linearGradient id="ib13" gradientUnits="userSpaceOnUse" x1="2125" x2="2436" y1="0" y2="0"><stop offset=".000" stop-color="#c0ff07"/><stop offset=".637" stop-color="#fffa00"/><stop offset="1.003" stop-color="#ffd600"/></linearGradient>
<linearGradient id="ib14" gradientUnits="userSpaceOnUse" x1="2125" x2="2436" y1="0" y2="0"><stop offset=".000" stop-color="#c1ff07"/><stop offset=".637" stop-color="#fff800"/><stop offset="1.003" stop-color="#ffd500"/></linearGradient>
<linearGradient id="ib15" gradientUnits="userSpaceOnUse" x1="2125" x2="2436" y1="0" y2="0"><stop offset=".000" stop-color="#c2ff08"/><stop offset=".617" stop-color="#fff900"/><stop offset="1.003" stop-color="#ffd400"/></linearGradient>
<linearGradient id="ib16" gradientUnits="userSpaceOnUse" x1="2125" x2="2436" y1="0" y2="0"><stop offset=".000" stop-color="#c3ff08"/><stop offset=".598" stop-color="#fffa00"/><stop offset="1.003" stop-color="#ffd300"/></linearGradient>
<linearGradient id="ib17" gradientUnits="userSpaceOnUse" x1="2125" x2="2436" y1="0" y2="0"><stop offset=".000" stop-color="#c4ff09"/><stop offset=".598" stop-color="#fff900"/><stop offset="1.003" stop-color="#ffd200"/></linearGradient>
<linearGradient id="ib18" gradientUnits="userSpaceOnUse" x1="2125" x2="2436" y1="0" y2="0"><stop offset=".000" stop-color="#c5ff0a"/><stop offset=".579" stop-color="#fffa00"/><stop offset="1.003" stop-color="#ffd100"/></linearGradient>
<linearGradient id="ib19" gradientUnits="userSpaceOnUse" x1="2125" x2="2436" y1="0" y2="0"><stop offset=".000" stop-color="#c6ff0a"/><stop offset=".579" stop-color="#fff800"/><stop offset="1.003" stop-color="#ffd000"/></linearGradient>
<linearGradient id="ib20" gradientUnits="userSpaceOnUse" x1="2125" x2="2436" y1="0" y2="0"><stop offset=".000" stop-color="#c7ff0b"/><stop offset=".559" stop-color="#fff900"/><stop offset="1.003" stop-color="#ffcf00"/></linearGradient>
<linearGradient id="ib21" gradientUnits="userSpaceOnUse" x1="2125" x2="2436" y1="0" y2="0"><stop offset=".000" stop-color="#c8ff0b"/><stop offset=".540" stop-color="#fffa00"/><stop offset="1.003" stop-color="#ffcd00"/></linearGradient>
<linearGradient id="ib22" gradientUnits="userSpaceOnUse" x1="2125" x2="2436" y1="0" y2="0"><stop offset=".000" stop-color="#caff0c"/><stop offset=".540" stop-color="#fff900"/><stop offset="1.003" stop-color="#ffcc00"/></linearGradient>
<linearGradient id="ib23" gradientUnits="userSpaceOnUse" x1="2125" x2="2436" y1="0" y2="0"><stop offset=".000" stop-color="#cbff0c"/><stop offset=".521" stop-color="#fff900"/><stop offset="1.003" stop-color="#ffcb00"/></linearGradient>
<linearGradient id="ib24" gradientUnits="userSpaceOnUse" x1="2125" x2="2436" y1="0" y2="0"><stop offset=".000" stop-color="#ccff0d"/><stop offset=".521" stop-color="#fff801"/><stop offset="1.003" stop-color="#ffca00"/></linearGradient>
<linearGradient id="ib25" gradientUnits="userSpaceOnUse" x1="2125" x2="2436" y1="0" y2="0"><stop offset=".000" stop-color="#cdff0e"/><stop offset=".502" stop-color="#fff902"/><stop offset="1.003" stop-color="#ffc900"/></linearGradient>
<linearGradient id="ib26" gradientUnits="userSpaceOnUse" x1="2125" x2="2436" y1="0" y2="0"><stop offset=".000" stop-color="#ceff0e"/><stop offset=".482" stop-color="#fffa03"/><stop offset="1.003" stop-color="#ffc800"/></linearGradient>
<linearGradient id="ib27" gradientUnits="userSpaceOnUse" x1="2125" x2="2436" y1="0" y2="0"><stop offset=".000" stop-color="#cfff0f"/><stop offset=".482" stop-color="#fff904"/><stop offset="1.003" stop-color="#ffc700"/></linearGradient>
<linearGradient id="ib28" gradientUnits="userSpaceOnUse" x1="2125" x2="2436" y1="0" y2="0"><stop offset=".000" stop-color="#d0ff10"/><stop offset=".463" stop-color="#fff905"/><stop offset="1.003" stop-color="#ffc600"/></linearGradient>
<linearGradient id="ib29" gradientUnits="userSpaceOnUse" x1="2125" x2="2436" y1="0" y2="0"><stop offset=".000" stop-color="#d2ff10"/><stop offset=".463" stop-color="#fff805"/><stop offset="1.003" stop-color="#ffc500"/></linearGradient>
<linearGradient id="ib30" gradientUnits="userSpaceOnUse" x1="2125" x2="2436" y1="0" y2="0"><stop offset=".000" stop-color="#d3ff11"/><stop offset=".444" stop-color="#fff906"/><stop offset="1.003" stop-color="#ffc400"/></linearGradient>
<linearGradient id="ib31" gradientUnits="userSpaceOnUse" x1="2125" x2="2436" y1="0" y2="0"><stop offset=".000" stop-color="#d4ff11"/><stop offset=".424" stop-color="#fffa07"/><stop offset="1.003" stop-color="#ffc300"/></linearGradient>
<linearGradient id="ib32" gradientUnits="userSpaceOnUse" x1="2125" x2="2436" y1="0" y2="0"><stop offset=".000" stop-color="#d5ff12"/><stop offset=".424" stop-color="#fff808"/><stop offset="1.003" stop-color="#ffc200"/></linearGradient>
<linearGradient id="ib33" gradientUnits="userSpaceOnUse" x1="2125" x2="2436" y1="0" y2="0"><stop offset=".000" stop-color="#d6ff13"/><stop offset=".405" stop-color="#fff909"/><stop offset="1.003" stop-color="#ffc100"/></linearGradient>
<linearGradient id="ib34" gradientUnits="userSpaceOnUse" x1="2125" x2="2436" y1="0" y2="0"><stop offset=".000" stop-color="#d8ff13"/><stop offset=".405" stop-color="#fff80a"/><stop offset="1.003" stop-color="#ffc000"/></linearGradient>
<linearGradient id="ib35" gradientUnits="userSpaceOnUse" x1="2125" x2="2436" y1="0" y2="0"><stop offset=".000" stop-color="#d9ff14"/><stop offset=".386" stop-color="#fff90b"/><stop offset="1.003" stop-color="#ffbf00"/></linearGradient>
<linearGradient id="ib36" gradientUnits="userSpaceOnUse" x1="2125" x2="2436" y1="0" y2="0"><stop offset=".000" stop-color="#daff15"/><stop offset=".367" stop-color="#fffa0c"/><stop offset="1.003" stop-color="#ffbe00"/></linearGradient>
<linearGradient id="ib37" gradientUnits="userSpaceOnUse" x1="2125" x2="2436" y1="0" y2="0"><stop offset=".000" stop-color="#dbff15"/><stop offset=".367" stop-color="#fff80d"/><stop offset="1.003" stop-color="#ffbd00"/></linearGradient>
<linearGradient id="ib38" gradientUnits="userSpaceOnUse" x1="2125" x2="2436" y1="0" y2="0"><stop offset=".000" stop-color="#dcff16"/><stop offset=".347" stop-color="#fff90e"/><stop offset="1.003" stop-color="#ffbc00"/></linearGradient>
<linearGradient id="ib39" gradientUnits="userSpaceOnUse" x1="2125" x2="2436" y1="0" y2="0"><stop offset=".000" stop-color="#deff17"/><stop offset=".347" stop-color="#fff80e"/><stop offset="1.003" stop-color="#ffbb00"/></linearGradient>
<linearGradient id="ib40" gradientUnits="userSpaceOnUse" x1="2125" x2="2436" y1="0" y2="0"><stop offset=".000" stop-color="#dfff17"/><stop offset=".328" stop-color="#fff90f"/><stop offset="1.003" stop-color="#ffba00"/></linearGradient>
<linearGradient id="ib41" gradientUnits="userSpaceOnUse" x1="2125" x2="2436" y1="0" y2="0"><stop offset=".000" stop-color="#e0ff18"/><stop offset=".328" stop-color="#fff710"/><stop offset="1.003" stop-color="#ffb900"/></linearGradient>
<linearGradient id="ib42" gradientUnits="userSpaceOnUse" x1="2125" x2="2436" y1="0" y2="0"><stop offset=".000" stop-color="#e1ff19"/><stop offset=".309" stop-color="#fff811"/><stop offset="1.003" stop-color="#ffb800"/></linearGradient>
<linearGradient id="ib43" gradientUnits="userSpaceOnUse" x1="2125" x2="2436" y1="0" y2="0"><stop offset=".000" stop-color="#e3ff19"/><stop offset=".289" stop-color="#fff912"/><stop offset="1.003" stop-color="#ffb700"/></linearGradient>
<linearGradient id="ib44" gradientUnits="userSpaceOnUse" x1="2125" x2="2436" y1="0" y2="0"><stop offset=".000" stop-color="#e4ff1a"/><stop offset=".289" stop-color="#fff813"/><stop offset="1.003" stop-color="#ffb601"/></linearGradient>
<linearGradient id="ib45" gradientUnits="userSpaceOnUse" x1="2125" x2="2436" y1="0" y2="0"><stop offset=".000" stop-color="#e5ff1b"/><stop offset=".270" stop-color="#fff814"/><stop offset="1.003" stop-color="#ffb501"/></linearGradient>
<linearGradient id="ib46" gradientUnits="userSpaceOnUse" x1="2125" x2="2436" y1="0" y2="0"><stop offset=".000" stop-color="#e7ff1c"/><stop offset=".270" stop-color="#fff715"/><stop offset="1.003" stop-color="#ffb402"/></linearGradient>
<linearGradient id="ib47" gradientUnits="userSpaceOnUse" x1="2125" x2="2436" y1="0" y2="0"><stop offset=".000" stop-color="#e8ff1c"/><stop offset=".251" stop-color="#fff816"/><stop offset="1.003" stop-color="#ffb302"/></linearGradient>
<linearGradient id="ib48" gradientUnits="userSpaceOnUse" x1="2125" x2="2436" y1="0" y2="0"><stop offset=".000" stop-color="#e9ff1d"/><stop offset=".251" stop-color="#fff716"/><stop offset="1.003" stop-color="#ffb203"/></linearGradient>
<linearGradient id="rbr" x1="0" y1="0" x2="0" y2="1"><stop offset="0" stop-color="#ff5050"/><stop offset="1" stop-color="#f03030"/></linearGradient>
<linearGradient id="rbg" x1="0" y1="0" x2="0" y2="1"><stop offset="0" stop-color="#58b058"/><stop offset="1" stop-color="#3a9c3a"/></linearGradient>
<linearGradient id="rbb" x1="0" y1="0" x2="0" y2="1"><stop offset="0" stop-color="#5858ff"/><stop offset="1" stop-color="#4040f8"/></linearGradient>
<linearGradient id="thd" x1="0" y1="0" x2="0" y2="1"><stop offset="0" stop-color="#444"/><stop offset="0.4" stop-color="#333"/><stop offset="0.5" stop-color="#161616"/><stop offset="1" stop-color="#141414"/></linearGradient>
<linearGradient id="tlt" x1="0" y1="0" x2="1" y2="0"><stop offset="0" stop-color="#909090"/><stop offset="0.5" stop-color="#808080"/><stop offset="1" stop-color="#7a7a7a"/></linearGradient>
<linearGradient id="tdk" x1="0" y1="0" x2="1" y2="0"><stop offset="0" stop-color="#444"/><stop offset="1" stop-color="#3a3a3a"/></linearGradient>
<linearGradient id="bbar" x1="0" y1="0" x2="0" y2="1"><stop offset="0" stop-color="#4a4a4a"/><stop offset="0.3" stop-color="#3c3c3c"/><stop offset="1" stop-color="#252525"/></linearGradient>
<linearGradient id="bbtn" x1="0" y1="0" x2="0" y2="1"><stop offset="0" stop-color="#ababab"/><stop offset="0.55" stop-color="#8a8a8a"/><stop offset="1" stop-color="#5c5c5c"/></linearGradient>
<linearGradient id="bsel" x1="0" y1="0" x2="0" y2="1"><stop offset="0" stop-color="#1c1c1c"/><stop offset="1" stop-color="#2e2e2e"/></linearGradient>
<linearGradient id="bbtn2" x1="0" y1="0" x2="0" y2="1"><stop offset="0" stop-color="#b0b0b0"/><stop offset="1" stop-color="#6a6a6a"/></linearGradient>
<linearGradient id="icirc" x1="0" y1="0" x2="0" y2="1"><stop offset="0" stop-color="#8a8a8a"/><stop offset="1" stop-color="#b4b4b4"/></linearGradient>
<linearGradient id="stopg" x1="0" y1="0" x2="0" y2="1"><stop offset="0" stop-color="#d0d0d0"/><stop offset="0.5" stop-color="#c4c4c4"/><stop offset="0.5" stop-color="#aaaaaa"/><stop offset="1" stop-color="#b0b0b0"/></linearGradient>
<linearGradient id="dkg" x1="0" y1="0" x2="0" y2="1"><stop offset="0" stop-color="#3c3c3c"/><stop offset="1" stop-color="#262626"/></linearGradient>
<linearGradient id="bnx" x1="0" y1="0" x2="0" y2="1"><stop offset="0" stop-color="#b4b4b4"/><stop offset="1" stop-color="#7a7a7a"/></linearGradient>
</defs>
<rect x="0" y="0" width="2549" height="1380" fill="#333333"/>
<rect x="0" y="0" width="2549" height="34" fill="#ffffff"/>
<rect x="0" y="34" width="2549" height="99" fill="#222222"/>
<path d="M14.0 4.5 L19.5 10.0 L14.0 15.5 L8.5 10.0 Z" fill="#f5c518"/>
<path d="M7.5 11.5 L13.0 17.0 L7.5 22.5 L2.0 17.0 Z" fill="#2aa8e0"/>
<path d="M20.5 11.5 L26.0 17.0 L20.5 22.5 L15.0 17.0 Z" fill="#5cc62a"/>
<path d="M14.0 18.5 L19.5 24.0 L14.0 29.5 L8.5 24.0 Z" fill="#e8356a"/>
<text x="31.0" y="24.0" font-size="18.0" fill="#000000" textLength="579.0" lengthAdjust="spacingAndGlyphs" xml:space="preserve">Calman 2025 Calman Ultimate for Business 53 Days Remaining&#160; - Untitled</text>
<line x1="2376" y1="16.5" x2="2391" y2="16.5" stroke="#000" stroke-width="1.2"/>
<rect x="2445.5" y="13.5" width="11" height="11" fill="none" stroke="#000" stroke-width="1.2"/>
<path d="M2448.5 13.5 V10.5 H2459.5 V21.5 H2456.5" fill="none" stroke="#000" stroke-width="1.2"/>
<path d="M2516 10 L2531 25 M2531 10 L2516 25" stroke="#000" stroke-width="1.3"/>
<path d="M0.5 34 H274.5 V72 Q274.5 78 268.5 78 H6.5 Q0.5 78 0.5 72 Z" fill="url(#redg)" stroke="#f08a8a" stroke-width="1" stroke-opacity="0.6"/>
<path d="M45.76 46.34 L51.80 40.30 L57.84 46.34 M60.86 49.36 L66.90 55.40 L60.86 61.44 M57.84 64.46 L51.80 70.50 L45.76 64.46 M42.74 61.44 L36.70 55.40 L42.74 49.36" fill="none" stroke="#fff" stroke-width="3.6" stroke-linecap="round" stroke-linejoin="round"/>
<path d="M51.8 45.5 l3.6 3.6 l-3.6 3.6 l-3.6 -3.6 Z" fill="#fff" stroke="#fff" stroke-width="0.8" stroke-linejoin="round"/>
<path d="M45.5 51.8 l3.6 3.6 l-3.6 3.6 l-3.6 -3.6 Z" fill="#fff" stroke="#fff" stroke-width="0.8" stroke-linejoin="round"/>
<path d="M58.1 51.8 l3.6 3.6 l-3.6 3.6 l-3.6 -3.6 Z" fill="#fff" stroke="#fff" stroke-width="0.8" stroke-linejoin="round"/>
<path d="M51.8 58.1 l3.6 3.6 l-3.6 3.6 l-3.6 -3.6 Z" fill="#fff" stroke="#fff" stroke-width="0.8" stroke-linejoin="round"/>
<path d="M91.2 51.4 A8.15 8.15 0 1 0 91.2 60.6 M110 56 A8.2 8.2 0 1 0 109.99 56.2 M109.9 45.8 V66.1 M119.15 37.3 V66.1 M127.7 66.1 V54.3 A6.45 6.45 0 0 1 140.6 54.3 V66.1 M140.6 54.3 A6.45 6.45 0 0 1 153.5 54.3 V66.1 M177.9 56 A8.2 8.2 0 1 0 177.89 56.2 M177.8 45.8 V66.1 M185.1 66.1 V55.5 A7.5 7.5 0 0 1 200.1 55.5 V66.1" fill="none" stroke="#fff8f8" stroke-width="3.7"/>
<circle cx="248" cy="55" r="14" fill="url(#redc)"/>
<path d="M241 52 H255 L248 60 Z" fill="#fff"/>
<rect x="285" y="52.6" width="2264" height="7" fill="url(#rainbow)"/>
<path d="M-2 87.5 H34 Q39.5 87.5 39.5 93 V122.5 Q39.5 128 34 128 H-2 Z" fill="url(#btng)" stroke="#d8d8d8" stroke-width="1"/>
<circle cx="19" cy="108" r="14" fill="url(#circg)"/>
<path d="M15.5 99.5 L25 107.5 L15.5 115.5 Z" fill="#fff"/>
<path d="M44.5 133 V93 Q44.5 87.5 50 87.5 H175.5 Q181 87.5 181 93 V133" fill="url(#tabg)" stroke="#8a8a8a" stroke-width="1"/>
<line x1="131.3" y1="88" x2="131.3" y2="131" stroke="#9a9a9a" stroke-width="1.1"/>
<circle cx="154.8" cy="112.8" r="14" fill="url(#plg)"/>
<path d="M154.8 108.5 V118 M150 113.5 H159.5" stroke="#999" stroke-width="1.3"/>
<text x="53.0" y="117.0" font-size="18.0" fill="#e0e0e0" textLength="69.0" lengthAdjust="spacingAndGlyphs">History 1</text>
<path d="M1704.0 132 V93 Q1704.0 87 1710.0 87 H1912.5 Q1918.5 87 1918.5 93 V132 Z" fill="url(#devg)"/>
<path d="M1704.0 132 V93 Q1704.0 87 1710.0 87 H1713.5 V132 Z" fill="#11d411"/>
<text x="1717.5" y="104.0" font-size="15.5" fill="#ececec" textLength="98.0" lengthAdjust="spacingAndGlyphs">X-Rite i1Pro 3</text>
<text x="1717.5" y="126.0" font-size="15.5" fill="#ececec" textLength="84.0" lengthAdjust="spacingAndGlyphs">Direct View</text>
<circle cx="1835.5" cy="109.0" r="13.5" fill="url(#circg)" opacity="0.8"/>
<path d="M1828.5 108.5 h14 l-7 7.5 Z" fill="#fff"/>
<line x1="1865.5" y1="91" x2="1865.5" y2="132" stroke="#3a3a3a" stroke-width="1.2"/>
<circle cx="1896" cy="109" r="18.5" fill="#0000e6" stroke="#ffffff" stroke-width="1.5"/>
<text x="1896.0" y="114.0" font-size="14.0" fill="#fff" text-anchor="middle" textLength="24.0" lengthAdjust="spacingAndGlyphs">717</text>
<path d="M1927.5 132 V93 Q1927.5 87 1933.5 87 H2234.0 Q2240.0 87 2240.0 93 V132 Z" fill="url(#devg)"/>
<path d="M1927.5 132 V93 Q1927.5 87 1933.5 87 H1937.0 V132 Z" fill="#11d411"/>
<text x="1940.5" y="104.0" font-size="15.5" fill="#ececec" textLength="256.0" lengthAdjust="spacingAndGlyphs">CalMAN Client 3 Pattern Generator</text>
<circle cx="2216.0" cy="109.0" r="13.5" fill="url(#circg)" opacity="0.8"/>
<path d="M2209.0 108.5 h14 l-7 7.5 Z" fill="#fff"/>
<path d="M2249.0 132 V93 Q2249.0 87 2255.0 87 H2457.5 Q2463.5 87 2463.5 93 V132 Z" fill="url(#devg)"/>
<path d="M2249.0 132 V93 Q2249.0 87 2255.0 87 H2258.5 V132 Z" fill="#e6e600"/>
<text x="2263.0" y="104.0" font-size="15.5" fill="#ececec" textLength="157.0" lengthAdjust="spacingAndGlyphs">Direct Display Control</text>
<circle cx="2440.0" cy="109.0" r="13.5" fill="url(#circg)" opacity="0.8"/>
<path d="M2433.0 108.5 h14 l-7 7.5 Z" fill="#fff"/>
<rect x="2469.5" y="87.5" width="49" height="40.5" rx="6" fill="url(#btng)" stroke="#d0d0d0" stroke-width="1"/>
<circle cx="2494" cy="108" r="14" fill="url(#circg)" opacity="0.7"/>
<path d="M2503.7 106.7 L2503.7 109.3 L2501.2 109.9 L2500.4 111.7 L2501.8 113.9 L2499.9 115.8 L2497.7 114.4 L2495.9 115.2 L2495.3 117.7 L2492.7 117.7 L2492.1 115.2 L2490.3 114.4 L2488.1 115.8 L2486.2 113.9 L2487.6 111.7 L2486.8 109.9 L2484.3 109.3 L2484.3 106.7 L2486.8 106.1 L2487.6 104.3 L2486.2 102.1 L2488.1 100.2 L2490.3 101.6 L2492.1 100.8 L2492.7 98.3 L2495.3 98.3 L2495.9 100.8 L2497.7 101.6 L2499.9 100.2 L2501.8 102.1 L2500.4 104.3 L2501.2 106.1 Z M2494 103.2 a4.8 4.8 0 1 0 0.01 0 Z" fill="#c8c8c8" fill-rule="evenodd"/>
<path d="M2520.5 128 V93 Q2520.5 87.5 2526 87.5 H2552 V128 Z" fill="url(#btng)" stroke="#d0d0d0" stroke-width="1"/>
<circle cx="2542" cy="107" r="14" fill="url(#circg)" opacity="0.7"/>
<path d="M2544 98.5 L2536 106.5 L2544 114 Z" fill="#fff"/>
<line x1="0" y1="132.5" x2="2549" y2="132.5" stroke="#262626" stroke-width="1.2"/>
<rect x="0" y="133" width="1.6" height="1152" fill="#262626"/>
<text x="135.0" y="215.5" font-size="55.5" fill="#f2f2f2" textLength="459.0" lengthAdjust="spacingAndGlyphs">Saturation Sweeps</text>
<text x="357.0" y="286.0" font-size="21.0" fill="#d2d2d2" text-anchor="middle" textLength="111.0" lengthAdjust="spacingAndGlyphs">DeltaE 2000</text>
<rect x="161.5" y="293.0" width="441.5" height="584.0" fill="#222222"/>
<line x1="220.1" y1="293.0" x2="220.1" y2="886.0" stroke="#9a9a9a" stroke-width="1.6"/>
<line x1="278.8" y1="293.0" x2="278.8" y2="886.0" stroke="#9a9a9a" stroke-width="1.6"/>
<line x1="337.4" y1="293.0" x2="337.4" y2="886.0" stroke="#9a9a9a" stroke-width="1.6"/>
<line x1="396.1" y1="293.0" x2="396.1" y2="886.0" stroke="#9a9a9a" stroke-width="1.6"/>
<line x1="454.7" y1="293.0" x2="454.7" y2="886.0" stroke="#9a9a9a" stroke-width="1.6"/>
<line x1="513.4" y1="293.0" x2="513.4" y2="886.0" stroke="#9a9a9a" stroke-width="1.6"/>
<line x1="572.0" y1="293.0" x2="572.0" y2="886.0" stroke="#9a9a9a" stroke-width="1.6"/>
<rect x="161.5" y="293.0" width="441.5" height="584.0" fill="none" stroke="#9a9a9a" stroke-width="1.6"/>
<line x1="161.5" y1="877.0" x2="161.5" y2="886.0" stroke="#9a9a9a" stroke-width="1.6"/>
<line x1="154" y1="293.0" x2="161.5" y2="293.0" stroke="#d8d8d8" stroke-width="1.8"/>
<line x1="154" y1="390.5" x2="161.5" y2="390.5" stroke="#d8d8d8" stroke-width="1.8"/>
<line x1="154" y1="489.0" x2="161.5" y2="489.0" stroke="#d8d8d8" stroke-width="1.8"/>
<line x1="154" y1="585.0" x2="161.5" y2="585.0" stroke="#d8d8d8" stroke-width="1.8"/>
<line x1="154" y1="683.0" x2="161.5" y2="683.0" stroke="#d8d8d8" stroke-width="1.8"/>
<line x1="154" y1="779.0" x2="161.5" y2="779.0" stroke="#d8d8d8" stroke-width="1.8"/>
<line x1="154" y1="877.0" x2="161.5" y2="877.0" stroke="#d8d8d8" stroke-width="1.8"/>
<text x="161.5" y="907.0" font-size="19.5" fill="#d2d2d2" text-anchor="middle">0</text>
<text x="220.1" y="907.0" font-size="19.5" fill="#d2d2d2" text-anchor="middle">2</text>
<text x="278.8" y="907.0" font-size="19.5" fill="#d2d2d2" text-anchor="middle">4</text>
<text x="337.4" y="907.0" font-size="19.5" fill="#d2d2d2" text-anchor="middle">6</text>
<text x="396.1" y="907.0" font-size="19.5" fill="#d2d2d2" text-anchor="middle">8</text>
<text x="454.7" y="907.0" font-size="19.5" fill="#d2d2d2" text-anchor="middle">10</text>
<text x="513.4" y="907.0" font-size="19.5" fill="#d2d2d2" text-anchor="middle">12</text>
<text x="572.0" y="907.0" font-size="19.5" fill="#d2d2d2" text-anchor="middle">14</text>
<text x="160.5" y="349.5" font-size="20.0" fill="#d2d2d2" text-anchor="end">100%</text>
<text x="160.5" y="446.5" font-size="20.0" fill="#d2d2d2" text-anchor="end">80%</text>
<text x="160.5" y="544.5" font-size="20.0" fill="#d2d2d2" text-anchor="end">60%</text>
<text x="160.5" y="642.5" font-size="20.0" fill="#d2d2d2" text-anchor="end">40%</text>
<text x="160.5" y="739.0" font-size="20.0" fill="#d2d2d2" text-anchor="end">20%</text>
<text x="160.5" y="836.5" font-size="20.0" fill="#d2d2d2" text-anchor="end">100</text>
<rect x="162.5" y="302.5" width="58.2" height="10.5" fill="#000"/>
<rect x="162.5" y="304.5" width="55.7" height="7.2" fill="url(#bg10)"/>
<rect x="162.5" y="304.5" width="16.0" height="7.2" fill="url(#hlg)"/>
<rect x="162.5" y="314.1" width="40.4" height="10.5" fill="#000"/>
<rect x="162.5" y="316.1" width="37.9" height="7.2" fill="url(#bg11)"/>
<rect x="162.5" y="316.1" width="16.0" height="7.2" fill="url(#hlg)"/>
<rect x="162.5" y="325.6" width="52.5" height="10.5" fill="#000"/>
<rect x="162.5" y="327.6" width="50.0" height="7.2" fill="url(#bg12)"/>
<rect x="162.5" y="327.6" width="16.0" height="7.2" fill="url(#hlg)"/>
<rect x="162.5" y="337.1" width="54.1" height="10.5" fill="#000"/>
<rect x="162.5" y="339.1" width="51.6" height="7.2" fill="url(#bg13)"/>
<rect x="162.5" y="339.1" width="16.0" height="7.2" fill="url(#hlg)"/>
<rect x="162.5" y="348.7" width="38.9" height="10.5" fill="#000"/>
<rect x="162.5" y="350.7" width="36.4" height="7.2" fill="url(#bg14)"/>
<rect x="162.5" y="350.7" width="16.0" height="7.2" fill="url(#hlg)"/>
<rect x="162.5" y="360.2" width="24.7" height="10.5" fill="#000"/>
<rect x="162.5" y="362.2" width="22.2" height="7.2" fill="url(#bg15)"/>
<rect x="162.5" y="362.2" width="16.0" height="7.2" fill="url(#hlg)"/>
<rect x="162.5" y="401.0" width="68.3" height="10.5" fill="#000"/>
<rect x="162.5" y="403.0" width="65.8" height="7.2" fill="url(#bg16)"/>
<rect x="162.5" y="403.0" width="16.0" height="7.2" fill="url(#hlg)"/>
<rect x="162.5" y="412.6" width="38.4" height="10.5" fill="#000"/>
<rect x="162.5" y="414.6" width="35.9" height="7.2" fill="url(#bg17)"/>
<rect x="162.5" y="414.6" width="16.0" height="7.2" fill="url(#hlg)"/>
<rect x="162.5" y="424.1" width="44.5" height="10.5" fill="#000"/>
<rect x="162.5" y="426.1" width="42.0" height="7.2" fill="url(#bg18)"/>
<rect x="162.5" y="426.1" width="16.0" height="7.2" fill="url(#hlg)"/>
<rect x="162.5" y="435.6" width="50.0" height="10.5" fill="#000"/>
<rect x="162.5" y="437.6" width="47.5" height="7.2" fill="url(#bg19)"/>
<rect x="162.5" y="437.6" width="16.0" height="7.2" fill="url(#hlg)"/>
<rect x="162.5" y="447.2" width="34.8" height="10.5" fill="#000"/>
<rect x="162.5" y="449.2" width="32.3" height="7.2" fill="url(#bg20)"/>
<rect x="162.5" y="449.2" width="16.0" height="7.2" fill="url(#hlg)"/>
<rect x="162.5" y="458.8" width="28.7" height="10.5" fill="#000"/>
<rect x="162.5" y="460.8" width="26.2" height="7.2" fill="url(#bg21)"/>
<rect x="162.5" y="460.8" width="16.0" height="7.2" fill="url(#hlg)"/>
<rect x="162.5" y="497.0" width="58.1" height="10.5" fill="#000"/>
<rect x="162.5" y="499.0" width="55.6" height="7.2" fill="url(#bg22)"/>
<rect x="162.5" y="499.0" width="16.0" height="7.2" fill="url(#hlg)"/>
<rect x="162.5" y="508.6" width="34.3" height="10.5" fill="#000"/>
<rect x="162.5" y="510.6" width="31.8" height="7.2" fill="url(#bg23)"/>
<rect x="162.5" y="510.6" width="16.0" height="7.2" fill="url(#hlg)"/>
<rect x="162.5" y="520.1" width="18.3" height="10.5" fill="#000"/>
<rect x="162.5" y="522.1" width="15.8" height="7.2" fill="url(#bg24)"/>
<rect x="162.5" y="522.1" width="15.8" height="7.2" fill="url(#hlg)"/>
<rect x="162.5" y="531.6" width="45.4" height="10.5" fill="#000"/>
<rect x="162.5" y="533.6" width="42.9" height="7.2" fill="url(#bg25)"/>
<rect x="162.5" y="533.6" width="16.0" height="7.2" fill="url(#hlg)"/>
<rect x="162.5" y="543.2" width="36.2" height="10.5" fill="#000"/>
<rect x="162.5" y="545.2" width="33.7" height="7.2" fill="url(#bg26)"/>
<rect x="162.5" y="545.2" width="16.0" height="7.2" fill="url(#hlg)"/>
<rect x="162.5" y="554.8" width="23.8" height="10.5" fill="#000"/>
<rect x="162.5" y="556.8" width="21.3" height="7.2" fill="url(#bg27)"/>
<rect x="162.5" y="556.8" width="16.0" height="7.2" fill="url(#hlg)"/>
<rect x="162.5" y="595.7" width="47.3" height="10.5" fill="#000"/>
<rect x="162.5" y="597.7" width="44.8" height="7.2" fill="url(#bg28)"/>
<rect x="162.5" y="597.7" width="16.0" height="7.2" fill="url(#hlg)"/>
<rect x="162.5" y="607.2" width="26.1" height="10.5" fill="#000"/>
<rect x="162.5" y="609.2" width="23.6" height="7.2" fill="url(#bg29)"/>
<rect x="162.5" y="609.2" width="16.0" height="7.2" fill="url(#hlg)"/>
<rect x="162.5" y="618.8" width="4.3" height="10.5" fill="#000"/>
<rect x="162.5" y="620.8" width="1.8" height="7.2" fill="url(#bg30)"/>
<rect x="162.5" y="620.8" width="1.8" height="7.2" fill="url(#hlg)"/>
<rect x="162.5" y="630.4" width="42.5" height="10.5" fill="#000"/>
<rect x="162.5" y="632.4" width="40.0" height="7.2" fill="url(#bg31)"/>
<rect x="162.5" y="632.4" width="16.0" height="7.2" fill="url(#hlg)"/>
<rect x="162.5" y="641.9" width="36.2" height="10.5" fill="#000"/>
<rect x="162.5" y="643.9" width="33.7" height="7.2" fill="url(#bg32)"/>
<rect x="162.5" y="643.9" width="16.0" height="7.2" fill="url(#hlg)"/>
<rect x="162.5" y="653.5" width="24.5" height="10.5" fill="#000"/>
<rect x="162.5" y="655.5" width="22.0" height="7.2" fill="url(#bg33)"/>
<rect x="162.5" y="655.5" width="16.0" height="7.2" fill="url(#hlg)"/>
<rect x="162.5" y="693.6" width="45.4" height="10.5" fill="#000"/>
<rect x="162.5" y="695.6" width="42.9" height="7.2" fill="url(#bg34)"/>
<rect x="162.5" y="695.6" width="16.0" height="7.2" fill="url(#hlg)"/>
<rect x="162.5" y="705.1" width="22.2" height="10.5" fill="#000"/>
<rect x="162.5" y="707.1" width="19.7" height="7.2" fill="url(#bg35)"/>
<rect x="162.5" y="707.1" width="16.0" height="7.2" fill="url(#hlg)"/>
<rect x="162.5" y="716.7" width="18.3" height="10.5" fill="#000"/>
<rect x="162.5" y="718.7" width="15.8" height="7.2" fill="url(#bg36)"/>
<rect x="162.5" y="718.7" width="15.8" height="7.2" fill="url(#hlg)"/>
<rect x="162.5" y="728.2" width="42.5" height="10.5" fill="#000"/>
<rect x="162.5" y="730.2" width="40.0" height="7.2" fill="url(#bg37)"/>
<rect x="162.5" y="730.2" width="16.0" height="7.2" fill="url(#hlg)"/>
<rect x="162.5" y="739.8" width="34.3" height="10.5" fill="#000"/>
<rect x="162.5" y="741.8" width="31.8" height="7.2" fill="url(#bg38)"/>
<rect x="162.5" y="741.8" width="16.0" height="7.2" fill="url(#hlg)"/>
<rect x="162.5" y="751.4" width="22.5" height="10.5" fill="#000"/>
<rect x="162.5" y="753.4" width="20.0" height="7.2" fill="url(#bg39)"/>
<rect x="162.5" y="753.4" width="16.0" height="7.2" fill="url(#hlg)"/>
<rect x="162.5" y="858.0" width="45.4" height="10.5" fill="#000"/>
<rect x="162.5" y="860.0" width="42.9" height="7.2" fill="url(#bg40)"/>
<rect x="162.5" y="860.0" width="16.0" height="7.2" fill="url(#hlg)"/>
<rect x="677.6" y="197.7" width="204.4" height="446.5" fill="#222222"/>
<line x1="671.6" y1="197.7" x2="882.0" y2="197.7" stroke="#9a9a9a" stroke-width="1.5"/>
<text x="670.6" y="204.7" font-size="20.0" fill="#d2d2d2" text-anchor="end">15</text>
<line x1="671.6" y1="273.5" x2="882.0" y2="273.5" stroke="#9a9a9a" stroke-width="1.5"/>
<text x="670.6" y="280.5" font-size="20.0" fill="#d2d2d2" text-anchor="end">10</text>
<line x1="671.6" y1="346.8" x2="882.0" y2="346.8" stroke="#9a9a9a" stroke-width="1.5"/>
<text x="670.6" y="353.8" font-size="20.0" fill="#d2d2d2" text-anchor="end">5</text>
<line x1="671.6" y1="421.5" x2="882.0" y2="421.5" stroke="#9a9a9a" stroke-width="1.5"/>
<text x="670.6" y="428.5" font-size="20.0" fill="#d2d2d2" text-anchor="end">0</text>
<line x1="671.6" y1="496.5" x2="882.0" y2="496.5" stroke="#9a9a9a" stroke-width="1.5"/>
<text x="670.6" y="503.5" font-size="20.0" fill="#d2d2d2" text-anchor="end">-5</text>
<line x1="671.6" y1="571.8" x2="882.0" y2="571.8" stroke="#9a9a9a" stroke-width="1.5"/>
<text x="670.6" y="578.8" font-size="20.0" fill="#d2d2d2" text-anchor="end">-10</text>
<line x1="671.6" y1="644.2" x2="882.0" y2="644.2" stroke="#9a9a9a" stroke-width="1.5"/>
<text x="670.6" y="651.2" font-size="20.0" fill="#d2d2d2" text-anchor="end">-15</text>
<rect x="677.6" y="197.7" width="204.4" height="446.5" fill="none" stroke="#9a9a9a" stroke-width="1.6"/>
<line x1="677.6" y1="644" x2="677.6" y2="653" stroke="#9a9a9a" stroke-width="1.6"/>
<line x1="882.0" y1="644" x2="882.0" y2="653" stroke="#9a9a9a" stroke-width="1.6"/>
<text x="760.8" y="190.0" font-size="20.5" fill="#d2d2d2" text-anchor="middle">Delta L</text>
<text x="779.3" y="667.0" font-size="20.0" fill="#d2d2d2" text-anchor="middle">100%</text>
<rect x="956.5" y="197.7" width="204.7" height="446.5" fill="#222222"/>
<line x1="950.5" y1="197.7" x2="1161.2" y2="197.7" stroke="#9a9a9a" stroke-width="1.5"/>
<text x="949.5" y="204.7" font-size="20.0" fill="#d2d2d2" text-anchor="end">15</text>
<line x1="950.5" y1="273.5" x2="1161.2" y2="273.5" stroke="#9a9a9a" stroke-width="1.5"/>
<text x="949.5" y="280.5" font-size="20.0" fill="#d2d2d2" text-anchor="end">10</text>
<line x1="950.5" y1="346.8" x2="1161.2" y2="346.8" stroke="#9a9a9a" stroke-width="1.5"/>
<text x="949.5" y="353.8" font-size="20.0" fill="#d2d2d2" text-anchor="end">5</text>
<line x1="950.5" y1="421.5" x2="1161.2" y2="421.5" stroke="#9a9a9a" stroke-width="1.5"/>
<text x="949.5" y="428.5" font-size="20.0" fill="#d2d2d2" text-anchor="end">0</text>
<line x1="950.5" y1="496.5" x2="1161.2" y2="496.5" stroke="#9a9a9a" stroke-width="1.5"/>
<text x="949.5" y="503.5" font-size="20.0" fill="#d2d2d2" text-anchor="end">-5</text>
<line x1="950.5" y1="571.8" x2="1161.2" y2="571.8" stroke="#9a9a9a" stroke-width="1.5"/>
<text x="949.5" y="578.8" font-size="20.0" fill="#d2d2d2" text-anchor="end">-10</text>
<line x1="950.5" y1="644.2" x2="1161.2" y2="644.2" stroke="#9a9a9a" stroke-width="1.5"/>
<text x="949.5" y="651.2" font-size="20.0" fill="#d2d2d2" text-anchor="end">-15</text>
<rect x="956.5" y="197.7" width="204.7" height="446.5" fill="none" stroke="#9a9a9a" stroke-width="1.6"/>
<line x1="956.5" y1="644" x2="956.5" y2="653" stroke="#9a9a9a" stroke-width="1.6"/>
<line x1="1161.2" y1="644" x2="1161.2" y2="653" stroke="#9a9a9a" stroke-width="1.6"/>
<text x="1039.8" y="190.0" font-size="20.5" fill="#d2d2d2" text-anchor="middle">Delta C</text>
<text x="1058.3" y="667.0" font-size="20.0" fill="#d2d2d2" text-anchor="middle">100%</text>
<rect x="1235.4" y="197.7" width="204.6" height="446.5" fill="#222222"/>
<line x1="1229.4" y1="197.7" x2="1440.0" y2="197.7" stroke="#9a9a9a" stroke-width="1.5"/>
<text x="1228.4" y="204.7" font-size="20.0" fill="#d2d2d2" text-anchor="end">15</text>
<line x1="1229.4" y1="273.5" x2="1440.0" y2="273.5" stroke="#9a9a9a" stroke-width="1.5"/>
<text x="1228.4" y="280.5" font-size="20.0" fill="#d2d2d2" text-anchor="end">10</text>
<line x1="1229.4" y1="346.8" x2="1440.0" y2="346.8" stroke="#9a9a9a" stroke-width="1.5"/>
<text x="1228.4" y="353.8" font-size="20.0" fill="#d2d2d2" text-anchor="end">5</text>
<line x1="1229.4" y1="421.5" x2="1440.0" y2="421.5" stroke="#9a9a9a" stroke-width="1.5"/>
<text x="1228.4" y="428.5" font-size="20.0" fill="#d2d2d2" text-anchor="end">0</text>
<line x1="1229.4" y1="496.5" x2="1440.0" y2="496.5" stroke="#9a9a9a" stroke-width="1.5"/>
<text x="1228.4" y="503.5" font-size="20.0" fill="#d2d2d2" text-anchor="end">-5</text>
<line x1="1229.4" y1="571.8" x2="1440.0" y2="571.8" stroke="#9a9a9a" stroke-width="1.5"/>
<text x="1228.4" y="578.8" font-size="20.0" fill="#d2d2d2" text-anchor="end">-10</text>
<line x1="1229.4" y1="644.2" x2="1440.0" y2="644.2" stroke="#9a9a9a" stroke-width="1.5"/>
<text x="1228.4" y="651.2" font-size="20.0" fill="#d2d2d2" text-anchor="end">-15</text>
<rect x="1235.4" y="197.7" width="204.6" height="446.5" fill="none" stroke="#9a9a9a" stroke-width="1.6"/>
<line x1="1235.4" y1="644" x2="1235.4" y2="653" stroke="#9a9a9a" stroke-width="1.6"/>
<line x1="1440.0" y1="644" x2="1440.0" y2="653" stroke="#9a9a9a" stroke-width="1.6"/>
<text x="1318.7" y="190.0" font-size="20.5" fill="#d2d2d2" text-anchor="middle">Delta H</text>
<text x="1337.2" y="667.0" font-size="20.0" fill="#d2d2d2" text-anchor="middle">100%</text>
<rect x="698.5" y="405.5" width="161.5" height="16.5" fill="url(#ylbar)" stroke="#000" stroke-width="2"/>
<rect x="977" y="419" width="163" height="3.5" fill="#000"/>
<rect x="1257" y="421.5" width="161.5" height="8.5" fill="url(#ylbar)" stroke="#000" stroke-width="2"/>
<rect x="631" y="691" width="836.5" height="230.5" fill="#000"/>
<rect x="659.8" y="702" width="141.4" height="93" fill="#c2c2a6"/>
<rect x="659.8" y="795" width="141.4" height="93" fill="#c0c0a4"/>
<rect x="659.8" y="702" width="141.4" height="186.5" fill="none" stroke="#f4f4f4" stroke-width="2.2"/>
<text x="730.5" y="910.0" font-size="16.5" fill="#ffffff" text-anchor="middle">20%</text>
<rect x="823.8" y="702" width="140.2" height="93" fill="#c4c388"/>
<rect x="823.8" y="795" width="140.2" height="93" fill="#c2c187"/>
<rect x="823.8" y="702" width="140.2" height="186.5" fill="none" stroke="#f4f4f4" stroke-width="2.2"/>
<text x="893.9" y="910.0" font-size="16.5" fill="#ffffff" text-anchor="middle">40%</text>
<rect x="986.7" y="702" width="141.3" height="93" fill="#c2c068"/>
<rect x="986.7" y="795" width="141.3" height="93" fill="#c0bd66"/>
<rect x="986.7" y="702" width="141.3" height="186.5" fill="none" stroke="#f4f4f4" stroke-width="2.2"/>
<text x="1057.3" y="910.0" font-size="16.5" fill="#ffffff" text-anchor="middle">60%</text>
<rect x="1149.7" y="702" width="141.7" height="93" fill="#c6c54e"/>
<rect x="1149.7" y="795" width="141.7" height="93" fill="#c3c04b"/>
<rect x="1149.7" y="702" width="141.7" height="186.5" fill="none" stroke="#f4f4f4" stroke-width="2.2"/>
<text x="1220.6" y="910.0" font-size="16.5" fill="#ffffff" text-anchor="middle">80%</text>
<rect x="1313.7" y="702" width="141.3" height="93" fill="#c7c600"/>
<rect x="1313.7" y="795" width="141.3" height="93" fill="#c5c300"/>
<rect x="1313.7" y="702" width="141.3" height="186.5" fill="none" stroke="#f4f4f4" stroke-width="2.2"/>
<text x="1384.3" y="910.0" font-size="16.5" fill="#ffffff" text-anchor="middle">100%</text>
<text transform="translate(650.5 742.5) rotate(-90)" font-size="17" fill="#fff" text-anchor="middle" textLength="49" lengthAdjust="spacingAndGlyphs">Actual</text>
<text transform="translate(650.5 847.5) rotate(-90)" font-size="17" fill="#fff" text-anchor="middle" textLength="48" lengthAdjust="spacingAndGlyphs">Target</text>
<rect x="1482" y="157" width="971" height="778" fill="#333333" stroke="#c8c400" stroke-width="10"/>
<text x="1967.0" y="186.5" font-size="20.0" fill="#d2d2d2" text-anchor="middle" textLength="106.0" lengthAdjust="spacingAndGlyphs">CIE 1931 xy</text>
<rect x="1528.0" y="195.3" width="916.0" height="694.7" fill="#222222"/>
<g clip-path="url(#locus)"><rect x="1530" y="198.0" width="800" height="4.3" fill="url(#o0)"/>
<rect x="1530" y="202.0" width="800" height="4.3" fill="url(#o1)"/>
<rect x="1530" y="206.0" width="800" height="4.3" fill="url(#o2)"/>
<rect x="1530" y="210.0" width="800" height="4.3" fill="url(#o3)"/>
<rect x="1530" y="214.0" width="800" height="4.3" fill="url(#o4)"/>
<rect x="1530" y="218.0" width="800" height="4.3" fill="url(#o5)"/>
<rect x="1530" y="222.0" width="800" height="4.3" fill="url(#o6)"/>
<rect x="1530" y="226.0" width="800" height="4.3" fill="url(#o7)"/>
<rect x="1530" y="230.0" width="800" height="4.3" fill="url(#o8)"/>
<rect x="1530" y="234.0" width="800" height="4.3" fill="url(#o9)"/>
<rect x="1530" y="238.0" width="800" height="4.3" fill="url(#o10)"/>
<rect x="1530" y="242.0" width="800" height="4.3" fill="url(#o11)"/>
<rect x="1530" y="246.0" width="800" height="4.3" fill="url(#o12)"/>
<rect x="1530" y="250.0" width="800" height="4.3" fill="url(#o13)"/>
<rect x="1530" y="254.0" width="800" height="4.3" fill="url(#o14)"/>
<rect x="1530" y="258.0" width="800" height="4.3" fill="url(#o15)"/>
<rect x="1530" y="262.0" width="800" height="4.3" fill="url(#o16)"/>
<rect x="1530" y="266.0" width="800" height="4.3" fill="url(#o17)"/>
<rect x="1530" y="270.0" width="800" height="4.3" fill="url(#o18)"/>
<rect x="1530" y="274.0" width="800" height="4.3" fill="url(#o19)"/>
<rect x="1530" y="278.0" width="800" height="4.3" fill="url(#o20)"/>
<rect x="1530" y="282.0" width="800" height="4.3" fill="url(#o21)"/>
<rect x="1530" y="286.0" width="800" height="4.3" fill="url(#o22)"/>
<rect x="1530" y="290.0" width="800" height="4.3" fill="url(#o23)"/>
<rect x="1530" y="294.0" width="800" height="4.3" fill="url(#o24)"/>
<rect x="1530" y="298.0" width="800" height="4.3" fill="url(#o25)"/>
<rect x="1530" y="302.0" width="800" height="4.3" fill="url(#o26)"/>
<rect x="1530" y="306.0" width="800" height="4.3" fill="url(#o27)"/>
<rect x="1530" y="310.0" width="800" height="4.3" fill="url(#o28)"/>
<rect x="1530" y="314.0" width="800" height="4.3" fill="url(#o29)"/>
<rect x="1530" y="318.0" width="800" height="4.3" fill="url(#o30)"/>
<rect x="1530" y="322.0" width="800" height="4.3" fill="url(#o31)"/>
<rect x="1530" y="326.0" width="800" height="4.3" fill="url(#o32)"/>
<rect x="1530" y="330.0" width="800" height="4.3" fill="url(#o33)"/>
<rect x="1530" y="334.0" width="800" height="4.3" fill="url(#o34)"/>
<rect x="1530" y="338.0" width="800" height="4.3" fill="url(#o35)"/>
<rect x="1530" y="342.0" width="800" height="4.3" fill="url(#o36)"/>
<rect x="1530" y="346.0" width="800" height="4.3" fill="url(#o37)"/>
<rect x="1530" y="350.0" width="800" height="4.3" fill="url(#o38)"/>
<rect x="1530" y="354.0" width="800" height="4.3" fill="url(#o39)"/>
<rect x="1530" y="358.0" width="800" height="4.3" fill="url(#o40)"/>
<rect x="1530" y="362.0" width="800" height="4.3" fill="url(#o41)"/>
<rect x="1530" y="366.0" width="800" height="4.3" fill="url(#o42)"/>
<rect x="1530" y="370.0" width="800" height="4.3" fill="url(#o43)"/>
<rect x="1530" y="374.0" width="800" height="4.3" fill="url(#o44)"/>
<rect x="1530" y="378.0" width="800" height="4.3" fill="url(#o45)"/>
<rect x="1530" y="382.0" width="800" height="4.3" fill="url(#o46)"/>
<rect x="1530" y="386.0" width="800" height="4.3" fill="url(#o47)"/>
<rect x="1530" y="390.0" width="800" height="4.3" fill="url(#o48)"/>
<rect x="1530" y="394.0" width="800" height="4.3" fill="url(#o49)"/>
<rect x="1530" y="398.0" width="800" height="4.3" fill="url(#o50)"/>
<rect x="1530" y="402.0" width="800" height="4.3" fill="url(#o51)"/>
<rect x="1530" y="406.0" width="800" height="4.3" fill="url(#o52)"/>
<rect x="1530" y="410.0" width="800" height="4.3" fill="url(#o53)"/>
<rect x="1530" y="414.0" width="800" height="4.3" fill="url(#o54)"/>
<rect x="1530" y="418.0" width="800" height="4.3" fill="url(#o55)"/>
<rect x="1530" y="422.0" width="800" height="4.3" fill="url(#o56)"/>
<rect x="1530" y="426.0" width="800" height="4.3" fill="url(#o57)"/>
<rect x="1530" y="430.0" width="800" height="4.3" fill="url(#o58)"/>
<rect x="1530" y="434.0" width="800" height="4.3" fill="url(#o59)"/>
<rect x="1530" y="438.0" width="800" height="4.3" fill="url(#o60)"/>
<rect x="1530" y="442.0" width="800" height="4.3" fill="url(#o61)"/>
<rect x="1530" y="446.0" width="800" height="4.3" fill="url(#o62)"/>
<rect x="1530" y="450.0" width="800" height="4.3" fill="url(#o63)"/>
<rect x="1530" y="454.0" width="800" height="4.3" fill="url(#o64)"/>
<rect x="1530" y="458.0" width="800" height="4.3" fill="url(#o65)"/>
<rect x="1530" y="462.0" width="800" height="4.3" fill="url(#o66)"/>
<rect x="1530" y="466.0" width="800" height="4.3" fill="url(#o67)"/>
<rect x="1530" y="470.0" width="800" height="4.3" fill="url(#o68)"/>
<rect x="1530" y="474.0" width="800" height="4.3" fill="url(#o69)"/>
<rect x="1530" y="478.0" width="800" height="4.3" fill="url(#o70)"/>
<rect x="1530" y="482.0" width="800" height="4.3" fill="url(#o71)"/>
<rect x="1530" y="486.0" width="800" height="4.3" fill="url(#o72)"/>
<rect x="1530" y="490.0" width="800" height="4.3" fill="url(#o73)"/>
<rect x="1530" y="494.0" width="800" height="4.3" fill="url(#o74)"/>
<rect x="1530" y="498.0" width="800" height="4.3" fill="url(#o75)"/>
<rect x="1530" y="502.0" width="800" height="4.3" fill="url(#o76)"/>
<rect x="1530" y="506.0" width="800" height="4.3" fill="url(#o77)"/>
<rect x="1530" y="510.0" width="800" height="4.3" fill="url(#o78)"/>
<rect x="1530" y="514.0" width="800" height="4.3" fill="url(#o79)"/>
<rect x="1530" y="518.0" width="800" height="4.3" fill="url(#o80)"/>
<rect x="1530" y="522.0" width="800" height="4.3" fill="url(#o81)"/>
<rect x="1530" y="526.0" width="800" height="4.3" fill="url(#o82)"/>
<rect x="1530" y="530.0" width="800" height="4.3" fill="url(#o83)"/>
<rect x="1530" y="534.0" width="800" height="4.3" fill="url(#o84)"/>
<rect x="1530" y="538.0" width="800" height="4.3" fill="url(#o85)"/>
<rect x="1530" y="542.0" width="800" height="4.3" fill="url(#o86)"/>
<rect x="1530" y="546.0" width="800" height="4.3" fill="url(#o87)"/>
<rect x="1530" y="550.0" width="800" height="4.3" fill="url(#o88)"/>
<rect x="1530" y="554.0" width="800" height="4.3" fill="url(#o89)"/>
<rect x="1530" y="558.0" width="800" height="4.3" fill="url(#o90)"/>
<rect x="1530" y="562.0" width="800" height="4.3" fill="url(#o91)"/>
<rect x="1530" y="566.0" width="800" height="4.3" fill="url(#o92)"/>
<rect x="1530" y="570.0" width="800" height="4.3" fill="url(#o93)"/>
<rect x="1530" y="574.0" width="800" height="4.3" fill="url(#o94)"/>
<rect x="1530" y="578.0" width="800" height="4.3" fill="url(#o95)"/>
<rect x="1530" y="582.0" width="800" height="4.3" fill="url(#o96)"/>
<rect x="1530" y="586.0" width="800" height="4.3" fill="url(#o97)"/>
<rect x="1530" y="590.0" width="800" height="4.3" fill="url(#o98)"/>
<rect x="1530" y="594.0" width="800" height="4.3" fill="url(#o99)"/>
<rect x="1530" y="598.0" width="800" height="4.3" fill="url(#o100)"/>
<rect x="1530" y="602.0" width="800" height="4.3" fill="url(#o101)"/>
<rect x="1530" y="606.0" width="800" height="4.3" fill="url(#o102)"/>
<rect x="1530" y="610.0" width="800" height="4.3" fill="url(#o103)"/>
<rect x="1530" y="614.0" width="800" height="4.3" fill="url(#o104)"/>
<rect x="1530" y="618.0" width="800" height="4.3" fill="url(#o105)"/>
<rect x="1530" y="622.0" width="800" height="4.3" fill="url(#o106)"/>
<rect x="1530" y="626.0" width="800" height="4.3" fill="url(#o107)"/>
<rect x="1530" y="630.0" width="800" height="4.3" fill="url(#o108)"/>
<rect x="1530" y="634.0" width="800" height="4.3" fill="url(#o109)"/>
<rect x="1530" y="638.0" width="800" height="4.3" fill="url(#o110)"/>
<rect x="1530" y="642.0" width="800" height="4.3" fill="url(#o111)"/>
<rect x="1530" y="646.0" width="800" height="4.3" fill="url(#o112)"/>
<rect x="1530" y="650.0" width="800" height="4.3" fill="url(#o113)"/>
<rect x="1530" y="654.0" width="800" height="4.3" fill="url(#o114)"/>
<rect x="1530" y="658.0" width="800" height="4.3" fill="url(#o115)"/>
<rect x="1530" y="662.0" width="800" height="4.3" fill="url(#o116)"/>
<rect x="1530" y="666.0" width="800" height="4.3" fill="url(#o117)"/>
<rect x="1530" y="670.0" width="800" height="4.3" fill="url(#o118)"/>
<rect x="1530" y="674.0" width="800" height="4.3" fill="url(#o119)"/>
<rect x="1530" y="678.0" width="800" height="4.3" fill="url(#o120)"/>
<rect x="1530" y="682.0" width="800" height="4.3" fill="url(#o121)"/>
<rect x="1530" y="686.0" width="800" height="4.3" fill="url(#o122)"/>
<rect x="1530" y="690.0" width="800" height="4.3" fill="url(#o123)"/>
<rect x="1530" y="694.0" width="800" height="4.3" fill="url(#o124)"/>
<rect x="1530" y="698.0" width="800" height="4.3" fill="url(#o125)"/>
<rect x="1530" y="702.0" width="800" height="4.3" fill="url(#o126)"/>
<rect x="1530" y="706.0" width="800" height="4.3" fill="url(#o127)"/>
<rect x="1530" y="710.0" width="800" height="4.3" fill="url(#o128)"/>
<rect x="1530" y="714.0" width="800" height="4.3" fill="url(#o129)"/>
<rect x="1530" y="718.0" width="800" height="4.3" fill="url(#o130)"/>
<rect x="1530" y="722.0" width="800" height="4.3" fill="url(#o131)"/>
<rect x="1530" y="726.0" width="800" height="4.3" fill="url(#o132)"/>
<rect x="1530" y="730.0" width="800" height="4.3" fill="url(#o133)"/>
<rect x="1530" y="734.0" width="800" height="4.3" fill="url(#o134)"/>
<rect x="1530" y="738.0" width="800" height="4.3" fill="url(#o135)"/>
<rect x="1530" y="742.0" width="800" height="4.3" fill="url(#o136)"/>
<rect x="1530" y="746.0" width="800" height="4.3" fill="url(#o137)"/>
<rect x="1530" y="750.0" width="800" height="4.3" fill="url(#o138)"/>
<rect x="1530" y="754.0" width="800" height="4.3" fill="url(#o139)"/>
<rect x="1530" y="758.0" width="800" height="4.3" fill="url(#o140)"/>
<rect x="1530" y="762.0" width="800" height="4.3" fill="url(#o141)"/>
<rect x="1530" y="766.0" width="800" height="4.3" fill="url(#o142)"/>
<rect x="1530" y="770.0" width="800" height="4.3" fill="url(#o143)"/>
<rect x="1530" y="774.0" width="800" height="4.3" fill="url(#o144)"/>
<rect x="1530" y="778.0" width="800" height="4.3" fill="url(#o145)"/>
<rect x="1530" y="782.0" width="800" height="4.3" fill="url(#o146)"/>
<rect x="1530" y="786.0" width="800" height="4.3" fill="url(#o147)"/>
<rect x="1530" y="790.0" width="800" height="4.3" fill="url(#o148)"/>
<rect x="1530" y="794.0" width="800" height="4.3" fill="url(#o149)"/>
<rect x="1530" y="798.0" width="800" height="4.3" fill="url(#o150)"/>
<rect x="1530" y="802.0" width="800" height="4.3" fill="url(#o151)"/>
<rect x="1530" y="806.0" width="800" height="4.3" fill="url(#o152)"/>
<rect x="1530" y="810.0" width="800" height="4.3" fill="url(#o153)"/>
<rect x="1530" y="814.0" width="800" height="4.3" fill="url(#o154)"/>
<rect x="1530" y="818.0" width="800" height="4.3" fill="url(#o155)"/>
<rect x="1530" y="822.0" width="800" height="4.3" fill="url(#o156)"/>
<rect x="1530" y="826.0" width="800" height="4.3" fill="url(#o157)"/>
<rect x="1530" y="830.0" width="800" height="4.3" fill="url(#o158)"/>
<rect x="1530" y="834.0" width="800" height="4.3" fill="url(#o159)"/>
<rect x="1530" y="838.0" width="800" height="4.3" fill="url(#o160)"/>
<rect x="1530" y="842.0" width="800" height="4.3" fill="url(#o161)"/>
<rect x="1530" y="846.0" width="800" height="4.3" fill="url(#o162)"/>
<rect x="1530" y="850.0" width="800" height="4.3" fill="url(#o163)"/>
<rect x="1530" y="854.0" width="800" height="4.3" fill="url(#o164)"/>
<rect x="1530" y="858.0" width="800" height="4.3" fill="url(#o165)"/>
<rect x="1530" y="862.0" width="800" height="4.3" fill="url(#o166)"/>
<rect x="1530" y="866.0" width="800" height="4.3" fill="url(#o167)"/>
<rect x="1530" y="870.0" width="800" height="4.3" fill="url(#o168)"/>
<rect x="1530" y="874.0" width="800" height="4.3" fill="url(#o169)"/>
<rect x="1530" y="878.0" width="800" height="4.3" fill="url(#o170)"/>
<rect x="1530" y="882.0" width="800" height="4.3" fill="url(#o171)"/></g>
<g clip-path="url(#tri)"><rect x="1688" y="401.0" width="540" height="3.3" fill="url(#t0)"/>
<rect x="1688" y="404.0" width="540" height="3.3" fill="url(#t1)"/>
<rect x="1688" y="407.0" width="540" height="3.3" fill="url(#t2)"/>
<rect x="1688" y="410.0" width="540" height="3.3" fill="url(#t3)"/>
<rect x="1688" y="413.0" width="540" height="3.3" fill="url(#t4)"/>
<rect x="1688" y="416.0" width="540" height="3.3" fill="url(#t5)"/>
<rect x="1688" y="419.0" width="540" height="3.3" fill="url(#t6)"/>
<rect x="1688" y="422.0" width="540" height="3.3" fill="url(#t7)"/>
<rect x="1688" y="425.0" width="540" height="3.3" fill="url(#t8)"/>
<rect x="1688" y="428.0" width="540" height="3.3" fill="url(#t9)"/>
<rect x="1688" y="431.0" width="540" height="3.3" fill="url(#t10)"/>
<rect x="1688" y="434.0" width="540" height="3.3" fill="url(#t11)"/>
<rect x="1688" y="437.0" width="540" height="3.3" fill="url(#t12)"/>
<rect x="1688" y="440.0" width="540" height="3.3" fill="url(#t13)"/>
<rect x="1688" y="443.0" width="540" height="3.3" fill="url(#t14)"/>
<rect x="1688" y="446.0" width="540" height="3.3" fill="url(#t15)"/>
<rect x="1688" y="449.0" width="540" height="3.3" fill="url(#t16)"/>
<rect x="1688" y="452.0" width="540" height="3.3" fill="url(#t17)"/>
<rect x="1688" y="455.0" width="540" height="3.3" fill="url(#t18)"/>
<rect x="1688" y="458.0" width="540" height="3.3" fill="url(#t19)"/>
<rect x="1688" y="461.0" width="540" height="3.3" fill="url(#t20)"/>
<rect x="1688" y="464.0" width="540" height="3.3" fill="url(#t21)"/>
<rect x="1688" y="467.0" width="540" height="3.3" fill="url(#t22)"/>
<rect x="1688" y="470.0" width="540" height="3.3" fill="url(#t23)"/>
<rect x="1688" y="473.0" width="540" height="3.3" fill="url(#t24)"/>
<rect x="1688" y="476.0" width="540" height="3.3" fill="url(#t25)"/>
<rect x="1688" y="479.0" width="540" height="3.3" fill="url(#t26)"/>
<rect x="1688" y="482.0" width="540" height="3.3" fill="url(#t27)"/>
<rect x="1688" y="485.0" width="540" height="3.3" fill="url(#t28)"/>
<rect x="1688" y="488.0" width="540" height="3.3" fill="url(#t29)"/>
<rect x="1688" y="491.0" width="540" height="3.3" fill="url(#t30)"/>
<rect x="1688" y="494.0" width="540" height="3.3" fill="url(#t31)"/>
<rect x="1688" y="497.0" width="540" height="3.3" fill="url(#t32)"/>
<rect x="1688" y="500.0" width="540" height="3.3" fill="url(#t33)"/>
<rect x="1688" y="503.0" width="540" height="3.3" fill="url(#t34)"/>
<rect x="1688" y="506.0" width="540" height="3.3" fill="url(#t35)"/>
<rect x="1688" y="509.0" width="540" height="3.3" fill="url(#t36)"/>
<rect x="1688" y="512.0" width="540" height="3.3" fill="url(#t37)"/>
<rect x="1688" y="515.0" width="540" height="3.3" fill="url(#t38)"/>
<rect x="1688" y="518.0" width="540" height="3.3" fill="url(#t39)"/>
<rect x="1688" y="521.0" width="540" height="3.3" fill="url(#t40)"/>
<rect x="1688" y="524.0" width="540" height="3.3" fill="url(#t41)"/>
<rect x="1688" y="527.0" width="540" height="3.3" fill="url(#t42)"/>
<rect x="1688" y="530.0" width="540" height="3.3" fill="url(#t43)"/>
<rect x="1688" y="533.0" width="540" height="3.3" fill="url(#t44)"/>
<rect x="1688" y="536.0" width="540" height="3.3" fill="url(#t45)"/>
<rect x="1688" y="539.0" width="540" height="3.3" fill="url(#t46)"/>
<rect x="1688" y="542.0" width="540" height="3.3" fill="url(#t47)"/>
<rect x="1688" y="545.0" width="540" height="3.3" fill="url(#t48)"/>
<rect x="1688" y="548.0" width="540" height="3.3" fill="url(#t49)"/>
<rect x="1688" y="551.0" width="540" height="3.3" fill="url(#t50)"/>
<rect x="1688" y="554.0" width="540" height="3.3" fill="url(#t51)"/>
<rect x="1688" y="557.0" width="540" height="3.3" fill="url(#t52)"/>
<rect x="1688" y="560.0" width="540" height="3.3" fill="url(#t53)"/>
<rect x="1688" y="563.0" width="540" height="3.3" fill="url(#t54)"/>
<rect x="1688" y="566.0" width="540" height="3.3" fill="url(#t55)"/>
<rect x="1688" y="569.0" width="540" height="3.3" fill="url(#t56)"/>
<rect x="1688" y="572.0" width="540" height="3.3" fill="url(#t57)"/>
<rect x="1688" y="575.0" width="540" height="3.3" fill="url(#t58)"/>
<rect x="1688" y="578.0" width="540" height="3.3" fill="url(#t59)"/>
<rect x="1688" y="581.0" width="540" height="3.3" fill="url(#t60)"/>
<rect x="1688" y="584.0" width="540" height="3.3" fill="url(#t61)"/>
<rect x="1688" y="587.0" width="540" height="3.3" fill="url(#t62)"/>
<rect x="1688" y="590.0" width="540" height="3.3" fill="url(#t63)"/>
<rect x="1688" y="593.0" width="540" height="3.3" fill="url(#t64)"/>
<rect x="1688" y="596.0" width="540" height="3.3" fill="url(#t65)"/>
<rect x="1688" y="599.0" width="540" height="3.3" fill="url(#t66)"/>
<rect x="1688" y="602.0" width="540" height="3.3" fill="url(#t67)"/>
<rect x="1688" y="605.0" width="540" height="3.3" fill="url(#t68)"/>
<rect x="1688" y="608.0" width="540" height="3.3" fill="url(#t69)"/>
<rect x="1688" y="611.0" width="540" height="3.3" fill="url(#t70)"/>
<rect x="1688" y="614.0" width="540" height="3.3" fill="url(#t71)"/>
<rect x="1688" y="617.0" width="540" height="3.3" fill="url(#t72)"/>
<rect x="1688" y="620.0" width="540" height="3.3" fill="url(#t73)"/>
<rect x="1688" y="623.0" width="540" height="3.3" fill="url(#t74)"/>
<rect x="1688" y="626.0" width="540" height="3.3" fill="url(#t75)"/>
<rect x="1688" y="629.0" width="540" height="3.3" fill="url(#t76)"/>
<rect x="1688" y="632.0" width="540" height="3.3" fill="url(#t77)"/>
<rect x="1688" y="635.0" width="540" height="3.3" fill="url(#t78)"/>
<rect x="1688" y="638.0" width="540" height="3.3" fill="url(#t79)"/>
<rect x="1688" y="641.0" width="540" height="3.3" fill="url(#t80)"/>
<rect x="1688" y="644.0" width="540" height="3.3" fill="url(#t81)"/>
<rect x="1688" y="647.0" width="540" height="3.3" fill="url(#t82)"/>
<rect x="1688" y="650.0" width="540" height="3.3" fill="url(#t83)"/>
<rect x="1688" y="653.0" width="540" height="3.3" fill="url(#t84)"/>
<rect x="1688" y="656.0" width="540" height="3.3" fill="url(#t85)"/>
<rect x="1688" y="659.0" width="540" height="3.3" fill="url(#t86)"/>
<rect x="1688" y="662.0" width="540" height="3.3" fill="url(#t87)"/>
<rect x="1688" y="665.0" width="540" height="3.3" fill="url(#t88)"/>
<rect x="1688" y="668.0" width="540" height="3.3" fill="url(#t89)"/>
<rect x="1688" y="671.0" width="540" height="3.3" fill="url(#t90)"/>
<rect x="1688" y="674.0" width="540" height="3.3" fill="url(#t91)"/>
<rect x="1688" y="677.0" width="540" height="3.3" fill="url(#t92)"/>
<rect x="1688" y="680.0" width="540" height="3.3" fill="url(#t93)"/>
<rect x="1688" y="683.0" width="540" height="3.3" fill="url(#t94)"/>
<rect x="1688" y="686.0" width="540" height="3.3" fill="url(#t95)"/>
<rect x="1688" y="689.0" width="540" height="3.3" fill="url(#t96)"/>
<rect x="1688" y="692.0" width="540" height="3.3" fill="url(#t97)"/>
<rect x="1688" y="695.0" width="540" height="3.3" fill="url(#t98)"/>
<rect x="1688" y="698.0" width="540" height="3.3" fill="url(#t99)"/>
<rect x="1688" y="701.0" width="540" height="3.3" fill="url(#t100)"/>
<rect x="1688" y="704.0" width="540" height="3.3" fill="url(#t101)"/>
<rect x="1688" y="707.0" width="540" height="3.3" fill="url(#t102)"/>
<rect x="1688" y="710.0" width="540" height="3.3" fill="url(#t103)"/>
<rect x="1688" y="713.0" width="540" height="3.3" fill="url(#t104)"/>
<rect x="1688" y="716.0" width="540" height="3.3" fill="url(#t105)"/>
<rect x="1688" y="719.0" width="540" height="3.3" fill="url(#t106)"/>
<rect x="1688" y="722.0" width="540" height="3.3" fill="url(#t107)"/>
<rect x="1688" y="725.0" width="540" height="3.3" fill="url(#t108)"/>
<rect x="1688" y="728.0" width="540" height="3.3" fill="url(#t109)"/>
<rect x="1688" y="731.0" width="540" height="3.3" fill="url(#t110)"/>
<rect x="1688" y="734.0" width="540" height="3.3" fill="url(#t111)"/>
<rect x="1688" y="737.0" width="540" height="3.3" fill="url(#t112)"/>
<rect x="1688" y="740.0" width="540" height="3.3" fill="url(#t113)"/>
<rect x="1688" y="743.0" width="540" height="3.3" fill="url(#t114)"/>
<rect x="1688" y="746.0" width="540" height="3.3" fill="url(#t115)"/>
<rect x="1688" y="749.0" width="540" height="3.3" fill="url(#t116)"/>
<rect x="1688" y="752.0" width="540" height="3.3" fill="url(#t117)"/>
<rect x="1688" y="755.0" width="540" height="3.3" fill="url(#t118)"/>
<rect x="1688" y="758.0" width="540" height="3.3" fill="url(#t119)"/>
<rect x="1688" y="761.0" width="540" height="3.3" fill="url(#t120)"/>
<rect x="1688" y="764.0" width="540" height="3.3" fill="url(#t121)"/>
<rect x="1688" y="767.0" width="540" height="3.3" fill="url(#t122)"/>
<rect x="1688" y="770.0" width="540" height="3.3" fill="url(#t123)"/>
<rect x="1688" y="773.0" width="540" height="3.3" fill="url(#t124)"/>
<rect x="1688" y="776.0" width="540" height="3.3" fill="url(#t125)"/>
<rect x="1688" y="779.0" width="540" height="3.3" fill="url(#t126)"/>
<rect x="1688" y="782.0" width="540" height="3.3" fill="url(#t127)"/>
<rect x="1688" y="785.0" width="540" height="3.3" fill="url(#t128)"/>
<rect x="1688" y="788.0" width="540" height="3.3" fill="url(#t129)"/>
<rect x="1688" y="791.0" width="540" height="3.3" fill="url(#t130)"/>
<rect x="1688" y="794.0" width="540" height="3.3" fill="url(#t131)"/>
<rect x="1688" y="797.0" width="540" height="3.3" fill="url(#t132)"/>
<rect x="1688" y="800.0" width="540" height="3.3" fill="url(#t133)"/>
<rect x="1688" y="803.0" width="540" height="3.3" fill="url(#t134)"/>
<rect x="1688" y="806.0" width="540" height="3.3" fill="url(#t135)"/>
<rect x="1688" y="809.0" width="540" height="3.3" fill="url(#t136)"/>
<rect x="1688" y="812.0" width="540" height="3.3" fill="url(#t137)"/>
<rect x="1688" y="815.0" width="540" height="3.3" fill="url(#t138)"/>
<rect x="1688" y="818.0" width="540" height="3.3" fill="url(#t139)"/>
<rect x="1688" y="821.0" width="540" height="3.3" fill="url(#t140)"/>
<rect x="1688" y="824.0" width="540" height="3.3" fill="url(#t141)"/>
<rect x="1688" y="827.0" width="540" height="3.3" fill="url(#t142)"/>
<rect x="1688" y="830.0" width="540" height="3.3" fill="url(#t143)"/>
<rect x="1688" y="833.0" width="540" height="3.3" fill="url(#t144)"/>
<rect x="1688" y="836.0" width="540" height="3.3" fill="url(#t145)"/>
<rect x="1688" y="839.0" width="540" height="3.3" fill="url(#t146)"/>
<rect x="1688" y="842.0" width="540" height="3.3" fill="url(#t147)"/></g>
<rect x="1528.0" y="195.3" width="916.0" height="694.7" fill="none" stroke="#a0a0a0" stroke-width="2"/>
<line x1="1528.0" y1="890" x2="1528.0" y2="898.5" stroke="#d0d0d0" stroke-width="1.6"/>
<text x="1528.0" y="920.5" font-size="19.5" fill="#d2d2d2" text-anchor="middle">0</text>
<line x1="1520" y1="890.8" x2="1528" y2="890.8" stroke="#d0d0d0" stroke-width="1.6"/>
<text x="1519.5" y="898.8" font-size="19.5" fill="#d2d2d2" text-anchor="end">0</text>
<line x1="1636.9" y1="890" x2="1636.9" y2="898.5" stroke="#d0d0d0" stroke-width="1.6"/>
<text x="1636.9" y="920.5" font-size="19.5" fill="#d2d2d2" text-anchor="middle">0,1</text>
<line x1="1520" y1="808.1" x2="1528" y2="808.1" stroke="#d0d0d0" stroke-width="1.6"/>
<text x="1519.5" y="816.1" font-size="19.5" fill="#d2d2d2" text-anchor="end">0,1</text>
<line x1="1745.8" y1="890" x2="1745.8" y2="898.5" stroke="#d0d0d0" stroke-width="1.6"/>
<text x="1745.8" y="920.5" font-size="19.5" fill="#d2d2d2" text-anchor="middle">0,2</text>
<line x1="1520" y1="725.4" x2="1528" y2="725.4" stroke="#d0d0d0" stroke-width="1.6"/>
<text x="1519.5" y="733.4" font-size="19.5" fill="#d2d2d2" text-anchor="end">0,2</text>
<line x1="1854.7" y1="890" x2="1854.7" y2="898.5" stroke="#d0d0d0" stroke-width="1.6"/>
<text x="1854.7" y="920.5" font-size="19.5" fill="#d2d2d2" text-anchor="middle">0,3</text>
<line x1="1520" y1="642.7" x2="1528" y2="642.7" stroke="#d0d0d0" stroke-width="1.6"/>
<text x="1519.5" y="650.7" font-size="19.5" fill="#d2d2d2" text-anchor="end">0,3</text>
<line x1="1963.6" y1="890" x2="1963.6" y2="898.5" stroke="#d0d0d0" stroke-width="1.6"/>
<text x="1963.6" y="920.5" font-size="19.5" fill="#d2d2d2" text-anchor="middle">0,4</text>
<line x1="1520" y1="560.0" x2="1528" y2="560.0" stroke="#d0d0d0" stroke-width="1.6"/>
<text x="1519.5" y="568.0" font-size="19.5" fill="#d2d2d2" text-anchor="end">0,4</text>
<line x1="2072.5" y1="890" x2="2072.5" y2="898.5" stroke="#d0d0d0" stroke-width="1.6"/>
<text x="2072.5" y="920.5" font-size="19.5" fill="#d2d2d2" text-anchor="middle">0,5</text>
<line x1="1520" y1="477.3" x2="1528" y2="477.3" stroke="#d0d0d0" stroke-width="1.6"/>
<text x="1519.5" y="485.3" font-size="19.5" fill="#d2d2d2" text-anchor="end">0,5</text>
<line x1="2181.4" y1="890" x2="2181.4" y2="898.5" stroke="#d0d0d0" stroke-width="1.6"/>
<text x="2181.4" y="920.5" font-size="19.5" fill="#d2d2d2" text-anchor="middle">0,6</text>
<line x1="1520" y1="394.6" x2="1528" y2="394.6" stroke="#d0d0d0" stroke-width="1.6"/>
<text x="1519.5" y="402.6" font-size="19.5" fill="#d2d2d2" text-anchor="end">0,6</text>
<line x1="2290.3" y1="890" x2="2290.3" y2="898.5" stroke="#d0d0d0" stroke-width="1.6"/>
<text x="2290.3" y="920.5" font-size="19.5" fill="#d2d2d2" text-anchor="middle">0,7</text>
<line x1="1520" y1="311.9" x2="1528" y2="311.9" stroke="#d0d0d0" stroke-width="1.6"/>
<text x="1519.5" y="319.9" font-size="19.5" fill="#d2d2d2" text-anchor="end">0,7</text>
<line x1="2399.2" y1="890" x2="2399.2" y2="898.5" stroke="#d0d0d0" stroke-width="1.6"/>
<text x="2399.2" y="920.5" font-size="19.5" fill="#d2d2d2" text-anchor="middle">0,8</text>
<line x1="1520" y1="229.2" x2="1528" y2="229.2" stroke="#d0d0d0" stroke-width="1.6"/>
<text x="1519.5" y="237.2" font-size="19.5" fill="#d2d2d2" text-anchor="end">0,8</text>
<rect x="1844.4" y="383.9" width="18" height="18" fill="none" stroke="#ffffff" stroke-width="2.6"/><rect x="1848.5" y="432.1" width="18" height="18" fill="none" stroke="#ffffff" stroke-width="2.6"/><rect x="1850.5" y="476.4" width="18" height="18" fill="none" stroke="#ffffff" stroke-width="2.6"/><rect x="1854.0" y="518.3" width="18" height="18" fill="none" stroke="#ffffff" stroke-width="2.6"/><rect x="1856.0" y="562.4" width="18" height="18" fill="none" stroke="#ffffff" stroke-width="2.6"/><rect x="1975.3" y="462.2" width="18" height="18" fill="none" stroke="#ffffff" stroke-width="2.6"/><rect x="1950.3" y="493.0" width="18" height="18" fill="none" stroke="#ffffff" stroke-width="2.6"/><rect x="1929.2" y="520.4" width="18" height="18" fill="none" stroke="#ffffff" stroke-width="2.6"/><rect x="1905.7" y="547.3" width="18" height="18" fill="none" stroke="#ffffff" stroke-width="2.6"/><rect x="1883.0" y="578.2" width="18" height="18" fill="none" stroke="#ffffff" stroke-width="2.6"/><rect x="1762.3" y="608.6" width="18" height="18" fill="none" stroke="#ffffff" stroke-width="2.6"/><rect x="1781.6" y="608.6" width="18" height="18" fill="none" stroke="#ffffff" stroke-width="2.6"/><rect x="1801.9" y="608.6" width="18" height="18" fill="none" stroke="#ffffff" stroke-width="2.6"/><rect x="1821.1" y="608.6" width="18" height="18" fill="none" stroke="#ffffff" stroke-width="2.6"/><rect x="1840.0" y="608.6" width="18" height="18" fill="none" stroke="#ffffff" stroke-width="2.6"/><rect x="2215.0" y="608.0" width="18" height="18" fill="none" stroke="#ffffff" stroke-width="2.6"/><rect x="2136.0" y="608.0" width="18" height="18" fill="none" stroke="#ffffff" stroke-width="2.6"/><rect x="2067.0" y="608.0" width="18" height="18" fill="none" stroke="#ffffff" stroke-width="2.6"/><rect x="2001.8" y="608.0" width="18" height="18" fill="none" stroke="#ffffff" stroke-width="2.6"/><rect x="1929.6" y="608.0" width="18" height="18" fill="none" stroke="#ffffff" stroke-width="2.6"/><rect x="1867.5" y="753.4" width="18" height="18" fill="none" stroke="#ffffff" stroke-width="2.6"/><rect x="1865.3" y="722.0" width="18" height="18" fill="none" stroke="#ffffff" stroke-width="2.6"/><rect x="1863.0" y="693.8" width="18" height="18" fill="none" stroke="#ffffff" stroke-width="2.6"/><rect x="1863.0" y="668.7" width="18" height="18" fill="none" stroke="#ffffff" stroke-width="2.6"/><rect x="1861.5" y="637.3" width="18" height="18" fill="none" stroke="#ffffff" stroke-width="2.6"/><rect x="1681.0" y="830.3" width="18" height="18" fill="none" stroke="#ffffff" stroke-width="2.6"/><rect x="1719.3" y="781.7" width="18" height="18" fill="none" stroke="#ffffff" stroke-width="2.6"/><rect x="1753.9" y="739.3" width="18" height="18" fill="none" stroke="#ffffff" stroke-width="2.6"/><rect x="1788.4" y="697.0" width="18" height="18" fill="none" stroke="#ffffff" stroke-width="2.6"/><rect x="1823.5" y="653.0" width="18" height="18" fill="none" stroke="#ffffff" stroke-width="2.6"/><rect x="1859.7" y="608.6" width="18" height="18" fill="none" stroke="#000000" stroke-width="2.6"/>
<circle cx="1843.7" cy="387.0" r="6.3" fill="#1fa81f" stroke="#111" stroke-width="1.8"/><circle cx="1849.4" cy="433.4" r="6.3" fill="#6fae6f" stroke="#111" stroke-width="1.8"/><circle cx="1853.4" cy="479.7" r="6.3" fill="#86b086" stroke="#111" stroke-width="1.8"/><circle cx="1859.0" cy="525.3" r="6.3" fill="#94b094" stroke="#111" stroke-width="1.8"/><circle cx="1865.0" cy="570.0" r="6.3" fill="#a4b0a4" stroke="#111" stroke-width="1.8"/><circle cx="1986.0" cy="471.6" r="6.3" fill="#b4b42c" stroke="#111" stroke-width="1.8"/><circle cx="1962.6" cy="500.4" r="6.3" fill="#b6b660" stroke="#111" stroke-width="1.8"/><circle cx="1939.7" cy="527.3" r="6.3" fill="#b8b87e" stroke="#111" stroke-width="1.8"/><circle cx="1919.0" cy="556.3" r="6.3" fill="#b8b898" stroke="#111" stroke-width="1.8"/><circle cx="1893.6" cy="585.2" r="6.3" fill="#b8b8aa" stroke="#111" stroke-width="1.8"/><circle cx="1762.8" cy="614.0" r="6.3" fill="#28b0b0" stroke="#111" stroke-width="1.8"/><circle cx="1785.8" cy="614.0" r="6.3" fill="#68aeae" stroke="#111" stroke-width="1.8"/><circle cx="1807.4" cy="614.0" r="6.3" fill="#82b0b0" stroke="#111" stroke-width="1.8"/><circle cx="1828.0" cy="614.0" r="6.3" fill="#94b0b0" stroke="#111" stroke-width="1.8"/><circle cx="1849.0" cy="614.0" r="6.3" fill="#a6b2b2" stroke="#111" stroke-width="1.8"/><circle cx="2221.7" cy="614.0" r="6.3" fill="#c02424" stroke="#111" stroke-width="1.8"/><circle cx="2159.0" cy="614.0" r="6.3" fill="#c04e4e" stroke="#111" stroke-width="1.8"/><circle cx="2087.7" cy="614.0" r="6.3" fill="#c06464" stroke="#111" stroke-width="1.8"/><circle cx="2021.0" cy="615.9" r="6.3" fill="#bc7c7c" stroke="#111" stroke-width="1.8"/><circle cx="1944.0" cy="614.0" r="6.3" fill="#b89898" stroke="#111" stroke-width="1.8"/><circle cx="1887.8" cy="758.4" r="6.3" fill="#c040c0" stroke="#111" stroke-width="1.8"/><circle cx="1884.3" cy="729.5" r="6.3" fill="#b868b8" stroke="#111" stroke-width="1.8"/><circle cx="1880.5" cy="700.6" r="6.3" fill="#b880b8" stroke="#111" stroke-width="1.8"/><circle cx="1876.5" cy="673.6" r="6.3" fill="#b490b4" stroke="#111" stroke-width="1.8"/><circle cx="1874.3" cy="643.2" r="6.3" fill="#b4a0b4" stroke="#111" stroke-width="1.8"/><circle cx="1682.2" cy="846.3" r="6.3" fill="#2222d8" stroke="#111" stroke-width="1.8"/><circle cx="1722.7" cy="798.0" r="6.3" fill="#6060c0" stroke="#111" stroke-width="1.8"/><circle cx="1761.3" cy="749.9" r="6.3" fill="#7070b8" stroke="#111" stroke-width="1.8"/><circle cx="1797.4" cy="704.4" r="6.3" fill="#8484b4" stroke="#111" stroke-width="1.8"/><circle cx="1833.5" cy="660.4" r="6.3" fill="#9898b0" stroke="#111" stroke-width="1.8"/><circle cx="1870.2" cy="614.0" r="6.3" fill="#ffffff" stroke="#111" stroke-width="1.8"/>
<g clip-path="url(#inset)"><rect x="2125" y="203.0" width="311" height="5.3" fill="url(#ia0)"/>
<rect x="2125" y="208.0" width="311" height="5.3" fill="url(#ia1)"/>
<rect x="2125" y="213.0" width="311" height="5.3" fill="url(#ia2)"/>
<rect x="2125" y="218.0" width="311" height="5.3" fill="url(#ia3)"/>
<rect x="2125" y="223.0" width="311" height="5.3" fill="url(#ia4)"/>
<rect x="2125" y="228.0" width="311" height="5.3" fill="url(#ia5)"/>
<rect x="2125" y="233.0" width="311" height="5.3" fill="url(#ia6)"/>
<rect x="2125" y="238.0" width="311" height="5.3" fill="url(#ia7)"/>
<rect x="2125" y="243.0" width="311" height="5.3" fill="url(#ia8)"/>
<rect x="2125" y="248.0" width="311" height="5.3" fill="url(#ia9)"/>
<rect x="2125" y="253.0" width="311" height="5.3" fill="url(#ia10)"/>
<rect x="2125" y="258.0" width="311" height="5.3" fill="url(#ia11)"/>
<rect x="2125" y="263.0" width="311" height="5.3" fill="url(#ia12)"/>
<rect x="2125" y="268.0" width="311" height="5.3" fill="url(#ia13)"/>
<rect x="2125" y="273.0" width="311" height="5.3" fill="url(#ia14)"/>
<rect x="2125" y="278.0" width="311" height="5.3" fill="url(#ia15)"/>
<rect x="2125" y="283.0" width="311" height="5.3" fill="url(#ia16)"/>
<rect x="2125" y="288.0" width="311" height="5.3" fill="url(#ia17)"/>
<rect x="2125" y="293.0" width="311" height="5.3" fill="url(#ia18)"/>
<rect x="2125" y="298.0" width="311" height="5.3" fill="url(#ia19)"/>
<rect x="2125" y="303.0" width="311" height="5.3" fill="url(#ia20)"/>
<rect x="2125" y="308.0" width="311" height="5.3" fill="url(#ia21)"/>
<rect x="2125" y="313.0" width="311" height="5.3" fill="url(#ia22)"/>
<rect x="2125" y="318.0" width="311" height="5.3" fill="url(#ia23)"/>
<rect x="2125" y="323.0" width="311" height="5.3" fill="url(#ia24)"/>
<rect x="2125" y="328.0" width="311" height="5.3" fill="url(#ia25)"/>
<rect x="2125" y="333.0" width="311" height="5.3" fill="url(#ia26)"/>
<rect x="2125" y="338.0" width="311" height="5.3" fill="url(#ia27)"/>
<rect x="2125" y="343.0" width="311" height="5.3" fill="url(#ia28)"/>
<rect x="2125" y="348.0" width="311" height="5.3" fill="url(#ia29)"/>
<rect x="2125" y="353.0" width="311" height="5.3" fill="url(#ia30)"/>
<rect x="2125" y="358.0" width="311" height="5.3" fill="url(#ia31)"/>
<rect x="2125" y="363.0" width="311" height="5.3" fill="url(#ia32)"/>
<rect x="2125" y="368.0" width="311" height="5.3" fill="url(#ia33)"/>
<rect x="2125" y="373.0" width="311" height="5.3" fill="url(#ia34)"/>
<rect x="2125" y="378.0" width="311" height="5.3" fill="url(#ia35)"/>
<rect x="2125" y="383.0" width="311" height="5.3" fill="url(#ia36)"/>
<rect x="2125" y="388.0" width="311" height="5.3" fill="url(#ia37)"/>
<rect x="2125" y="393.0" width="311" height="5.3" fill="url(#ia38)"/>
<rect x="2125" y="398.0" width="311" height="5.3" fill="url(#ia39)"/>
<rect x="2125" y="403.0" width="311" height="5.3" fill="url(#ia40)"/>
<rect x="2125" y="408.0" width="311" height="5.3" fill="url(#ia41)"/>
<rect x="2125" y="413.0" width="311" height="5.3" fill="url(#ia42)"/>
<rect x="2125" y="418.0" width="311" height="5.3" fill="url(#ia43)"/>
<rect x="2125" y="423.0" width="311" height="5.3" fill="url(#ia44)"/>
<rect x="2125" y="428.0" width="311" height="5.3" fill="url(#ia45)"/>
<rect x="2125" y="433.0" width="311" height="5.3" fill="url(#ia46)"/>
<rect x="2125" y="438.0" width="311" height="5.3" fill="url(#ia47)"/>
<rect x="2125" y="443.0" width="311" height="5.3" fill="url(#ia48)"/>
<rect x="2125" y="448.0" width="311" height="5.3" fill="url(#ia49)"/>
<rect x="2125" y="453.0" width="311" height="5.3" fill="url(#ia50)"/>
<rect x="2125" y="458.0" width="311" height="5.3" fill="url(#ia51)"/>
<rect x="2125" y="463.0" width="311" height="5.3" fill="url(#ia52)"/></g>
<g clip-path="url(#insetin)"><rect x="2125" y="225.0" width="311" height="5.3" fill="url(#ib0)"/>
<rect x="2125" y="230.0" width="311" height="5.3" fill="url(#ib1)"/>
<rect x="2125" y="235.0" width="311" height="5.3" fill="url(#ib2)"/>
<rect x="2125" y="240.0" width="311" height="5.3" fill="url(#ib3)"/>
<rect x="2125" y="245.0" width="311" height="5.3" fill="url(#ib4)"/>
<rect x="2125" y="250.0" width="311" height="5.3" fill="url(#ib5)"/>
<rect x="2125" y="255.0" width="311" height="5.3" fill="url(#ib6)"/>
<rect x="2125" y="260.0" width="311" height="5.3" fill="url(#ib7)"/>
<rect x="2125" y="265.0" width="311" height="5.3" fill="url(#ib8)"/>
<rect x="2125" y="270.0" width="311" height="5.3" fill="url(#ib9)"/>
<rect x="2125" y="275.0" width="311" height="5.3" fill="url(#ib10)"/>
<rect x="2125" y="280.0" width="311" height="5.3" fill="url(#ib11)"/>
<rect x="2125" y="285.0" width="311" height="5.3" fill="url(#ib12)"/>
<rect x="2125" y="290.0" width="311" height="5.3" fill="url(#ib13)"/>
<rect x="2125" y="295.0" width="311" height="5.3" fill="url(#ib14)"/>
<rect x="2125" y="300.0" width="311" height="5.3" fill="url(#ib15)"/>
<rect x="2125" y="305.0" width="311" height="5.3" fill="url(#ib16)"/>
<rect x="2125" y="310.0" width="311" height="5.3" fill="url(#ib17)"/>
<rect x="2125" y="315.0" width="311" height="5.3" fill="url(#ib18)"/>
<rect x="2125" y="320.0" width="311" height="5.3" fill="url(#ib19)"/>
<rect x="2125" y="325.0" width="311" height="5.3" fill="url(#ib20)"/>
<rect x="2125" y="330.0" width="311" height="5.3" fill="url(#ib21)"/>
<rect x="2125" y="335.0" width="311" height="5.3" fill="url(#ib22)"/>
<rect x="2125" y="340.0" width="311" height="5.3" fill="url(#ib23)"/>
<rect x="2125" y="345.0" width="311" height="5.3" fill="url(#ib24)"/>
<rect x="2125" y="350.0" width="311" height="5.3" fill="url(#ib25)"/>
<rect x="2125" y="355.0" width="311" height="5.3" fill="url(#ib26)"/>
<rect x="2125" y="360.0" width="311" height="5.3" fill="url(#ib27)"/>
<rect x="2125" y="365.0" width="311" height="5.3" fill="url(#ib28)"/>
<rect x="2125" y="370.0" width="311" height="5.3" fill="url(#ib29)"/>
<rect x="2125" y="375.0" width="311" height="5.3" fill="url(#ib30)"/>
<rect x="2125" y="380.0" width="311" height="5.3" fill="url(#ib31)"/>
<rect x="2125" y="385.0" width="311" height="5.3" fill="url(#ib32)"/>
<rect x="2125" y="390.0" width="311" height="5.3" fill="url(#ib33)"/>
<rect x="2125" y="395.0" width="311" height="5.3" fill="url(#ib34)"/>
<rect x="2125" y="400.0" width="311" height="5.3" fill="url(#ib35)"/>
<rect x="2125" y="405.0" width="311" height="5.3" fill="url(#ib36)"/>
<rect x="2125" y="410.0" width="311" height="5.3" fill="url(#ib37)"/>
<rect x="2125" y="415.0" width="311" height="5.3" fill="url(#ib38)"/>
<rect x="2125" y="420.0" width="311" height="5.3" fill="url(#ib39)"/>
<rect x="2125" y="425.0" width="311" height="5.3" fill="url(#ib40)"/>
<rect x="2125" y="430.0" width="311" height="5.3" fill="url(#ib41)"/>
<rect x="2125" y="435.0" width="311" height="5.3" fill="url(#ib42)"/>
<rect x="2125" y="440.0" width="311" height="5.3" fill="url(#ib43)"/>
<rect x="2125" y="445.0" width="311" height="5.3" fill="url(#ib44)"/>
<rect x="2125" y="450.0" width="311" height="5.3" fill="url(#ib45)"/>
<rect x="2125" y="455.0" width="311" height="5.3" fill="url(#ib46)"/>
<rect x="2125" y="460.0" width="311" height="5.3" fill="url(#ib47)"/>
<rect x="2125" y="465.0" width="311" height="5.3" fill="url(#ib48)"/></g>
<rect x="2125.0" y="203.7" width="310.3" height="262.0" fill="none" stroke="#999999" stroke-width="2.2"/>
<rect x="2268.1" y="324" width="19" height="19" fill="none" stroke="#ffffff" stroke-width="2.4"/>
<circle cx="2286.1" cy="336" r="6.5" fill="#b4b42c" stroke="#111" stroke-width="1.8"/>
<text x="121.5" y="1023.5" font-size="40.0" fill="#f2f2f2" textLength="309.0" lengthAdjust="spacingAndGlyphs">Current Reading</text>
<text x="121.5" y="1083.0" font-size="35.0" fill="#f2f2f2" textLength="144.0" lengthAdjust="spacingAndGlyphs">x: 0,4205</text>
<text x="121.5" y="1141.0" font-size="35.0" fill="#f2f2f2" textLength="145.5" lengthAdjust="spacingAndGlyphs">y: 0,5048</text>
<text x="121.5" y="1197.5" font-size="35.0" fill="#f2f2f2" textLength="135.5" lengthAdjust="spacingAndGlyphs">fL: 72,48</text>
<text x="121.5" y="1255.5" font-size="35.0" fill="#f2f2f2" textLength="224.0" lengthAdjust="spacingAndGlyphs">cd/m&#178;: 248,32</text>
<text x="760.5" y="988.0" font-size="20.5" fill="#d2d2d2" text-anchor="middle" textLength="117.0" lengthAdjust="spacingAndGlyphs">RGB Balance</text>
<rect x="605.0" y="995.0" width="354.2" height="255.0" fill="#222222"/>
<line x1="598.0" y1="1021.6" x2="959.2" y2="1021.6" stroke="#9a9a9a" stroke-width="1.5"/>
<text x="596.0" y="1028.6" font-size="19.5" fill="#d2d2d2" text-anchor="end">104</text>
<line x1="598.0" y1="1073.8" x2="959.2" y2="1073.8" stroke="#9a9a9a" stroke-width="1.5"/>
<text x="596.0" y="1080.8" font-size="19.5" fill="#d2d2d2" text-anchor="end">102</text>
<line x1="598.0" y1="1123.8" x2="959.2" y2="1123.8" stroke="#9a9a9a" stroke-width="1.5"/>
<text x="596.0" y="1130.8" font-size="19.5" fill="#d2d2d2" text-anchor="end">100</text>
<line x1="598.0" y1="1175.4" x2="959.2" y2="1175.4" stroke="#9a9a9a" stroke-width="1.5"/>
<text x="596.0" y="1182.4" font-size="19.5" fill="#d2d2d2" text-anchor="end">98</text>
<line x1="598.0" y1="1225.6" x2="959.2" y2="1225.6" stroke="#9a9a9a" stroke-width="1.5"/>
<text x="596.0" y="1232.6" font-size="19.5" fill="#d2d2d2" text-anchor="end">96</text>
<rect x="640.5" y="1089.5" width="91.5" height="161" fill="url(#rbr)" stroke="#000" stroke-width="2"/>
<rect x="734" y="1099" width="93" height="151.5" fill="url(#rbg)" stroke="#000" stroke-width="2"/>
<rect x="828.5" y="1137.5" width="92" height="113" fill="url(#rbb)" stroke="#000" stroke-width="2"/>
<rect x="605.0" y="995.0" width="354.2" height="255.0" fill="none" stroke="#9a9a9a" stroke-width="1.6"/>
<line x1="605" y1="1250" x2="605" y2="1258" stroke="#9a9a9a" stroke-width="1.6"/>
<line x1="959.2" y1="1250" x2="959.2" y2="1258" stroke="#9a9a9a" stroke-width="1.6"/>
<text x="782.0" y="1272.5" font-size="20.0" fill="#d2d2d2" text-anchor="middle">100%</text>
<rect x="986.0" y="959.5" width="1032.0" height="289.1" fill="#111"/>
<rect x="988.0" y="961.5" width="1028.0" height="44.1" fill="url(#thd)"/>
<rect x="988.0" y="1005.6" width="1028.0" height="40.0" fill="url(#tdk)"/>
<rect x="988.0" y="1045.6" width="1028.0" height="40.3" fill="url(#tlt)"/>
<rect x="988.0" y="1085.9" width="1028.0" height="40.0" fill="url(#tdk)"/>
<rect x="988.0" y="1125.9" width="1028.0" height="40.4" fill="url(#tlt)"/>
<rect x="988.0" y="1166.3" width="1028.0" height="39.9" fill="url(#tdk)"/>
<rect x="988.0" y="1206.2" width="1028.0" height="40.4" fill="url(#tlt)"/>
<text x="1311.6" y="993.3" font-size="23.0" fill="#ffffff" font-weight="bold" textLength="55.6" lengthAdjust="spacingAndGlyphs">20%</text>
<text x="1461.0" y="993.3" font-size="23.0" fill="#ffffff" font-weight="bold" textLength="56.6" lengthAdjust="spacingAndGlyphs">40%</text>
<text x="1611.5" y="993.3" font-size="23.0" fill="#ffffff" font-weight="bold" textLength="56.5" lengthAdjust="spacingAndGlyphs">60%</text>
<text x="1761.4" y="993.3" font-size="23.0" fill="#ffffff" font-weight="bold" textLength="56.9" lengthAdjust="spacingAndGlyphs">80%</text>
<text x="1904.0" y="993.3" font-size="23.0" fill="#ffffff" font-weight="bold" textLength="72.9" lengthAdjust="spacingAndGlyphs">100%</text>
<text x="1015.0" y="1034.4" font-size="24.0" fill="#f4f4f4" font-weight="bold" textLength="121.5" lengthAdjust="spacingAndGlyphs">x: CIE31</text>
<text x="1272.5" y="1034.4" font-size="23.0" fill="#f4f4f4" textLength="96.8" lengthAdjust="spacingAndGlyphs">0,3359</text>
<text x="1422.8" y="1034.4" font-size="23.0" fill="#f4f4f4" textLength="96.8" lengthAdjust="spacingAndGlyphs">0,3584</text>
<text x="1573.2" y="1034.4" font-size="23.0" fill="#f4f4f4" textLength="96.8" lengthAdjust="spacingAndGlyphs">0,3792</text>
<text x="1723.5" y="1034.4" font-size="23.0" fill="#f4f4f4" textLength="96.8" lengthAdjust="spacingAndGlyphs">0,3995</text>
<text x="1873.9" y="1034.4" font-size="23.0" fill="#f4f4f4" textLength="96.8" lengthAdjust="spacingAndGlyphs">0,4205</text>
<text x="1015.0" y="1074.6" font-size="24.0" fill="#f4f4f4" font-weight="bold" textLength="121.0" lengthAdjust="spacingAndGlyphs">y: CIE31</text>
<text x="1272.5" y="1074.6" font-size="23.0" fill="#f4f4f4" textLength="96.8" lengthAdjust="spacingAndGlyphs">0,3666</text>
<text x="1422.8" y="1074.6" font-size="23.0" fill="#f4f4f4" textLength="96.8" lengthAdjust="spacingAndGlyphs">0,4032</text>
<text x="1573.2" y="1074.6" font-size="23.0" fill="#f4f4f4" textLength="96.8" lengthAdjust="spacingAndGlyphs">0,4373</text>
<text x="1723.5" y="1074.6" font-size="23.0" fill="#f4f4f4" textLength="96.8" lengthAdjust="spacingAndGlyphs">0,4705</text>
<text x="1873.9" y="1074.6" font-size="23.0" fill="#f4f4f4" textLength="96.8" lengthAdjust="spacingAndGlyphs">0,5048</text>
<text x="1015.0" y="1114.8" font-size="24.0" fill="#f4f4f4" font-weight="bold" textLength="18.0" lengthAdjust="spacingAndGlyphs">Y</text>
<text x="1272.5" y="1114.8" font-size="23.0" fill="#f4f4f4" textLength="131.8" lengthAdjust="spacingAndGlyphs">259,6214</text>
<text x="1422.8" y="1114.8" font-size="23.0" fill="#f4f4f4" textLength="131.8" lengthAdjust="spacingAndGlyphs">255,8403</text>
<text x="1573.2" y="1114.8" font-size="23.0" fill="#f4f4f4" textLength="131.8" lengthAdjust="spacingAndGlyphs">252,9314</text>
<text x="1723.5" y="1114.8" font-size="23.0" fill="#f4f4f4" textLength="131.8" lengthAdjust="spacingAndGlyphs">250,5611</text>
<text x="1873.9" y="1114.8" font-size="23.0" fill="#f4f4f4" textLength="131.8" lengthAdjust="spacingAndGlyphs">248,3211</text>
<text x="1015.0" y="1155.0" font-size="24.0" fill="#f4f4f4" font-weight="bold" textLength="222.0" lengthAdjust="spacingAndGlyphs">Target x:CIE31</text>
<text x="1272.5" y="1155.0" font-size="23.0" fill="#f4f4f4" textLength="96.8" lengthAdjust="spacingAndGlyphs">0,3344</text>
<text x="1422.8" y="1155.0" font-size="23.0" fill="#f4f4f4" textLength="96.8" lengthAdjust="spacingAndGlyphs">0,3564</text>
<text x="1573.2" y="1155.0" font-size="23.0" fill="#f4f4f4" textLength="96.8" lengthAdjust="spacingAndGlyphs">0,3773</text>
<text x="1723.5" y="1155.0" font-size="23.0" fill="#f4f4f4" textLength="96.8" lengthAdjust="spacingAndGlyphs">0,3969</text>
<text x="1873.9" y="1155.0" font-size="23.0" fill="#f4f4f4" textLength="96.8" lengthAdjust="spacingAndGlyphs">0,4193</text>
<text x="1015.0" y="1195.2" font-size="24.0" fill="#f4f4f4" font-weight="bold" textLength="220.0" lengthAdjust="spacingAndGlyphs">Target y:CIE31</text>
<text x="1272.5" y="1195.2" font-size="23.0" fill="#f4f4f4" textLength="96.8" lengthAdjust="spacingAndGlyphs">0,3648</text>
<text x="1422.8" y="1195.2" font-size="23.0" fill="#f4f4f4" textLength="96.8" lengthAdjust="spacingAndGlyphs">0,4013</text>
<text x="1573.2" y="1195.2" font-size="23.0" fill="#f4f4f4" textLength="96.8" lengthAdjust="spacingAndGlyphs">0,4358</text>
<text x="1723.5" y="1195.2" font-size="23.0" fill="#f4f4f4" textLength="96.8" lengthAdjust="spacingAndGlyphs">0,4682</text>
<text x="1873.9" y="1195.2" font-size="23.0" fill="#f4f4f4" textLength="96.8" lengthAdjust="spacingAndGlyphs">0,5053</text>
<text x="1015.0" y="1235.4" font-size="24.0" fill="#f4f4f4" font-weight="bold" textLength="128.0" lengthAdjust="spacingAndGlyphs">Target Y</text>
<text x="1272.5" y="1235.4" font-size="23.0" fill="#f4f4f4" textLength="131.8" lengthAdjust="spacingAndGlyphs">253,1664</text>
<text x="1422.8" y="1235.4" font-size="23.0" fill="#f4f4f4" textLength="131.8" lengthAdjust="spacingAndGlyphs">248,7226</text>
<text x="1573.2" y="1235.4" font-size="23.0" fill="#f4f4f4" textLength="131.8" lengthAdjust="spacingAndGlyphs">245,3082</text>
<text x="1723.5" y="1235.4" font-size="23.0" fill="#f4f4f4" textLength="131.8" lengthAdjust="spacingAndGlyphs">242,6285</text>
<text x="1873.9" y="1235.4" font-size="23.0" fill="#f4f4f4" textLength="131.8" lengthAdjust="spacingAndGlyphs">240,0379</text>
<rect x="0" y="1283.5" width="2549" height="97" fill="#2a2a2a"/>
<rect x="1214" y="1286.5" width="862" height="94" fill="url(#bbar)"/>
<rect x="2" y="1287" width="67" height="91" rx="5" fill="url(#bbtn)"/>
<circle cx="35" cy="1300" r="11.5" fill="url(#circg)" opacity="0.6"/>
<path d="M29 1303 L35 1296.5 L41 1303 Z" fill="#222"/>
<rect x="9" y="1326" width="52.5" height="45.5" rx="5" fill="#ffff00" stroke="#8a8a20" stroke-width="1.2"/>
<rect x="77.8" y="1287" width="224.7" height="91" rx="5" fill="url(#bbtn)"/>
<rect x="85.4" y="1295.2" width="209.7" height="54" rx="4.5" fill="#c0c0a4" stroke="#6a6a50" stroke-width="1.2"/>
<text x="190.2" y="1371.5" font-size="15.5" fill="#2a2a2a" text-anchor="middle" font-weight="bold">20%</text>
<rect x="306.5" y="1287" width="224.1" height="91" rx="5" fill="url(#bbtn)"/>
<rect x="314.1" y="1295.2" width="209.1" height="54" rx="4.5" fill="#c2c187" stroke="#6a6a50" stroke-width="1.2"/>
<text x="418.6" y="1371.5" font-size="15.5" fill="#2a2a2a" text-anchor="middle" font-weight="bold">40%</text>
<rect x="534.6" y="1287" width="223.1" height="91" rx="5" fill="url(#bbtn)"/>
<rect x="542.2" y="1295.2" width="208.1" height="54" rx="4.5" fill="#c0bd66" stroke="#6a6a50" stroke-width="1.2"/>
<text x="646.2" y="1371.5" font-size="15.5" fill="#2a2a2a" text-anchor="middle" font-weight="bold">60%</text>
<rect x="762.6" y="1287" width="223.2" height="91" rx="5" fill="url(#bbtn)"/>
<rect x="770.2" y="1295.2" width="208.2" height="54" rx="4.5" fill="#c3c04b" stroke="#6a6a50" stroke-width="1.2"/>
<text x="874.2" y="1371.5" font-size="15.5" fill="#2a2a2a" text-anchor="middle" font-weight="bold">80%</text>
<rect x="990.7" y="1287" width="223.1" height="91" rx="5" fill="url(#bsel)"/>
<rect x="998.3" y="1295.2" width="208.1" height="54" rx="4.5" fill="#c5c200" stroke="#6a6a50" stroke-width="1.2"/>
<text x="1102.2" y="1371.5" font-size="15.5" fill="#ffffff" text-anchor="middle" font-weight="bold">100%</text>
<rect x="2075.5" y="1287" width="72" height="91" rx="6" fill="url(#bbtn2)"/>
<line x1="2075.5" y1="1314.5" x2="2147.5" y2="1314.5" stroke="#444" stroke-width="1.2"/>
<circle cx="2111.5" cy="1300" r="11" fill="url(#circg)" opacity="0.5"/>
<path d="M2105.5 1302.5 L2111.5 1296.5 L2117.5 1302.5 Z" fill="#222"/>
<rect x="2089.5" y="1324.5" width="44" height="43" rx="5" fill="url(#stopg)" stroke="#1a1a1a" stroke-width="3"/>
<rect x="2101" y="1337" width="21" height="20" fill="#0a0a0a"/>
<rect x="2149" y="1287" width="338.5" height="45.3" fill="url(#bbtn2)"/>
<line x1="2218.4" y1="1287" x2="2218.4" y2="1332.3" stroke="#2a2a2a" stroke-width="1.2"/>
<line x1="2286.5" y1="1287" x2="2286.5" y2="1332.3" stroke="#2a2a2a" stroke-width="1.2"/>
<line x1="2353.4" y1="1287" x2="2353.4" y2="1332.3" stroke="#2a2a2a" stroke-width="1.2"/>
<line x1="2421.0" y1="1287" x2="2421.0" y2="1332.3" stroke="#2a2a2a" stroke-width="1.2"/>
<circle cx="2183.5" cy="1309" r="14.5" fill="url(#circg)" opacity="0.45"/>
<circle cx="2251.5" cy="1309" r="14.5" fill="url(#circg)" opacity="0.45"/>
<circle cx="2320.0" cy="1309" r="14.5" fill="url(#circg)" opacity="0.45"/>
<circle cx="2387.0" cy="1309" r="14.5" fill="url(#circg)" opacity="0.45"/>
<circle cx="2454.0" cy="1309" r="14.5" fill="url(#circg)" opacity="0.45"/>
<rect x="2177.5" y="1303.5" width="11.5" height="11.5" fill="#2a2a2a"/>
<path d="M2247.5 1302 L2258 1310 L2247.5 1318 Z" fill="#2a2a2a"/>
<path d="M2314 1301 h-2.5 v16 h2.5 M2326 1301 h2.5 v16 h-2.5" fill="none" stroke="#2a2a2a" stroke-width="2"/><rect x="2317" y="1308" width="2" height="2" fill="#2a2a2a"/><rect x="2321" y="1308" width="2" height="2" fill="#2a2a2a"/>
<path d="M2387 1309 C2383 1303.5 2377 1303.5 2377 1309 C2377 1314.5 2383 1314.5 2387 1309 C2391 1303.5 2397 1303.5 2397 1309 C2397 1314.5 2391 1314.5 2387 1309 Z" fill="none" stroke="#2a2a2a" stroke-width="2.2"/>
<path d="M2447 1310 A7.5 7.5 0 0 1 2459.5 1303.5 M2461 1308 A7.5 7.5 0 0 1 2448.5 1314.5" fill="none" stroke="#2a2a2a" stroke-width="2.4"/><path d="M2457 1300 L2462.5 1302.5 L2459 1307 Z M2451 1318 L2445.5 1315.5 L2449 1311 Z" fill="#2a2a2a"/>
<rect x="2487.5" y="1287" width="62" height="45.3" fill="url(#dkg)"/>
<circle cx="2523" cy="1309" r="14.5" fill="#2c2c2c"/>
<rect x="2149" y="1333" width="400" height="45" fill="url(#bnx)"/>
<line x1="2353.4" y1="1333" x2="2353.4" y2="1378" stroke="#2a2a2a" stroke-width="1.2"/>
<circle cx="2195" cy="1356" r="14.5" fill="url(#circg)" opacity="0.45"/>
<circle cx="2515" cy="1356" r="14.5" fill="url(#circg)" opacity="0.45"/>
<text x="2195.0" y="1363.0" font-size="22.0" fill="#333" text-anchor="middle">&#171;</text>
<text x="2515.0" y="1363.0" font-size="22.0" fill="#333" text-anchor="middle">&#187;</text>
<text x="2236.0" y="1367.0" font-size="31.5" fill="#363636" font-weight="bold" textLength="74.0" lengthAdjust="spacingAndGlyphs">Back</text>
<text x="2395.5" y="1367.0" font-size="31.5" fill="#363636" font-weight="bold" textLength="77.0" lengthAdjust="spacingAndGlyphs">Next</text>
</svg>
</body></html>
